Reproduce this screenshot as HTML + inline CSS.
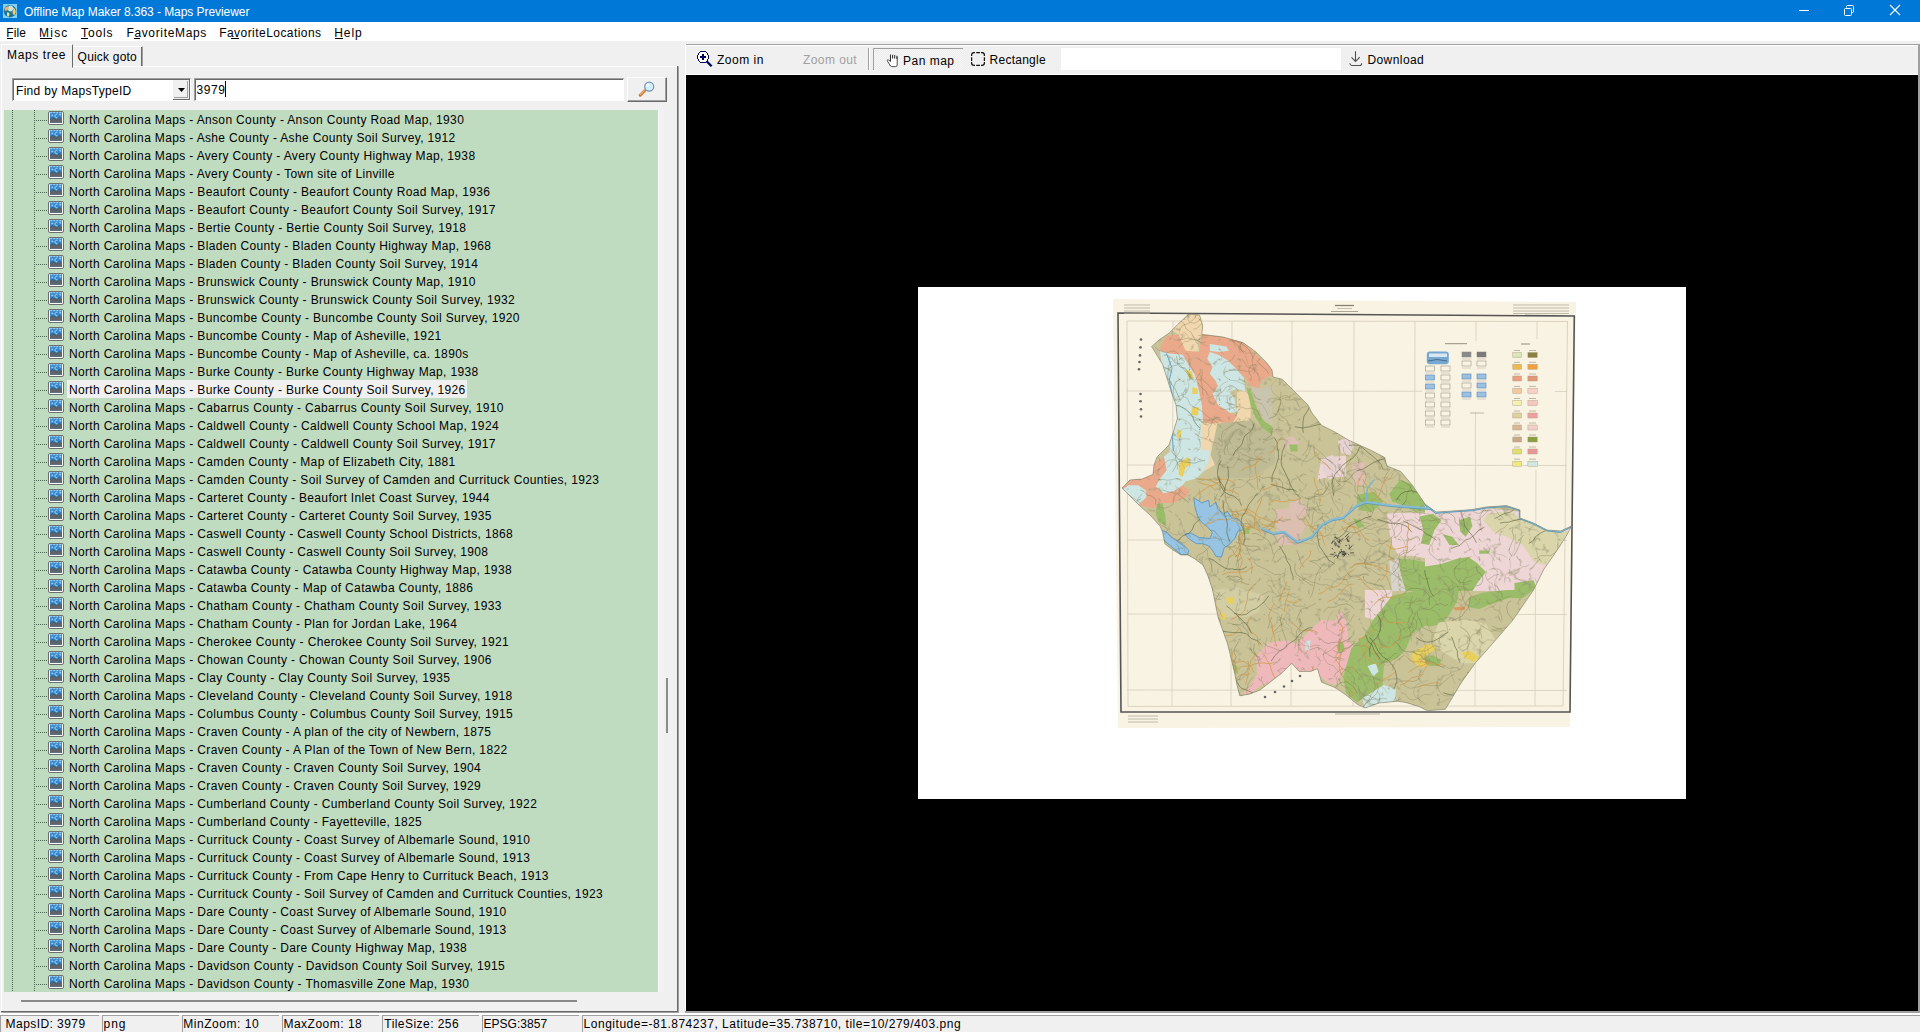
<!DOCTYPE html><html><head><meta charset="utf-8"><style>
*{margin:0;padding:0;box-sizing:border-box}
html,body{width:1920px;height:1032px;overflow:hidden;background:#f0f0f0;position:relative;font-family:"Liberation Sans",sans-serif}
.a{position:absolute}
.t{position:absolute;font-size:12px;line-height:12px;white-space:nowrap}
.u{text-decoration:underline}
</style></head><body>
<div class="a" style="left:0;top:0;width:1920px;height:22px;background:#0078d7"></div>
<svg class="a" style="left:3px;top:4px" width="14" height="14" viewBox="0 0 14 14">
<rect x="0" y="0" width="14" height="14" fill="#86d2f2"/>
<circle cx="7" cy="7.2" r="6.2" fill="#1f7396"/>
<ellipse cx="7.5" cy="4.5" rx="2.6" ry="3" fill="#c6e6ee"/>
<path d="M1.5 5 Q2.5 2 5.5 2.2 L5.8 4.5 L4.2 6.5 L2 6.8 Z" fill="#f0b464"/>
<path d="M9.2 3.2 Q12.5 4 12.8 8 L11.5 11 L9.8 10.2 L9.5 7.5 L10.5 5.8 Z" fill="#f2d06a"/>
<path d="M4.2 8.2 Q6.2 8 6.5 10 L5.8 12.4 L4.4 12.2 Q3.6 10 4.2 8.2 Z" fill="#e2e4a0"/>
</svg>
<div class="t" style="left:24.00px;top:6px;letter-spacing:-0.064px;color:#fff;">Offline Map Maker 8.363 - Maps Previewer</div>
<div class="a" style="left:1799px;top:10px;width:10px;height:1px;background:#fff"></div>
<svg class="a" style="left:1843px;top:5px" width="12" height="12" viewBox="0 0 12 12"><path d="M3.5 2.5 V1.5 Q3.5 0.5 4.5 0.5 H9.5 Q10.5 0.5 10.5 1.5 V6.5 Q10.5 7.5 9.5 7.5 H8.5" fill="none" stroke="#fff" stroke-width="1"/><rect x="1.5" y="3.5" width="7" height="7" rx="1" fill="none" stroke="#fff" stroke-width="1"/></svg>
<svg class="a" style="left:1889px;top:4px" width="12" height="12" viewBox="0 0 12 12"><path d="M1 1 L11 11 M11 1 L1 11" stroke="#fff" stroke-width="1.1"/></svg>
<div class="a" style="left:0;top:22px;width:1920px;height:19px;background:#fff"></div>
<div class="t" style="left:6.30px;top:27px;letter-spacing:0.067px;color:#000;">File</div>
<div class="t" style="left:39.00px;top:27px;letter-spacing:1.233px;color:#000;">Misc</div>
<div class="t" style="left:81.00px;top:27px;letter-spacing:0.875px;color:#000;">Tools</div>
<div class="t" style="left:126.40px;top:27px;letter-spacing:0.655px;color:#000;">FavoriteMaps</div>
<div class="t" style="left:219.20px;top:27px;letter-spacing:0.450px;color:#000;">FavoriteLocations</div>
<div class="t" style="left:334.30px;top:27px;letter-spacing:0.900px;color:#000;">Help</div>
<div class="a" style="left:7px;top:38px;width:6px;height:1px;background:#000"></div>
<div class="a" style="left:40px;top:38px;width:12px;height:1px;background:#000"></div>
<div class="a" style="left:81px;top:38px;width:7px;height:1px;background:#000"></div>
<div class="a" style="left:134px;top:38px;width:6px;height:1px;background:#000"></div>
<div class="a" style="left:231px;top:38px;width:8px;height:1px;background:#000"></div>
<div class="a" style="left:335px;top:38px;width:8px;height:1px;background:#000"></div>
<div class="a" style="left:1px;top:66px;width:678px;height:947px;border-left:1px solid #fff;border-top:1px solid #fff;border-right:2px solid #a0a0a0;border-bottom:2px solid #a0a0a0"></div>
<div class="a" style="left:677px;top:66px;width:1px;height:946px;background:#696969"></div>
<div class="a" style="left:1px;top:1011px;width:677px;height:1px;background:#696969"></div>
<div class="a" style="left:1px;top:44px;width:72px;height:24px;background:#f0f0f0;border-left:1px solid #fff;border-top:1px solid #fff;border-right:1px solid #a0a0a0"></div>
<div class="a" style="left:72px;top:45px;width:1px;height:22px;background:#696969"></div>
<div class="a" style="left:73px;top:46px;width:70px;height:20px;border-top:1px solid #fff;border-right:1px solid #a0a0a0"></div>
<div class="a" style="left:141px;top:47px;width:1px;height:19px;background:#696969"></div>
<div class="t" style="left:7.10px;top:49px;letter-spacing:0.612px;color:#000;">Maps tree</div>
<div class="t" style="left:77.60px;top:51px;letter-spacing:0.200px;color:#000;">Quick goto</div>
<div class="a" style="left:12px;top:78px;width:179px;height:23px;background:#fff;border-top:2px solid #a0a0a0;border-left:2px solid #a0a0a0;border-right:1px solid #fff;border-bottom:1px solid #fff"></div>
<div class="a" style="left:13px;top:79px;width:177px;height:1px;background:#696969"></div>
<div class="a" style="left:13px;top:79px;width:1px;height:21px;background:#696969"></div>
<div class="a" style="left:173px;top:80px;width:17px;height:20px;background:#f0f0f0;border-right:1px solid #696969;border-bottom:1px solid #696969"></div>
<div class="a" style="left:174px;top:81px;width:14px;height:17px;border-right:1px solid #a0a0a0;border-bottom:1px solid #a0a0a0"></div>
<svg class="a" style="left:178px;top:88px" width="7" height="4"><path d="M0 0 H7 L3.5 4 Z" fill="#000"/></svg>
<div class="t" style="left:16.00px;top:85px;letter-spacing:0.306px;color:#000;">Find by MapsTypeID</div>
<div class="a" style="left:194px;top:78px;width:430px;height:23px;background:#fff;border-top:2px solid #a0a0a0;border-left:2px solid #a0a0a0;border-right:1px solid #fff;border-bottom:1px solid #fff"></div>
<div class="a" style="left:195px;top:79px;width:428px;height:1px;background:#696969"></div>
<div class="a" style="left:195px;top:79px;width:1px;height:21px;background:#696969"></div>
<div class="t" style="left:196.50px;top:84px;letter-spacing:0.567px;color:#000;">3979</div>
<div class="a" style="left:225px;top:81px;width:1px;height:16px;background:#000"></div>
<div class="a" style="left:627px;top:77px;width:40px;height:25px;background:#f0f0f0;border-left:1px solid #fff;border-top:1px solid #fff;border-right:1px solid #696969;border-bottom:1px solid #696969"></div>
<div class="a" style="left:628px;top:78px;width:38px;height:23px;border-right:1px solid #a0a0a0;border-bottom:1px solid #a0a0a0"></div>
<svg class="a" style="left:638px;top:81px" width="18" height="17" viewBox="0 0 18 17">
<path d="M2.2 14.2 L6.6 9.8" stroke="#c87838" stroke-width="3" stroke-linecap="round"/>
<path d="M2.4 13.4 L6.2 9.6" stroke="#f2b878" stroke-width="1.1" stroke-linecap="round"/>
<circle cx="11.2" cy="5.6" r="4.5" fill="#d2f0fb" stroke="#7890b4" stroke-width="1.25"/>
<circle cx="10" cy="4.4" r="1.6" fill="#effbff"/>
</svg>
<div class="a" style="left:4px;top:110px;width:654px;height:882px;background:#c0dcc0"></div>
<div class="a" style="left:658px;top:110px;width:1px;height:882px;background:#fff"></div>
<div class="a" style="left:659px;top:110px;width:5px;height:882px;background:#f2f2f4"></div>
<div class="a" style="left:12px;top:110px;width:1px;height:882px;background:repeating-linear-gradient(#4d6652 0 1px,transparent 1px 2px)"></div>
<div class="a" style="left:34px;top:110px;width:1px;height:882px;background:repeating-linear-gradient(#4d6652 0 1px,transparent 1px 2px)"></div>
<div class="a" style="left:666px;top:678px;width:2px;height:55px;background:#8a8a8a"></div>
<div class="a" style="left:21px;top:1000px;width:556px;height:2px;background:#8a8a8a"></div>
<svg width="0" height="0" style="position:absolute"><defs><symbol id="ic" viewBox="0 0 16 14">
<rect x="0.5" y="0.5" width="15" height="13" rx="1.5" fill="#fff" stroke="#6e6e6e"/>
<rect x="2" y="1.2" width="12" height="10.6" fill="#3b87cf"/>
<path d="M2.5 1.7 H4 M5.5 1.7 H7 M8.5 1.7 H10 M11.5 1.7 H13" stroke="#a8dcf8" stroke-width="1"/>
<path d="M2 8.6 L4.5 6.3 L8.8 8.8 L11.4 6.3 L14 8.4 V11.8 H2 Z" fill="#606367"/>
<path d="M2 8.6 L4.5 6.3 L8.8 8.8 L11.4 6.3 L14 8.4" fill="none" stroke="#34506a" stroke-width="0.6"/>
<circle cx="4.3" cy="4.4" r="0.9" fill="#8fd4ff"/>
<path d="M9.3 3.4 A1.7 1.7 0 1 0 9.3 6.6" fill="none" stroke="#9ee0ff" stroke-width="1"/>
<path d="M12.2 2.6 V4.6 M11.2 3.6 H13.2" stroke="#9ee0ff" stroke-width="0.8"/>
</symbol></defs></svg>
<div class="a" style="left:36px;top:120px;width:12px;height:1px;background:repeating-linear-gradient(90deg,#4d6652 0 1px,transparent 1px 2px)"></div><svg class="a" style="left:48px;top:111px" width="16" height="14"><use href="#ic"/></svg><div class="t" style="left:68.9px;top:114px;letter-spacing:0.35px">North Carolina Maps - Anson County - Anson County Road Map, 1930</div><div class="a" style="left:36px;top:138px;width:12px;height:1px;background:repeating-linear-gradient(90deg,#4d6652 0 1px,transparent 1px 2px)"></div><svg class="a" style="left:48px;top:129px" width="16" height="14"><use href="#ic"/></svg><div class="t" style="left:68.9px;top:132px;letter-spacing:0.35px">North Carolina Maps - Ashe County - Ashe County Soil Survey, 1912</div><div class="a" style="left:36px;top:156px;width:12px;height:1px;background:repeating-linear-gradient(90deg,#4d6652 0 1px,transparent 1px 2px)"></div><svg class="a" style="left:48px;top:147px" width="16" height="14"><use href="#ic"/></svg><div class="t" style="left:68.9px;top:150px;letter-spacing:0.35px">North Carolina Maps - Avery County - Avery County Highway Map, 1938</div><div class="a" style="left:36px;top:174px;width:12px;height:1px;background:repeating-linear-gradient(90deg,#4d6652 0 1px,transparent 1px 2px)"></div><svg class="a" style="left:48px;top:165px" width="16" height="14"><use href="#ic"/></svg><div class="t" style="left:68.9px;top:168px;letter-spacing:0.35px">North Carolina Maps - Avery County - Town site of Linville</div><div class="a" style="left:36px;top:192px;width:12px;height:1px;background:repeating-linear-gradient(90deg,#4d6652 0 1px,transparent 1px 2px)"></div><svg class="a" style="left:48px;top:183px" width="16" height="14"><use href="#ic"/></svg><div class="t" style="left:68.9px;top:186px;letter-spacing:0.35px">North Carolina Maps - Beaufort County - Beaufort County Road Map, 1936</div><div class="a" style="left:36px;top:210px;width:12px;height:1px;background:repeating-linear-gradient(90deg,#4d6652 0 1px,transparent 1px 2px)"></div><svg class="a" style="left:48px;top:201px" width="16" height="14"><use href="#ic"/></svg><div class="t" style="left:68.9px;top:204px;letter-spacing:0.35px">North Carolina Maps - Beaufort County - Beaufort County Soil Survey, 1917</div><div class="a" style="left:36px;top:228px;width:12px;height:1px;background:repeating-linear-gradient(90deg,#4d6652 0 1px,transparent 1px 2px)"></div><svg class="a" style="left:48px;top:219px" width="16" height="14"><use href="#ic"/></svg><div class="t" style="left:68.9px;top:222px;letter-spacing:0.35px">North Carolina Maps - Bertie County - Bertie County Soil Survey, 1918</div><div class="a" style="left:36px;top:246px;width:12px;height:1px;background:repeating-linear-gradient(90deg,#4d6652 0 1px,transparent 1px 2px)"></div><svg class="a" style="left:48px;top:237px" width="16" height="14"><use href="#ic"/></svg><div class="t" style="left:68.9px;top:240px;letter-spacing:0.35px">North Carolina Maps - Bladen County - Bladen County Highway Map, 1968</div><div class="a" style="left:36px;top:264px;width:12px;height:1px;background:repeating-linear-gradient(90deg,#4d6652 0 1px,transparent 1px 2px)"></div><svg class="a" style="left:48px;top:255px" width="16" height="14"><use href="#ic"/></svg><div class="t" style="left:68.9px;top:258px;letter-spacing:0.35px">North Carolina Maps - Bladen County - Bladen County Soil Survey, 1914</div><div class="a" style="left:36px;top:282px;width:12px;height:1px;background:repeating-linear-gradient(90deg,#4d6652 0 1px,transparent 1px 2px)"></div><svg class="a" style="left:48px;top:273px" width="16" height="14"><use href="#ic"/></svg><div class="t" style="left:68.9px;top:276px;letter-spacing:0.35px">North Carolina Maps - Brunswick County - Brunswick County Map, 1910</div><div class="a" style="left:36px;top:300px;width:12px;height:1px;background:repeating-linear-gradient(90deg,#4d6652 0 1px,transparent 1px 2px)"></div><svg class="a" style="left:48px;top:291px" width="16" height="14"><use href="#ic"/></svg><div class="t" style="left:68.9px;top:294px;letter-spacing:0.35px">North Carolina Maps - Brunswick County - Brunswick County Soil Survey, 1932</div><div class="a" style="left:36px;top:318px;width:12px;height:1px;background:repeating-linear-gradient(90deg,#4d6652 0 1px,transparent 1px 2px)"></div><svg class="a" style="left:48px;top:309px" width="16" height="14"><use href="#ic"/></svg><div class="t" style="left:68.9px;top:312px;letter-spacing:0.35px">North Carolina Maps - Buncombe County - Buncombe County Soil Survey, 1920</div><div class="a" style="left:36px;top:336px;width:12px;height:1px;background:repeating-linear-gradient(90deg,#4d6652 0 1px,transparent 1px 2px)"></div><svg class="a" style="left:48px;top:327px" width="16" height="14"><use href="#ic"/></svg><div class="t" style="left:68.9px;top:330px;letter-spacing:0.35px">North Carolina Maps - Buncombe County - Map of Asheville, 1921</div><div class="a" style="left:36px;top:354px;width:12px;height:1px;background:repeating-linear-gradient(90deg,#4d6652 0 1px,transparent 1px 2px)"></div><svg class="a" style="left:48px;top:345px" width="16" height="14"><use href="#ic"/></svg><div class="t" style="left:68.9px;top:348px;letter-spacing:0.35px">North Carolina Maps - Buncombe County - Map of Asheville, ca. 1890s</div><div class="a" style="left:36px;top:372px;width:12px;height:1px;background:repeating-linear-gradient(90deg,#4d6652 0 1px,transparent 1px 2px)"></div><svg class="a" style="left:48px;top:363px" width="16" height="14"><use href="#ic"/></svg><div class="t" style="left:68.9px;top:366px;letter-spacing:0.35px">North Carolina Maps - Burke County - Burke County Highway Map, 1938</div><div class="a" style="left:36px;top:390px;width:12px;height:1px;background:repeating-linear-gradient(90deg,#4d6652 0 1px,transparent 1px 2px)"></div><svg class="a" style="left:48px;top:381px" width="16" height="14"><use href="#ic"/></svg><div class="a" style="left:67px;top:380px;width:400px;height:18px;background:#f0f0f0"></div><div class="t" style="left:68.9px;top:384px;letter-spacing:0.35px">North Carolina Maps - Burke County - Burke County Soil Survey, 1926</div><div class="a" style="left:36px;top:408px;width:12px;height:1px;background:repeating-linear-gradient(90deg,#4d6652 0 1px,transparent 1px 2px)"></div><svg class="a" style="left:48px;top:399px" width="16" height="14"><use href="#ic"/></svg><div class="t" style="left:68.9px;top:402px;letter-spacing:0.35px">North Carolina Maps - Cabarrus County - Cabarrus County Soil Survey, 1910</div><div class="a" style="left:36px;top:426px;width:12px;height:1px;background:repeating-linear-gradient(90deg,#4d6652 0 1px,transparent 1px 2px)"></div><svg class="a" style="left:48px;top:417px" width="16" height="14"><use href="#ic"/></svg><div class="t" style="left:68.9px;top:420px;letter-spacing:0.35px">North Carolina Maps - Caldwell County - Caldwell County School Map, 1924</div><div class="a" style="left:36px;top:444px;width:12px;height:1px;background:repeating-linear-gradient(90deg,#4d6652 0 1px,transparent 1px 2px)"></div><svg class="a" style="left:48px;top:435px" width="16" height="14"><use href="#ic"/></svg><div class="t" style="left:68.9px;top:438px;letter-spacing:0.35px">North Carolina Maps - Caldwell County - Caldwell County Soil Survey, 1917</div><div class="a" style="left:36px;top:462px;width:12px;height:1px;background:repeating-linear-gradient(90deg,#4d6652 0 1px,transparent 1px 2px)"></div><svg class="a" style="left:48px;top:453px" width="16" height="14"><use href="#ic"/></svg><div class="t" style="left:68.9px;top:456px;letter-spacing:0.35px">North Carolina Maps - Camden County - Map of Elizabeth City, 1881</div><div class="a" style="left:36px;top:480px;width:12px;height:1px;background:repeating-linear-gradient(90deg,#4d6652 0 1px,transparent 1px 2px)"></div><svg class="a" style="left:48px;top:471px" width="16" height="14"><use href="#ic"/></svg><div class="t" style="left:68.9px;top:474px;letter-spacing:0.35px">North Carolina Maps - Camden County - Soil Survey of Camden and Currituck Counties, 1923</div><div class="a" style="left:36px;top:498px;width:12px;height:1px;background:repeating-linear-gradient(90deg,#4d6652 0 1px,transparent 1px 2px)"></div><svg class="a" style="left:48px;top:489px" width="16" height="14"><use href="#ic"/></svg><div class="t" style="left:68.9px;top:492px;letter-spacing:0.35px">North Carolina Maps - Carteret County - Beaufort Inlet Coast Survey, 1944</div><div class="a" style="left:36px;top:516px;width:12px;height:1px;background:repeating-linear-gradient(90deg,#4d6652 0 1px,transparent 1px 2px)"></div><svg class="a" style="left:48px;top:507px" width="16" height="14"><use href="#ic"/></svg><div class="t" style="left:68.9px;top:510px;letter-spacing:0.35px">North Carolina Maps - Carteret County - Carteret County Soil Survey, 1935</div><div class="a" style="left:36px;top:534px;width:12px;height:1px;background:repeating-linear-gradient(90deg,#4d6652 0 1px,transparent 1px 2px)"></div><svg class="a" style="left:48px;top:525px" width="16" height="14"><use href="#ic"/></svg><div class="t" style="left:68.9px;top:528px;letter-spacing:0.35px">North Carolina Maps - Caswell County - Caswell County School Districts, 1868</div><div class="a" style="left:36px;top:552px;width:12px;height:1px;background:repeating-linear-gradient(90deg,#4d6652 0 1px,transparent 1px 2px)"></div><svg class="a" style="left:48px;top:543px" width="16" height="14"><use href="#ic"/></svg><div class="t" style="left:68.9px;top:546px;letter-spacing:0.35px">North Carolina Maps - Caswell County - Caswell County Soil Survey, 1908</div><div class="a" style="left:36px;top:570px;width:12px;height:1px;background:repeating-linear-gradient(90deg,#4d6652 0 1px,transparent 1px 2px)"></div><svg class="a" style="left:48px;top:561px" width="16" height="14"><use href="#ic"/></svg><div class="t" style="left:68.9px;top:564px;letter-spacing:0.35px">North Carolina Maps - Catawba County - Catawba County Highway Map, 1938</div><div class="a" style="left:36px;top:588px;width:12px;height:1px;background:repeating-linear-gradient(90deg,#4d6652 0 1px,transparent 1px 2px)"></div><svg class="a" style="left:48px;top:579px" width="16" height="14"><use href="#ic"/></svg><div class="t" style="left:68.9px;top:582px;letter-spacing:0.35px">North Carolina Maps - Catawba County - Map of Catawba County, 1886</div><div class="a" style="left:36px;top:606px;width:12px;height:1px;background:repeating-linear-gradient(90deg,#4d6652 0 1px,transparent 1px 2px)"></div><svg class="a" style="left:48px;top:597px" width="16" height="14"><use href="#ic"/></svg><div class="t" style="left:68.9px;top:600px;letter-spacing:0.35px">North Carolina Maps - Chatham County - Chatham County Soil Survey, 1933</div><div class="a" style="left:36px;top:624px;width:12px;height:1px;background:repeating-linear-gradient(90deg,#4d6652 0 1px,transparent 1px 2px)"></div><svg class="a" style="left:48px;top:615px" width="16" height="14"><use href="#ic"/></svg><div class="t" style="left:68.9px;top:618px;letter-spacing:0.35px">North Carolina Maps - Chatham County - Plan for Jordan Lake, 1964</div><div class="a" style="left:36px;top:642px;width:12px;height:1px;background:repeating-linear-gradient(90deg,#4d6652 0 1px,transparent 1px 2px)"></div><svg class="a" style="left:48px;top:633px" width="16" height="14"><use href="#ic"/></svg><div class="t" style="left:68.9px;top:636px;letter-spacing:0.35px">North Carolina Maps - Cherokee County - Cherokee County Soil Survey, 1921</div><div class="a" style="left:36px;top:660px;width:12px;height:1px;background:repeating-linear-gradient(90deg,#4d6652 0 1px,transparent 1px 2px)"></div><svg class="a" style="left:48px;top:651px" width="16" height="14"><use href="#ic"/></svg><div class="t" style="left:68.9px;top:654px;letter-spacing:0.35px">North Carolina Maps - Chowan County - Chowan County Soil Survey, 1906</div><div class="a" style="left:36px;top:678px;width:12px;height:1px;background:repeating-linear-gradient(90deg,#4d6652 0 1px,transparent 1px 2px)"></div><svg class="a" style="left:48px;top:669px" width="16" height="14"><use href="#ic"/></svg><div class="t" style="left:68.9px;top:672px;letter-spacing:0.35px">North Carolina Maps - Clay County - Clay County Soil Survey, 1935</div><div class="a" style="left:36px;top:696px;width:12px;height:1px;background:repeating-linear-gradient(90deg,#4d6652 0 1px,transparent 1px 2px)"></div><svg class="a" style="left:48px;top:687px" width="16" height="14"><use href="#ic"/></svg><div class="t" style="left:68.9px;top:690px;letter-spacing:0.35px">North Carolina Maps - Cleveland County - Cleveland County Soil Survey, 1918</div><div class="a" style="left:36px;top:714px;width:12px;height:1px;background:repeating-linear-gradient(90deg,#4d6652 0 1px,transparent 1px 2px)"></div><svg class="a" style="left:48px;top:705px" width="16" height="14"><use href="#ic"/></svg><div class="t" style="left:68.9px;top:708px;letter-spacing:0.35px">North Carolina Maps - Columbus County - Columbus County Soil Survey, 1915</div><div class="a" style="left:36px;top:732px;width:12px;height:1px;background:repeating-linear-gradient(90deg,#4d6652 0 1px,transparent 1px 2px)"></div><svg class="a" style="left:48px;top:723px" width="16" height="14"><use href="#ic"/></svg><div class="t" style="left:68.9px;top:726px;letter-spacing:0.35px">North Carolina Maps - Craven County - A plan of the city of Newbern, 1875</div><div class="a" style="left:36px;top:750px;width:12px;height:1px;background:repeating-linear-gradient(90deg,#4d6652 0 1px,transparent 1px 2px)"></div><svg class="a" style="left:48px;top:741px" width="16" height="14"><use href="#ic"/></svg><div class="t" style="left:68.9px;top:744px;letter-spacing:0.35px">North Carolina Maps - Craven County - A Plan of the Town of New Bern, 1822</div><div class="a" style="left:36px;top:768px;width:12px;height:1px;background:repeating-linear-gradient(90deg,#4d6652 0 1px,transparent 1px 2px)"></div><svg class="a" style="left:48px;top:759px" width="16" height="14"><use href="#ic"/></svg><div class="t" style="left:68.9px;top:762px;letter-spacing:0.35px">North Carolina Maps - Craven County - Craven County Soil Survey, 1904</div><div class="a" style="left:36px;top:786px;width:12px;height:1px;background:repeating-linear-gradient(90deg,#4d6652 0 1px,transparent 1px 2px)"></div><svg class="a" style="left:48px;top:777px" width="16" height="14"><use href="#ic"/></svg><div class="t" style="left:68.9px;top:780px;letter-spacing:0.35px">North Carolina Maps - Craven County - Craven County Soil Survey, 1929</div><div class="a" style="left:36px;top:804px;width:12px;height:1px;background:repeating-linear-gradient(90deg,#4d6652 0 1px,transparent 1px 2px)"></div><svg class="a" style="left:48px;top:795px" width="16" height="14"><use href="#ic"/></svg><div class="t" style="left:68.9px;top:798px;letter-spacing:0.35px">North Carolina Maps - Cumberland County - Cumberland County Soil Survey, 1922</div><div class="a" style="left:36px;top:822px;width:12px;height:1px;background:repeating-linear-gradient(90deg,#4d6652 0 1px,transparent 1px 2px)"></div><svg class="a" style="left:48px;top:813px" width="16" height="14"><use href="#ic"/></svg><div class="t" style="left:68.9px;top:816px;letter-spacing:0.35px">North Carolina Maps - Cumberland County - Fayetteville, 1825</div><div class="a" style="left:36px;top:840px;width:12px;height:1px;background:repeating-linear-gradient(90deg,#4d6652 0 1px,transparent 1px 2px)"></div><svg class="a" style="left:48px;top:831px" width="16" height="14"><use href="#ic"/></svg><div class="t" style="left:68.9px;top:834px;letter-spacing:0.35px">North Carolina Maps - Currituck County - Coast Survey of Albemarle Sound, 1910</div><div class="a" style="left:36px;top:858px;width:12px;height:1px;background:repeating-linear-gradient(90deg,#4d6652 0 1px,transparent 1px 2px)"></div><svg class="a" style="left:48px;top:849px" width="16" height="14"><use href="#ic"/></svg><div class="t" style="left:68.9px;top:852px;letter-spacing:0.35px">North Carolina Maps - Currituck County - Coast Survey of Albemarle Sound, 1913</div><div class="a" style="left:36px;top:876px;width:12px;height:1px;background:repeating-linear-gradient(90deg,#4d6652 0 1px,transparent 1px 2px)"></div><svg class="a" style="left:48px;top:867px" width="16" height="14"><use href="#ic"/></svg><div class="t" style="left:68.9px;top:870px;letter-spacing:0.35px">North Carolina Maps - Currituck County - From Cape Henry to Currituck Beach, 1913</div><div class="a" style="left:36px;top:894px;width:12px;height:1px;background:repeating-linear-gradient(90deg,#4d6652 0 1px,transparent 1px 2px)"></div><svg class="a" style="left:48px;top:885px" width="16" height="14"><use href="#ic"/></svg><div class="t" style="left:68.9px;top:888px;letter-spacing:0.35px">North Carolina Maps - Currituck County - Soil Survey of Camden and Currituck Counties, 1923</div><div class="a" style="left:36px;top:912px;width:12px;height:1px;background:repeating-linear-gradient(90deg,#4d6652 0 1px,transparent 1px 2px)"></div><svg class="a" style="left:48px;top:903px" width="16" height="14"><use href="#ic"/></svg><div class="t" style="left:68.9px;top:906px;letter-spacing:0.35px">North Carolina Maps - Dare County - Coast Survey of Albemarle Sound, 1910</div><div class="a" style="left:36px;top:930px;width:12px;height:1px;background:repeating-linear-gradient(90deg,#4d6652 0 1px,transparent 1px 2px)"></div><svg class="a" style="left:48px;top:921px" width="16" height="14"><use href="#ic"/></svg><div class="t" style="left:68.9px;top:924px;letter-spacing:0.35px">North Carolina Maps - Dare County - Coast Survey of Albemarle Sound, 1913</div><div class="a" style="left:36px;top:948px;width:12px;height:1px;background:repeating-linear-gradient(90deg,#4d6652 0 1px,transparent 1px 2px)"></div><svg class="a" style="left:48px;top:939px" width="16" height="14"><use href="#ic"/></svg><div class="t" style="left:68.9px;top:942px;letter-spacing:0.35px">North Carolina Maps - Dare County - Dare County Highway Map, 1938</div><div class="a" style="left:36px;top:966px;width:12px;height:1px;background:repeating-linear-gradient(90deg,#4d6652 0 1px,transparent 1px 2px)"></div><svg class="a" style="left:48px;top:957px" width="16" height="14"><use href="#ic"/></svg><div class="t" style="left:68.9px;top:960px;letter-spacing:0.35px">North Carolina Maps - Davidson County - Davidson County Soil Survey, 1915</div><div class="a" style="left:36px;top:984px;width:12px;height:1px;background:repeating-linear-gradient(90deg,#4d6652 0 1px,transparent 1px 2px)"></div><svg class="a" style="left:48px;top:975px" width="16" height="14"><use href="#ic"/></svg><div class="t" style="left:68.9px;top:978px;letter-spacing:0.35px">North Carolina Maps - Davidson County - Thomasville Zone Map, 1930</div>
<div class="a" style="left:685px;top:44px;width:1235px;height:1px;background:#a0a0a0"></div>
<div class="a" style="left:685px;top:45px;width:1233px;height:1px;background:#fff"></div>
<div class="a" style="left:685px;top:44px;width:1px;height:968px;background:#fff"></div>
<div class="a" style="left:686px;top:74px;width:1232px;height:1px;background:#fff"></div>
<svg class="a" style="left:697px;top:51px" width="16" height="16" viewBox="0 0 16 16" shape-rendering="crispEdges"><rect x="1" y="1" width="10" height="10" fill="#fff"/><g fill="#000058"><rect x="3" y="0" width="6" height="1"/><rect x="2" y="1" width="1" height="1"/><rect x="9" y="1" width="1" height="1"/><rect x="1" y="2" width="1" height="2"/><rect x="10" y="2" width="1" height="2"/><rect x="0" y="4" width="1" height="4"/><rect x="11" y="4" width="1" height="4"/><rect x="1" y="8" width="1" height="2"/><rect x="10" y="8" width="1" height="2"/><rect x="2" y="10" width="1" height="1"/><rect x="9" y="10" width="1" height="1"/><rect x="3" y="11" width="6" height="1"/><rect x="3" y="5" width="6" height="2"/><rect x="5" y="3" width="2" height="6"/></g><path d="M9.6 10.2 L14.6 15.2" stroke="#000058" stroke-width="2.3" shape-rendering="auto"/></svg>
<div class="t" style="left:717.00px;top:54px;letter-spacing:0.500px;color:#000;">Zoom in</div>
<div class="t" style="left:803.00px;top:54px;letter-spacing:0.429px;color:#a0a0a0;">Zoom out</div>
<div class="a" style="left:873px;top:48px;width:90px;height:22px;border-top:1px solid #a0a0a0;border-left:1px solid #a0a0a0;background:repeating-conic-gradient(#f7f7f7 0 25%,#ececec 0 50%) 0 0/2px 2px"></div>
<div class="t" style="left:903.00px;top:55px;letter-spacing:0.500px;color:#000;">Pan map</div>
<div class="t" style="left:989.60px;top:54px;letter-spacing:0.250px;color:#000;">Rectangle</div>
<div class="t" style="left:1367.40px;top:54px;letter-spacing:0.429px;color:#000;">Download</div>
<div class="a" style="left:868px;top:48px;width:1px;height:22px;background:#a0a0a0"></div>
<div class="a" style="left:869px;top:48px;width:1px;height:22px;background:#fff"></div>
<svg class="a" style="left:885px;top:52px" width="14" height="16" viewBox="0 0 14 16">
<path d="M5.5 2.5 L12.2 3.6 V13 Q12.2 14.6 10.6 14.6 H6.6 Q5.9 14.6 5.5 14 L2 8.4 Q2.6 7.6 3.6 8 L5.5 9.5 Z" fill="#fff"/>
<path d="M5.5 9.5 V2.6 M7.6 6.6 V2.8 M9.7 6.6 V3 M11.9 7 V3.8" fill="none" stroke="#2e2e2e" stroke-width="1.05"/>
<path d="M12.2 4.6 V13 Q12.2 14.6 10.6 14.6 H6.6 Q5.9 14.6 5.5 14 L2 8.4 Q2.6 7.6 3.6 8 L5.5 9.5" fill="none" stroke="#444" stroke-width="0.95"/>
</svg>
<svg class="a" style="left:971px;top:52px" width="15" height="15" viewBox="0 0 15 15"><path d="M0.6 4 V3 Q0.6 0.6 3 0.6 H4 M5.2 0.6 H9 M10 0.6 H11 Q13.4 0.6 13.4 3 V4 M13.4 5.2 V9 M13.4 10 V11 Q13.4 13.4 11 13.4 H10 M9 13.4 H5.2 M4 13.4 H3 Q0.6 13.4 0.6 11 V10 M0.6 9 V5.2" fill="none" stroke="#141414" stroke-width="1.25"/></svg>
<div class="a" style="left:1061px;top:48px;width:280px;height:22px;background:#fff"></div>
<svg class="a" style="left:1349px;top:51px" width="14" height="16" viewBox="0 0 14 16">
<path d="M6.5 0.3 V10.4 M2.5 6.3 L6.5 10.4 L10.8 6.1" fill="none" stroke="#505050" stroke-width="1.1"/>
<path d="M0.8 12.2 Q1.1 14.5 2.8 14.5 H11 Q12.6 14.5 12.7 12.2" fill="none" stroke="#505050" stroke-width="1.1"/>
</svg>
<div class="a" style="left:686px;top:75px;width:1232px;height:936px;background:#000"></div>
<div class="a" style="left:1918px;top:44px;width:2px;height:969px;background:#a0a0a0"></div>
<div class="a" style="left:685px;top:1011px;width:1235px;height:2px;background:#a0a0a0"></div>
<div class="a" style="left:918px;top:287px;width:768px;height:512px;background:#fff"></div>
<svg class="a" style="left:0;top:0" width="1920" height="1032" viewBox="0 0 1920 1032">
<defs><clipPath id="cc"><polygon points="1187.8,313.9 1199.5,314.9 1202.7,325.6 1201.8,334.3 1223.0,337.0 1243.0,342.6 1256.0,352.0 1266.0,362.0 1272.0,370.0 1273.0,377.0 1282.2,379.2 1293.0,390.0 1308.0,405.0 1312.0,413.0 1321.5,425.3 1335.0,432.0 1348.7,440.2 1370.4,450.0 1384.8,457.5 1386.9,466.0 1400.7,471.4 1412.5,485.3 1425.0,504.0 1436.0,512.0 1452.0,511.0 1472.0,509.6 1486.0,507.0 1506.4,505.6 1520.0,510.0 1520.0,518.0 1533.5,523.0 1547.0,530.0 1560.6,531.0 1571.5,526.0 1567.4,534.0 1560.6,545.0 1552.5,557.0 1544.0,569.0 1533.5,590.0 1513.1,619.8 1495.5,640.2 1475.2,663.2 1461.6,682.2 1449.4,702.6 1445.3,709.3 1427.4,710.7 1419.2,706.6 1406.0,702.5 1397.5,701.2 1379.0,703.0 1365.0,708.0 1356.8,703.9 1346.0,695.0 1335.0,687.6 1321.5,682.2 1317.5,668.7 1310.7,671.4 1299.0,671.4 1291.7,663.2 1280.8,674.0 1270.0,682.2 1260.0,690.0 1250.0,694.0 1239.8,695.8 1237.0,685.0 1234.3,671.4 1227.6,644.0 1218.0,617.0 1212.6,590.0 1208.0,576.0 1203.0,565.0 1195.0,559.0 1188.0,555.0 1181.0,555.0 1173.0,550.0 1165.0,544.0 1162.5,532.0 1160.0,526.0 1150.0,515.0 1138.0,504.2 1122.0,488.0 1130.0,480.0 1142.2,479.0 1153.0,474.4 1154.0,465.0 1157.0,457.0 1169.0,445.0 1173.3,432.0 1177.4,418.5 1176.0,405.0 1172.0,394.0 1162.5,364.2 1151.6,346.6 1159.2,339.8 1169.2,333.0 1178.7,323.6 1188.0,314.7"/></clipPath><filter id="tx" x="1110" y="300" width="470" height="420" filterUnits="userSpaceOnUse"><feTurbulence type="turbulence" baseFrequency="0.05" numOctaves="3" seed="7"/><feColorMatrix type="matrix" values="0 0 0 0 0.3  0 0 0 0 0.3  0 0 0 0 0.18  -5 0 0 0 0.72"/></filter></defs>
<polygon points="1113,299 1576,302 1570,727 1118,728" fill="#f9f3e3"/>
<line x1="1173" y1="321" x2="1172" y2="706" stroke="#d9d2c2" stroke-width="0.9"/><line x1="1232" y1="321" x2="1231" y2="706" stroke="#d9d2c2" stroke-width="0.9"/><line x1="1292" y1="321" x2="1291" y2="706" stroke="#d9d2c2" stroke-width="0.9"/><line x1="1354" y1="321" x2="1353" y2="706" stroke="#d9d2c2" stroke-width="0.9"/><line x1="1415" y1="321" x2="1414" y2="706" stroke="#d9d2c2" stroke-width="0.9"/><line x1="1476" y1="321" x2="1476" y2="341" stroke="#d9d2c2" stroke-width="0.9"/><line x1="1475.5" y1="412" x2="1475" y2="706" stroke="#d9d2c2" stroke-width="0.9"/><line x1="1537" y1="321" x2="1537" y2="339" stroke="#d9d2c2" stroke-width="0.9"/><line x1="1536" y1="470" x2="1535" y2="706" stroke="#d9d2c2" stroke-width="0.9"/><line x1="1127" y1="391" x2="1422" y2="391.3" stroke="#d9d2c2" stroke-width="0.9"/><line x1="1555" y1="391.5" x2="1567" y2="391.5" stroke="#d9d2c2" stroke-width="0.9"/><line x1="1127" y1="465" x2="1567" y2="465.5" stroke="#d9d2c2" stroke-width="0.9"/><line x1="1127" y1="540" x2="1567" y2="540.5" stroke="#d9d2c2" stroke-width="0.9"/><line x1="1127" y1="614" x2="1567" y2="614.5" stroke="#d9d2c2" stroke-width="0.9"/><line x1="1127" y1="690" x2="1567" y2="690.5" stroke="#d9d2c2" stroke-width="0.9"/><polygon points="1127,321 1567.5,321.5 1563,706 1128,706.4" fill="none" stroke="#d3cab8" stroke-width="0.8"/>
<polygon points="1118,313 1574.3,316 1570,712 1121,712" fill="none" stroke="#555" stroke-width="1.6"/>
<polygon points="1187.8,313.9 1199.5,314.9 1202.7,325.6 1201.8,334.3 1223.0,337.0 1243.0,342.6 1256.0,352.0 1266.0,362.0 1272.0,370.0 1273.0,377.0 1282.2,379.2 1293.0,390.0 1308.0,405.0 1312.0,413.0 1321.5,425.3 1335.0,432.0 1348.7,440.2 1370.4,450.0 1384.8,457.5 1386.9,466.0 1400.7,471.4 1412.5,485.3 1425.0,504.0 1436.0,512.0 1452.0,511.0 1472.0,509.6 1486.0,507.0 1506.4,505.6 1520.0,510.0 1520.0,518.0 1533.5,523.0 1547.0,530.0 1560.6,531.0 1571.5,526.0 1567.4,534.0 1560.6,545.0 1552.5,557.0 1544.0,569.0 1533.5,590.0 1513.1,619.8 1495.5,640.2 1475.2,663.2 1461.6,682.2 1449.4,702.6 1445.3,709.3 1427.4,710.7 1419.2,706.6 1406.0,702.5 1397.5,701.2 1379.0,703.0 1365.0,708.0 1356.8,703.9 1346.0,695.0 1335.0,687.6 1321.5,682.2 1317.5,668.7 1310.7,671.4 1299.0,671.4 1291.7,663.2 1280.8,674.0 1270.0,682.2 1260.0,690.0 1250.0,694.0 1239.8,695.8 1237.0,685.0 1234.3,671.4 1227.6,644.0 1218.0,617.0 1212.6,590.0 1208.0,576.0 1203.0,565.0 1195.0,559.0 1188.0,555.0 1181.0,555.0 1173.0,550.0 1165.0,544.0 1162.5,532.0 1160.0,526.0 1150.0,515.0 1138.0,504.2 1122.0,488.0 1130.0,480.0 1142.2,479.0 1153.0,474.4 1154.0,465.0 1157.0,457.0 1169.0,445.0 1173.3,432.0 1177.4,418.5 1176.0,405.0 1172.0,394.0 1162.5,364.2 1151.6,346.6 1159.2,339.8 1169.2,333.0 1178.7,323.6 1188.0,314.7" fill="#cac398"/>
<g clip-path="url(#cc)">
<polygon points="1188.2,314.7 1200.4,315.4 1203.1,322.2 1201.8,334.4 1196.4,341.2 1199.1,350.7 1193.7,352.0 1185.5,350.7 1180.1,343.9 1178.7,334.4 1172.0,330.3 1178.7,323.6" fill="#f1d7ae"/>
<polygon points="1166.5,335.8 1178.7,334.4 1185.5,350.7 1199.1,352.0 1201.8,334.4 1223.5,337.1 1243.8,342.5 1256.0,354.8 1264.2,361.5 1272.3,367.0 1272.3,375.1 1261.5,380.5 1258.7,388.7 1250.6,385.9 1245.2,377.8 1234.3,367.0 1227.6,360.2 1218.1,354.8 1209.9,352.0 1207.2,358.8 1212.6,367.0 1209.9,373.7 1215.4,380.5 1218.1,385.9 1212.6,394.1 1218.1,404.9 1230.3,413.1 1237.1,415.8 1231.6,423.9 1220.8,422.6 1209.9,423.9 1203.1,421.2 1201.8,404.9 1199.1,391.4 1195.0,375.1 1188.2,364.2 1182.8,354.8 1169.2,353.4 1163.8,356.1 1159.8,348.0" fill="#eaa98b"/>
<polygon points="1159.8,350.7 1169.2,353.4 1182.8,354.8 1188.2,364.2 1195.0,375.1 1199.1,391.4 1201.8,404.9 1203.1,421.2 1201.8,451.0 1169.2,451.0 1174.7,418.5 1174.7,404.9 1170.6,394.1 1165.2,380.5 1161.8,364.2" fill="#cde5e3"/>
<polygon points="1209.9,352.0 1218.1,354.8 1227.6,360.2 1234.3,367.0 1243.8,377.8 1245.2,391.4 1237.1,388.7 1228.9,391.4 1234.3,398.1 1237.1,411.7 1230.3,413.1 1218.1,404.9 1212.6,394.1 1218.1,385.9 1215.4,380.5 1209.9,373.7 1212.6,367.0 1207.2,358.8" fill="#cde5e3"/>
<polygon points="1209.9,343.9 1226.2,346.6 1228.9,350.7 1218.1,352.0 1209.9,350.7" fill="#cde5e3"/>
<polygon points="1201.8,421.2 1209.9,423.9 1220.8,422.6 1231.6,423.9 1237.1,415.8 1237.1,391.4 1245.2,391.4 1250.6,396.8 1250.6,418.5 1242.5,432.1 1234.3,451.0 1201.8,451.0" fill="#f1d7ae"/>
<polygon points="1250.6,385.9 1258.7,388.7 1272.3,385.9 1272.3,425.3 1262.8,418.5 1257.4,404.9 1252.0,391.4" fill="#c9c4ae"/>
<polygon points="1246.5,387.3 1250.6,390.0 1254.7,402.2 1258.7,413.1 1264.2,421.2 1272.3,426.6 1272.3,434.8 1262.8,429.3 1256.0,418.5 1250.6,404.9" fill="#9bbd69"/>
<polygon points="1218.1,429.3 1234.3,451.0 1272.3,451.0 1272.3,438.8 1250.6,425.3 1242.5,432.1" fill="#cac398"/>
<polygon points="1185.5,369.7 1190.9,371.0 1193.7,377.8 1189.6,379.2" fill="#e9cf5c"/>
<polygon points="1192.3,387.3 1197.7,388.7 1197.7,394.1 1192.3,394.1" fill="#e9cf5c"/>
<polygon points="1192.3,407.6 1199.1,407.6 1197.7,415.8 1190.9,414.4" fill="#e9cf5c"/>
<polygon points="1177.4,429.3 1181.4,430.7 1180.1,438.8 1176.7,437.5" fill="#e9cf5c"/>
<polygon points="1209.9,450.0 1272.3,450.0 1272.3,591.0 1209.9,591.0 1190.9,553.1 1142.1,507.0" fill="#cac398"/>
<polygon points="1209.9,450.0 1226.2,450.0 1223.5,458.1 1212.6,466.3 1203.1,471.7 1209.9,460.8" fill="#f1d7ae"/>
<polygon points="1163.8,456.8 1172.0,450.0 1209.9,450.0 1209.9,460.8 1203.1,471.7 1196.4,478.5 1185.5,481.2 1182.8,485.3 1174.7,490.7 1163.8,493.4 1155.7,486.6 1159.8,478.5 1166.5,470.3" fill="#cde5e3"/>
<polygon points="1121.8,486.6 1129.9,479.2 1142.1,477.8 1153.0,473.1 1154.3,463.6 1163.8,456.8 1166.5,470.3 1159.8,478.5 1155.7,486.6 1163.8,493.4 1174.7,490.7 1182.8,485.3 1189.6,490.7 1185.5,497.5 1173.3,502.9 1161.1,502.9 1154.3,508.3 1139.4,505.6 1146.2,497.5 1146.2,490.7 1138.1,485.3 1128.6,485.3 1123.1,489.3" fill="#eaa98b"/>
<polygon points="1128.6,485.3 1138.1,485.3 1146.2,490.7 1146.2,497.5 1138.1,504.2 1123.1,489.3" fill="#cde5e3"/>
<polygon points="1178.7,463.6 1188.2,456.8 1190.9,464.9 1185.5,467.6 1182.8,477.1 1178.7,474.4" fill="#e9cf5c"/>
<polygon points="1193.7,497.5 1201.8,502.9 1208.6,500.2 1209.9,507.0 1216.0,502.2 1218.1,509.7 1223.5,513.7 1227.6,511.7 1231.6,517.8 1237.1,518.5 1243.2,523.9 1243.8,529.3 1237.7,531.4 1235.0,538.1 1228.9,544.9 1224.2,547.6 1221.5,557.1 1216.0,556.5 1212.6,550.4 1208.6,545.6 1201.8,543.6 1196.4,543.6 1188.9,538.8 1184.8,534.1 1190.9,533.0 1199.1,537.5 1209.9,538.4 1212.4,532.7 1207.2,526.6 1201.8,522.6 1198.4,517.8 1196.4,512.4 1195.0,507.0" fill="#96c4e2" stroke="#5a98c4" stroke-width="0.9"/>
<polygon points="1159.8,530.0 1166.5,532.0 1173.3,538.8 1182.8,544.3 1188.9,550.4 1187.6,554.7 1181.4,554.7 1174.7,549.3 1167.9,543.8 1161.1,537.1" fill="#96c4e2" stroke="#5a98c4" stroke-width="0.9"/>
<polygon points="1157.0,504.2 1162.5,502.9 1165.2,515.1 1166.5,525.9 1158.4,521.9 1155.7,513.7" fill="#9bbd69"/>
<polygon points="1242.5,528.7 1249.3,527.3 1249.3,534.1 1243.8,534.1" fill="#9bbd69"/>
<polygon points="1321.5,458.1 1345.9,455.4 1345.9,477.1 1328.3,477.1 1317.5,479.8" fill="#efd6d6"/>
<polygon points="1275.4,509.7 1297.1,507.0 1305.3,525.9 1297.1,544.9 1278.1,544.9" fill="#dcbfb0"/>
<polygon points="1351.4,463.6 1364.9,462.2 1364.9,485.3 1354.1,485.3" fill="#dcbfb0"/>
<polygon points="1358.1,494.8 1370.4,494.8 1381.2,501.5 1373.1,511.0 1362.2,511.0 1356.8,504.2" fill="#9bbd69"/>
<polygon points="1389.3,493.4 1400.2,479.8 1411.0,483.9 1419.2,497.5 1427.3,501.5 1427.3,512.4 1413.7,509.7 1400.2,504.2 1392.1,501.5" fill="#9bbd69"/>
<polygon points="1352.7,517.8 1359.5,520.5 1364.9,525.9 1358.1,528.7" fill="#9bbd69"/>
<polygon points="1386.6,513.7 1405.6,512.4 1427.3,513.7 1427.3,558.5 1412.4,555.8 1398.8,555.8 1392.1,544.9 1389.3,531.4" fill="#efd6d6"/>
<polygon points="1398.8,558.5 1413.7,559.8 1427.3,562.6 1427.3,591.0 1405.6,591.0 1400.2,572.1" fill="#9bbd69"/>
<polygon points="1389.3,561.2 1398.8,558.5 1400.2,572.1 1405.6,591.0 1392.1,591.0" fill="#d8d4cc"/>
<polygon points="1217.4,423.6 1252.3,420.1 1275.0,437.6 1275.0,463.7 1252.3,477.7 1220.9,477.7 1210.5,455.0" fill="#bfbb94"/>
<polygon points="1322.1,458.5 1332.6,455.0 1339.5,463.7 1337.8,475.9 1329.1,479.4 1323.0,470.7" fill="#e6d2d2"/>
<polygon points="1283.7,439.3 1292.4,435.8 1299.4,442.8 1295.9,449.8 1287.2,448.9" fill="#dcc0b4"/>
<polygon points="1353.5,469.0 1362.2,466.3 1365.7,477.7 1360.5,484.7 1354.4,481.2" fill="#dcc0b4"/>
<polygon points="1289.0,503.8 1299.4,499.5 1307.3,509.1 1302.9,518.7 1290.7,517.8" fill="#dcc0b4"/>
<polygon points="1337.8,441.1 1348.3,437.6 1353.5,446.3 1350.0,455.0 1341.3,453.3" fill="#e6d2d2"/>
<polygon points="1357.0,495.1 1374.4,491.6 1383.2,502.1 1370.9,512.6 1358.7,509.1" fill="#9bbd69"/>
<polygon points="1391.9,491.6 1402.3,481.2 1416.3,491.6 1426.8,505.6 1416.3,512.6 1398.8,502.1" fill="#9bbd69"/>
<polygon points="1289.0,444.5 1297.7,444.5 1297.7,451.5 1290.7,451.5" fill="#9bbd69"/>
<polygon points="1425.0,501.5 1574.2,517.8 1574.2,591.0 1425.0,591.0" fill="#efd6d6"/>
<polygon points="1487.4,513.7 1509.1,511.0 1519.9,517.8 1533.5,523.2 1547.1,530.0 1560.6,531.4 1568.7,531.4 1560.6,544.9 1552.5,557.1 1544.3,565.3 1533.5,561.2 1522.6,544.9 1506.4,536.8 1492.8,531.4 1483.3,520.5" fill="#dad5ab"/>
<polygon points="1458.9,520.5 1469.8,516.4 1472.5,525.9 1465.7,536.8 1460.3,531.4" fill="#9bbd69"/>
<polygon points="1419.6,516.4 1433.1,513.7 1441.3,520.5 1434.5,530.0 1429.1,544.9 1420.9,543.6 1423.6,531.4" fill="#9bbd69"/>
<polygon points="1442.6,534.1 1452.1,536.8 1458.9,544.9 1449.4,544.9" fill="#9bbd69"/>
<polygon points="1425.0,566.6 1441.3,563.9 1457.5,558.5 1468.4,557.1 1476.5,562.6 1486.0,572.1 1479.2,580.2 1472.5,591.0 1425.0,591.0" fill="#9bbd69"/>
<polygon points="1514.5,582.9 1533.5,580.2 1537.6,591.0 1514.5,591.0" fill="#9bbd69"/>
<polygon points="1479.2,550.4 1490.1,550.4 1488.7,553.7 1479.2,553.7" fill="#9bbd69"/>
<polygon points="1212.6,590.0 1237.1,587.3 1264.2,595.4 1258.7,611.7 1237.1,621.2 1220.8,617.1" fill="#d3cda4"/>
<polygon points="1218.1,617.1 1272.3,617.1 1272.3,731.0 1234.3,731.0" fill="#cac398"/>
<polygon points="1256.0,657.8 1264.2,647.0 1272.3,644.2 1272.3,683.6 1264.2,683.6 1250.6,693.1 1242.5,694.4 1250.6,684.9 1257.4,674.1" fill="#efb9bc"/>
<polygon points="1226.2,598.1 1234.3,596.8 1233.0,603.6 1227.6,603.6" fill="#e9cf5c"/>
<polygon points="1220.8,614.4 1226.2,613.1 1224.8,619.8 1220.8,619.2" fill="#e9cf5c"/>
<polygon points="1231.6,663.2 1237.1,665.9 1238.4,674.1 1233.0,671.4" fill="#9bbd69"/>
<polygon points="1267.3,642.9 1286.3,640.2 1297.1,644.2 1305.3,634.8 1321.5,619.8 1335.1,621.2 1340.5,610.3 1345.9,619.8 1348.7,641.5 1354.1,647.0 1348.7,660.5 1343.2,671.4 1335.1,684.9 1327.0,682.2 1321.5,676.8 1316.1,671.4 1310.7,671.4 1299.8,671.4 1291.7,663.2 1280.8,674.1 1267.3,682.2" fill="#efb9bc"/>
<polygon points="1343.2,676.8 1351.4,648.3 1364.9,634.8 1373.1,619.8 1383.9,606.3 1392.1,595.4 1427.3,588.6 1427.3,623.9 1412.4,633.4 1405.6,649.7 1392.1,663.2 1383.9,665.9 1382.6,684.9 1364.9,697.1 1356.8,702.6 1345.9,693.1" fill="#9bbd69"/>
<polygon points="1364.9,590.0 1392.1,590.0 1392.1,595.4 1383.9,606.3 1373.1,619.8 1364.9,617.1" fill="#efd6d6"/>
<polygon points="1383.9,663.2 1405.6,655.1 1427.3,649.7 1427.3,709.3 1405.6,703.9 1396.1,687.6 1386.6,674.1" fill="#cac398"/>
<polygon points="1362.2,698.5 1383.9,684.9 1396.1,689.0 1394.8,701.2 1383.9,702.6 1364.9,708.0" fill="#cde5e3"/>
<polygon points="1367.6,665.9 1375.8,663.2 1378.5,671.4 1373.1,676.8 1370.4,671.4" fill="#cde5e3"/>
<polygon points="1411.0,655.1 1419.2,648.3 1427.3,647.0 1427.3,665.9 1419.2,667.3 1413.7,661.9" fill="#e9cf5c"/>
<polygon points="1336.4,645.6 1343.2,641.5 1344.6,649.7 1339.2,653.7" fill="#9bbd69"/>
<polygon points="1305.3,641.5 1310.7,640.2 1309.3,651.0 1305.3,649.7" fill="#cde5e3"/>
<polygon points="1423.6,590.0 1458.9,590.0 1457.5,600.8 1449.4,614.4 1441.3,623.9 1430.4,626.6 1423.6,625.3" fill="#9bbd69"/>
<polygon points="1468.4,598.1 1482.0,592.7 1506.4,590.0 1533.5,590.0 1522.6,598.1 1509.1,598.1 1492.8,603.6 1479.2,609.0 1469.8,607.6" fill="#9bbd69"/>
<polygon points="1438.6,622.5 1465.7,619.8 1486.0,623.9 1495.5,640.2 1475.2,663.2 1461.6,663.2 1441.3,651.0 1433.1,637.5" fill="#dad5ab"/>
<polygon points="1425.0,657.8 1433.1,655.1 1441.3,660.5 1438.6,665.9 1430.4,665.9 1425.0,663.2" fill="#9bbd69"/>
<polygon points="1423.6,645.6 1433.1,644.2 1435.8,649.7 1427.7,653.7 1423.6,652.4" fill="#e9cf5c"/>
<polygon points="1461.6,652.4 1471.1,651.0 1479.2,657.8 1473.8,661.9 1464.3,657.8" fill="#e9cf5c"/>
<polygon points="1453.5,607.6 1465.7,606.3 1464.3,610.3 1454.8,610.3" fill="#d79a60"/>
<rect x="1110" y="300" width="470" height="420" filter="url(#tx)" opacity="0.9"/>
<polyline points="1324.5,536.8 1329.9,533.4 1332.9,528.1 1335.3,523.5 1335.2,518.9 1332.5,514.9 1332.6,509.5" fill="none" stroke="#9a8868" stroke-width="0.5" opacity="0.6"/><polyline points="1556.1,574.3 1552.3,569.3 1549.7,568.7 1546.2,564.9 1545.0,561.1" fill="none" stroke="#9a8868" stroke-width="0.4" opacity="0.6"/><polyline points="1354.6,568.8 1350.4,572.2 1347.0,575.8 1344.1,576.2 1339.0,579.1 1336.7,580.4 1333.9,581.5 1331.9,584.8 1332.3,587.3" fill="none" stroke="#6b6a48" stroke-width="0.4" opacity="0.6"/><polyline points="1214.8,676.3 1212.1,677.3 1206.2,678.1 1203.7,679.6 1198.8,684.4 1196.0,685.5 1193.9,687.6 1193.4,693.6 1195.4,698.2" fill="none" stroke="#5e6a40" stroke-width="0.6" opacity="0.6"/><polyline points="1206.2,605.3 1209.6,607.8 1210.0,610.3 1207.1,616.6 1203.3,622.4 1203.9,625.7 1200.9,630.0 1199.1,632.0 1198.4,636.4" fill="none" stroke="#6b6a48" stroke-width="0.6" opacity="0.6"/><polyline points="1268.7,431.9 1274.1,431.9 1277.0,429.0 1279.6,427.3" fill="none" stroke="#9a8868" stroke-width="0.5" opacity="0.6"/><polyline points="1496.2,368.0 1494.3,374.3 1491.7,376.8 1489.9,382.4 1487.0,384.1 1480.6,383.1 1476.4,381.6 1473.9,382.4 1470.7,380.9" fill="none" stroke="#5e6a40" stroke-width="0.5" opacity="0.6"/><polyline points="1310.2,674.1 1305.4,677.3 1304.3,680.6 1301.9,686.5 1299.8,689.6 1296.6,690.7 1294.9,694.0 1293.8,696.5" fill="none" stroke="#7d7550" stroke-width="0.5" opacity="0.6"/><polyline points="1286.7,541.7 1291.1,542.8 1296.9,542.7 1303.6,542.8 1310.2,543.8 1314.3,544.3" fill="none" stroke="#8a7a58" stroke-width="0.4" opacity="0.6"/><polyline points="1129.6,567.2 1126.8,568.5 1124.7,572.5 1124.0,575.1 1119.2,578.5 1116.8,584.8 1116.5,587.7 1116.3,590.6 1112.3,596.0" fill="none" stroke="#6b6a48" stroke-width="0.5" opacity="0.6"/><polyline points="1378.9,562.7 1378.8,565.6 1380.5,568.0 1384.1,570.4 1390.5,572.4 1394.3,575.1 1398.5,577.7 1402.5,580.4" fill="none" stroke="#8a7a58" stroke-width="0.6" opacity="0.6"/><polyline points="1159.7,322.9 1164.7,321.4 1168.1,322.9 1171.7,321.4" fill="none" stroke="#9a8868" stroke-width="0.4" opacity="0.6"/><polyline points="1354.3,614.0 1352.4,617.0 1350.9,620.3 1347.2,625.2 1344.3,626.9 1342.3,629.8 1339.0,630.9" fill="none" stroke="#7d7550" stroke-width="0.5" opacity="0.6"/><polyline points="1278.5,670.5 1280.6,673.6 1284.7,675.5 1288.2,675.8" fill="none" stroke="#5e6a40" stroke-width="0.5" opacity="0.6"/><polyline points="1402.8,510.6 1401.9,513.2 1404.5,519.1 1409.7,521.4 1413.0,523.4 1414.4,525.6 1418.6,527.5 1424.5,525.4" fill="none" stroke="#7d7550" stroke-width="0.4" opacity="0.6"/><polyline points="1480.2,705.6 1483.4,710.0 1484.4,716.8 1483.9,720.1" fill="none" stroke="#5e6a40" stroke-width="0.5" opacity="0.6"/><polyline points="1200.8,318.3 1198.6,321.1 1194.2,323.3 1189.6,322.2 1188.0,319.4 1188.1,313.8 1186.4,309.8 1187.3,305.6 1187.7,302.3" fill="none" stroke="#6b6a48" stroke-width="0.5" opacity="0.6"/><polyline points="1368.6,573.8 1363.2,574.0 1358.2,576.8 1352.8,576.9 1349.5,575.7 1345.7,569.9" fill="none" stroke="#8a7a58" stroke-width="0.6" opacity="0.6"/><polyline points="1561.5,685.0 1559.1,688.3 1559.2,692.8 1558.8,698.7 1558.7,701.4 1557.3,703.8 1554.5,705.5 1550.4,709.9 1549.9,713.1" fill="none" stroke="#9a8868" stroke-width="0.6" opacity="0.6"/><polyline points="1354.2,583.8 1348.8,585.2 1344.4,584.5 1338.4,582.9 1335.3,581.8 1329.2,579.3 1323.7,579.4" fill="none" stroke="#9a8868" stroke-width="0.4" opacity="0.6"/><polyline points="1257.6,370.2 1254.5,368.9 1250.2,366.8 1248.1,365.2 1247.1,360.5 1245.0,354.8" fill="none" stroke="#9a8868" stroke-width="0.4" opacity="0.6"/><polyline points="1342.0,589.0 1348.2,591.3 1351.1,594.5 1355.4,596.4 1361.9,597.5 1366.2,602.5 1368.0,604.9 1369.9,606.7" fill="none" stroke="#8a7a58" stroke-width="0.4" opacity="0.6"/><polyline points="1437.4,703.0 1442.8,701.8 1446.4,699.8 1449.3,698.9 1452.3,699.1" fill="none" stroke="#9a8868" stroke-width="0.6" opacity="0.6"/><polyline points="1233.3,392.7 1228.8,395.6 1223.5,395.9 1217.1,395.8 1213.6,395.6 1209.1,397.5 1206.0,398.3" fill="none" stroke="#8a7a58" stroke-width="0.4" opacity="0.6"/><polyline points="1262.8,439.4 1266.1,439.2 1271.2,435.1 1272.0,432.3 1272.5,427.9" fill="none" stroke="#5e6a40" stroke-width="0.6" opacity="0.6"/><polyline points="1477.1,364.1 1474.1,364.5 1470.0,364.6 1466.4,362.7 1462.7,358.8 1456.8,355.0 1454.1,349.6 1452.8,347.3 1452.4,342.0" fill="none" stroke="#9a8868" stroke-width="0.5" opacity="0.6"/><polyline points="1186.2,387.4 1183.1,393.3 1183.5,396.1 1181.0,399.9 1177.7,402.1" fill="none" stroke="#5e6a40" stroke-width="0.5" opacity="0.6"/><polyline points="1352.9,485.2 1351.1,483.2 1347.1,481.6 1343.0,481.0" fill="none" stroke="#7d7550" stroke-width="0.6" opacity="0.6"/><polyline points="1194.6,518.0 1199.4,521.1 1201.5,526.0 1204.3,530.4" fill="none" stroke="#9a8868" stroke-width="0.6" opacity="0.6"/><polyline points="1564.2,634.3 1561.6,639.7 1558.1,642.3 1551.6,642.2" fill="none" stroke="#8a7a58" stroke-width="0.5" opacity="0.6"/><polyline points="1465.9,475.5 1467.0,471.8 1464.9,465.7 1467.7,459.8" fill="none" stroke="#6b6a48" stroke-width="0.4" opacity="0.6"/><polyline points="1243.4,696.6 1240.7,700.9 1238.2,704.4 1232.9,705.2 1227.1,704.3" fill="none" stroke="#9a8868" stroke-width="0.4" opacity="0.6"/><polyline points="1171.9,357.0 1172.5,359.7 1175.3,362.8 1178.9,363.5 1182.1,367.3 1186.6,372.5 1190.5,378.2" fill="none" stroke="#5e6a40" stroke-width="0.6" opacity="0.6"/><polyline points="1154.4,551.8 1153.6,545.1 1151.5,538.6 1152.8,533.8" fill="none" stroke="#9a8868" stroke-width="0.4" opacity="0.6"/><polyline points="1314.2,510.8 1312.7,514.7 1312.5,520.1 1312.0,523.9 1310.3,527.3 1311.4,530.7 1314.1,532.4" fill="none" stroke="#5e6a40" stroke-width="0.4" opacity="0.6"/><polyline points="1525.7,611.8 1527.2,614.3 1526.7,618.7 1526.2,625.5 1527.9,630.1 1525.8,635.5 1523.7,642.1 1520.0,645.7 1518.9,650.9" fill="none" stroke="#5e6a40" stroke-width="0.4" opacity="0.6"/><polyline points="1212.1,334.7 1208.9,334.9 1203.8,335.8 1198.2,335.5" fill="none" stroke="#8a7a58" stroke-width="0.6" opacity="0.6"/><polyline points="1359.9,711.1 1362.8,707.4 1365.3,704.4 1369.3,699.5 1371.0,694.6 1374.6,690.2 1375.4,686.6 1373.9,679.9 1372.7,674.6" fill="none" stroke="#7d7550" stroke-width="0.6" opacity="0.6"/><polyline points="1137.9,338.2 1139.4,340.4 1142.7,342.2 1146.8,347.4 1150.1,348.7 1152.1,352.9 1154.5,356.1" fill="none" stroke="#5e6a40" stroke-width="0.6" opacity="0.6"/><polyline points="1180.3,660.1 1184.2,656.5 1187.4,655.4 1190.8,653.8 1194.9,654.1 1201.5,656.1 1206.5,656.2" fill="none" stroke="#7d7550" stroke-width="0.5" opacity="0.6"/><polyline points="1415.5,545.1 1413.8,547.4 1410.5,550.7 1407.2,552.6 1404.4,552.9 1399.6,555.6" fill="none" stroke="#6b6a48" stroke-width="0.6" opacity="0.6"/><polyline points="1257.3,602.5 1258.2,599.2 1260.1,595.7 1263.8,594.1 1268.3,591.6 1273.8,592.4" fill="none" stroke="#8a7a58" stroke-width="0.5" opacity="0.6"/><polyline points="1359.7,709.0 1353.5,711.7 1350.0,711.0 1345.9,711.0 1341.7,712.0" fill="none" stroke="#5e6a40" stroke-width="0.4" opacity="0.6"/><polyline points="1454.0,460.6 1449.0,461.3 1444.3,465.0 1440.6,465.2 1437.3,468.8" fill="none" stroke="#9a8868" stroke-width="0.4" opacity="0.6"/><polyline points="1376.5,698.6 1371.7,697.4 1369.5,695.5 1363.7,695.3 1361.5,693.5 1359.5,691.0 1358.0,685.8" fill="none" stroke="#7d7550" stroke-width="0.6" opacity="0.6"/><polyline points="1219.6,618.6 1215.6,618.8 1211.4,615.1 1207.7,612.0 1204.9,607.0 1205.6,602.7 1209.0,598.4" fill="none" stroke="#6b6a48" stroke-width="0.5" opacity="0.6"/><polyline points="1496.9,667.7 1499.0,664.1 1498.3,661.2 1501.1,655.2 1501.2,652.0 1502.5,646.6 1502.4,642.3 1502.4,638.6 1505.1,634.9" fill="none" stroke="#6b6a48" stroke-width="0.5" opacity="0.6"/><polyline points="1412.9,622.8 1413.0,625.4 1413.4,631.5 1414.6,634.6" fill="none" stroke="#8a7a58" stroke-width="0.4" opacity="0.6"/><polyline points="1385.9,552.8 1383.2,554.7 1381.4,557.4 1378.1,559.5 1372.6,562.4 1369.4,564.2 1362.8,563.5 1357.9,564.2" fill="none" stroke="#6b6a48" stroke-width="0.5" opacity="0.6"/><polyline points="1509.9,473.0 1508.7,477.0 1507.2,481.6 1507.5,488.6 1506.7,492.1" fill="none" stroke="#6b6a48" stroke-width="0.5" opacity="0.6"/><polyline points="1529.2,493.1 1528.7,496.3 1530.2,499.9 1534.8,504.4 1538.5,508.3 1538.4,512.0 1538.1,515.2" fill="none" stroke="#7d7550" stroke-width="0.4" opacity="0.6"/><polyline points="1212.3,678.7 1215.9,679.6 1218.3,681.3 1222.2,683.9 1223.5,688.8" fill="none" stroke="#9a8868" stroke-width="0.5" opacity="0.6"/><polyline points="1128.6,388.7 1133.9,392.0 1138.8,392.5 1142.0,392.9 1145.1,395.3 1147.7,396.3 1152.3,396.5 1156.1,398.1 1158.4,400.0" fill="none" stroke="#5e6a40" stroke-width="0.6" opacity="0.6"/><polyline points="1328.7,698.8 1331.3,693.0 1334.4,689.6 1335.7,686.8 1340.4,682.7 1346.1,681.7 1348.9,683.2 1354.1,687.4 1357.3,693.4" fill="none" stroke="#5e6a40" stroke-width="0.6" opacity="0.6"/><polyline points="1421.3,416.1 1424.5,418.4 1428.9,419.6 1432.9,421.7 1435.7,422.6 1438.4,424.1 1441.0,426.3 1443.6,426.8 1449.1,427.7" fill="none" stroke="#6b6a48" stroke-width="0.4" opacity="0.6"/><polyline points="1134.6,707.0 1129.8,710.8 1126.6,710.8 1123.8,712.2" fill="none" stroke="#5e6a40" stroke-width="0.5" opacity="0.6"/><polyline points="1269.8,478.0 1273.6,479.1 1276.2,481.5 1276.5,486.4 1277.9,489.5 1281.0,492.7 1283.0,495.5" fill="none" stroke="#8a7a58" stroke-width="0.5" opacity="0.6"/><polyline points="1493.0,557.4 1492.6,562.3 1493.4,567.0 1497.3,571.2 1497.1,576.0 1494.8,581.8 1495.5,588.5 1495.1,591.9" fill="none" stroke="#6b6a48" stroke-width="0.4" opacity="0.6"/><polyline points="1230.6,543.4 1225.2,539.9 1218.9,538.6 1213.1,537.8 1208.3,539.2 1205.5,539.8" fill="none" stroke="#8a7a58" stroke-width="0.4" opacity="0.6"/><polyline points="1531.0,708.9 1530.0,702.2 1525.5,698.9 1520.1,696.6 1516.9,695.9 1511.2,693.8 1507.0,692.6 1502.0,688.2" fill="none" stroke="#7d7550" stroke-width="0.5" opacity="0.6"/><polyline points="1461.8,651.2 1467.3,648.6 1468.5,645.4 1469.4,642.4 1470.0,637.4 1468.1,633.0 1464.6,629.4 1459.9,626.7" fill="none" stroke="#6b6a48" stroke-width="0.6" opacity="0.6"/><polyline points="1423.3,371.6 1425.8,368.4 1432.2,366.7 1436.5,366.1 1442.2,362.9 1447.7,359.4 1453.7,357.8 1455.7,355.5" fill="none" stroke="#9a8868" stroke-width="0.5" opacity="0.6"/><polyline points="1357.3,486.0 1361.1,486.2 1365.5,487.2 1369.4,487.4 1375.1,490.5 1376.7,493.7" fill="none" stroke="#5e6a40" stroke-width="0.4" opacity="0.6"/><polyline points="1347.2,471.9 1353.5,469.9 1358.8,468.7 1364.5,471.6 1366.3,477.1 1365.1,481.1 1363.2,485.8 1364.2,491.1 1365.0,494.1" fill="none" stroke="#6b6a48" stroke-width="0.4" opacity="0.6"/><polyline points="1354.9,365.7 1357.4,365.7 1360.9,364.1 1363.0,362.2 1369.1,361.8 1373.1,360.8 1375.8,360.5 1380.1,355.5" fill="none" stroke="#8a7a58" stroke-width="0.5" opacity="0.6"/><polyline points="1345.3,685.7 1348.3,687.2 1351.2,692.0 1354.9,693.3 1359.0,698.5 1364.3,699.1 1368.8,701.3" fill="none" stroke="#9a8868" stroke-width="0.6" opacity="0.6"/><polyline points="1226.8,691.9 1230.9,687.8 1233.9,682.0 1239.0,679.3 1241.7,674.4 1245.8,672.8 1247.6,669.7 1248.8,664.1 1247.9,661.0" fill="none" stroke="#7d7550" stroke-width="0.6" opacity="0.6"/><polyline points="1420.4,628.6 1418.2,630.7 1413.1,635.3 1409.8,635.7 1407.2,637.3 1402.8,638.5 1398.9,643.9 1399.3,650.5 1403.2,653.9" fill="none" stroke="#9a8868" stroke-width="0.5" opacity="0.6"/><polyline points="1311.4,540.3 1314.4,542.5 1317.0,544.7 1318.6,551.4 1322.4,554.0" fill="none" stroke="#9a8868" stroke-width="0.5" opacity="0.6"/><polyline points="1121.2,668.8 1126.0,671.3 1131.3,672.6 1135.0,675.7" fill="none" stroke="#9a8868" stroke-width="0.6" opacity="0.6"/><polyline points="1429.3,521.2 1435.2,520.2 1438.4,517.1 1442.7,514.7 1446.3,510.2" fill="none" stroke="#7d7550" stroke-width="0.5" opacity="0.6"/><polyline points="1341.1,402.1 1337.7,401.6 1335.9,399.5 1331.4,395.0 1326.8,392.4 1322.1,388.5 1317.6,384.9" fill="none" stroke="#6b6a48" stroke-width="0.4" opacity="0.6"/><polyline points="1171.7,384.9 1170.9,381.5 1168.1,378.7 1164.2,378.5 1159.4,377.4 1154.3,378.1 1150.0,382.5 1149.1,386.1" fill="none" stroke="#7d7550" stroke-width="0.5" opacity="0.6"/><polyline points="1432.2,644.7 1431.9,640.1 1433.3,634.6 1435.8,632.9" fill="none" stroke="#9a8868" stroke-width="0.4" opacity="0.6"/><polyline points="1185.3,495.2 1182.1,492.3 1180.1,490.2 1177.1,486.7" fill="none" stroke="#6b6a48" stroke-width="0.4" opacity="0.6"/><polyline points="1427.3,599.4 1430.3,597.4 1433.5,595.6 1439.1,592.1 1442.0,589.2 1447.2,589.2 1450.4,586.2 1452.8,584.9" fill="none" stroke="#8a7a58" stroke-width="0.6" opacity="0.6"/><polyline points="1434.0,658.0 1430.3,656.0 1428.2,652.3 1428.0,648.8 1427.0,645.7" fill="none" stroke="#9a8868" stroke-width="0.4" opacity="0.6"/><polyline points="1337.0,473.3 1333.0,470.9 1330.6,468.6 1326.9,465.3 1324.7,463.8 1318.1,462.2" fill="none" stroke="#9a8868" stroke-width="0.4" opacity="0.6"/><polyline points="1354.5,609.2 1350.4,605.3 1346.5,603.7 1339.9,604.9 1334.4,607.2 1327.9,607.4 1325.1,610.3 1323.6,612.7" fill="none" stroke="#5e6a40" stroke-width="0.5" opacity="0.6"/><polyline points="1235.8,663.7 1233.6,660.9 1230.5,660.4 1227.9,659.6 1223.5,659.6 1220.4,659.3" fill="none" stroke="#9a8868" stroke-width="0.5" opacity="0.6"/><polyline points="1261.9,493.8 1257.1,494.9 1254.1,495.9 1250.2,497.1 1247.7,500.4" fill="none" stroke="#9a8868" stroke-width="0.4" opacity="0.6"/><polyline points="1183.4,651.6 1183.9,645.5 1186.8,642.9 1192.8,640.0 1196.2,635.6 1201.7,631.6 1205.2,631.4" fill="none" stroke="#8a7a58" stroke-width="0.4" opacity="0.6"/><polyline points="1481.4,361.7 1477.5,362.6 1473.9,363.5 1470.8,366.5 1468.6,368.9 1465.6,370.8 1464.2,374.6" fill="none" stroke="#5e6a40" stroke-width="0.4" opacity="0.6"/><polyline points="1336.2,416.3 1338.3,414.8 1341.3,411.9 1341.7,407.6 1338.9,403.7 1336.8,399.7" fill="none" stroke="#8a7a58" stroke-width="0.5" opacity="0.6"/><polyline points="1152.7,328.1 1150.7,331.2 1148.2,333.4 1144.5,337.1 1140.4,337.4 1133.6,336.9" fill="none" stroke="#6b6a48" stroke-width="0.6" opacity="0.6"/><polyline points="1141.6,530.1 1135.7,527.9 1133.3,524.5 1133.4,521.8" fill="none" stroke="#7d7550" stroke-width="0.6" opacity="0.6"/><polyline points="1349.2,436.8 1348.8,440.2 1350.4,445.5 1352.1,447.3" fill="none" stroke="#9a8868" stroke-width="0.5" opacity="0.6"/><polyline points="1121.6,531.7 1121.2,525.5 1124.2,520.8 1127.4,518.9 1128.4,516.5 1131.1,514.3 1133.2,511.9 1133.9,508.8" fill="none" stroke="#8a7a58" stroke-width="0.6" opacity="0.6"/><polyline points="1431.5,634.4 1432.0,640.2 1432.0,643.8 1433.6,647.4 1437.5,650.3 1440.3,650.4 1442.6,648.6" fill="none" stroke="#8a7a58" stroke-width="0.4" opacity="0.6"/><polyline points="1503.7,517.9 1498.4,514.4 1497.3,511.9 1493.9,508.5" fill="none" stroke="#5e6a40" stroke-width="0.5" opacity="0.6"/><polyline points="1443.6,414.2 1439.4,409.5 1434.7,407.6 1428.0,409.1 1424.9,409.1 1421.5,407.7" fill="none" stroke="#7d7550" stroke-width="0.4" opacity="0.6"/><polyline points="1210.8,561.2 1211.4,563.7 1212.1,570.4 1210.2,572.9 1206.7,575.4 1202.7,577.2 1196.1,575.2 1190.9,577.7 1189.6,580.0" fill="none" stroke="#8a7a58" stroke-width="0.5" opacity="0.6"/><polyline points="1450.5,709.5 1451.6,715.6 1450.3,718.6 1451.6,722.9 1450.0,728.1 1450.8,733.8" fill="none" stroke="#5e6a40" stroke-width="0.4" opacity="0.6"/><polyline points="1563.4,469.0 1559.3,464.1 1554.8,459.7 1550.6,454.7 1550.2,450.3 1546.2,445.1 1541.9,442.5 1537.7,441.7" fill="none" stroke="#8a7a58" stroke-width="0.4" opacity="0.6"/><polyline points="1156.6,394.0 1154.0,395.1 1150.3,394.2 1147.3,395.6 1141.0,398.8 1137.3,404.0 1134.8,407.6 1131.0,409.6" fill="none" stroke="#6b6a48" stroke-width="0.4" opacity="0.6"/><polyline points="1368.9,575.4 1365.2,574.4 1359.1,575.2 1352.4,575.3 1347.7,579.6 1342.8,579.7" fill="none" stroke="#6b6a48" stroke-width="0.5" opacity="0.6"/><polyline points="1282.2,613.9 1280.2,620.1 1281.7,623.9 1281.5,627.6 1283.9,633.9 1285.2,637.5 1286.9,642.7 1285.9,648.6" fill="none" stroke="#5e6a40" stroke-width="0.5" opacity="0.6"/><polyline points="1499.6,476.6 1500.5,471.6 1499.4,467.5 1496.9,462.6 1497.0,458.5 1498.0,454.5 1497.3,448.0 1496.1,445.3" fill="none" stroke="#8a7a58" stroke-width="0.4" opacity="0.6"/><polyline points="1455.2,398.1 1454.0,394.9 1452.2,392.3 1449.8,390.0 1445.5,390.0 1443.3,391.9 1437.0,391.9 1434.7,390.8" fill="none" stroke="#7d7550" stroke-width="0.5" opacity="0.6"/><polyline points="1150.1,548.5 1143.7,545.9 1139.4,546.2 1136.2,545.3 1130.7,545.9 1127.5,543.6" fill="none" stroke="#7d7550" stroke-width="0.5" opacity="0.6"/><polyline points="1357.3,318.0 1355.6,312.9 1351.9,309.1 1350.9,302.9 1351.1,298.1 1351.6,295.1 1355.1,290.8 1358.3,286.3 1360.3,282.6" fill="none" stroke="#7d7550" stroke-width="0.5" opacity="0.6"/><polyline points="1391.5,542.0 1387.0,541.3 1384.4,541.9 1382.0,545.0" fill="none" stroke="#9a8868" stroke-width="0.5" opacity="0.6"/><polyline points="1268.3,415.9 1265.5,409.5 1262.0,404.2 1255.5,401.5 1252.2,400.2" fill="none" stroke="#7d7550" stroke-width="0.4" opacity="0.6"/><polyline points="1480.5,517.6 1482.8,516.2 1486.2,512.8 1487.9,509.8" fill="none" stroke="#6b6a48" stroke-width="0.5" opacity="0.6"/><polyline points="1208.6,425.3 1204.3,424.1 1199.3,420.0 1194.5,420.0" fill="none" stroke="#6b6a48" stroke-width="0.6" opacity="0.6"/><polyline points="1559.7,340.2 1562.2,337.1 1568.9,335.7 1571.9,333.4 1575.6,329.7 1575.9,324.2" fill="none" stroke="#5e6a40" stroke-width="0.5" opacity="0.6"/><polyline points="1152.5,707.2 1156.1,712.9 1155.2,717.8 1151.7,720.2 1146.1,720.7 1140.1,717.7 1137.5,715.4 1131.7,713.9 1126.8,715.3" fill="none" stroke="#6b6a48" stroke-width="0.4" opacity="0.6"/><polyline points="1245.8,416.9 1244.6,420.1 1239.4,422.4 1235.3,422.5 1231.2,424.0 1227.9,428.2 1224.8,433.5 1223.0,437.7" fill="none" stroke="#9a8868" stroke-width="0.4" opacity="0.6"/><polyline points="1545.6,451.8 1544.7,449.0 1539.6,445.0 1539.1,442.2 1539.3,438.7" fill="none" stroke="#5e6a40" stroke-width="0.5" opacity="0.6"/><polyline points="1209.8,478.8 1213.2,481.6 1217.4,483.0 1219.3,486.4 1220.4,491.8 1222.8,495.4 1228.9,497.8 1233.3,497.7 1239.3,496.1" fill="none" stroke="#9a8868" stroke-width="0.4" opacity="0.6"/><polyline points="1366.8,353.6 1369.3,353.1 1372.3,348.9 1378.0,344.9" fill="none" stroke="#6b6a48" stroke-width="0.6" opacity="0.6"/><polyline points="1406.1,500.7 1403.1,504.3 1400.8,505.9 1399.6,508.1 1395.9,510.6 1393.3,514.9 1393.6,517.6" fill="none" stroke="#5e6a40" stroke-width="0.6" opacity="0.6"/><polyline points="1301.4,575.1 1304.0,578.4 1308.0,579.8 1310.2,581.7 1315.5,582.7 1320.9,584.9 1327.0,584.8 1332.7,586.9" fill="none" stroke="#6b6a48" stroke-width="0.5" opacity="0.6"/><polyline points="1331.8,320.3 1332.1,315.9 1333.2,309.1 1334.8,306.7" fill="none" stroke="#9a8868" stroke-width="0.6" opacity="0.6"/><polyline points="1176.3,540.0 1178.9,542.9 1181.9,544.9 1185.3,548.0" fill="none" stroke="#7d7550" stroke-width="0.6" opacity="0.6"/><polyline points="1324.2,536.1 1319.5,535.0 1314.8,536.6 1311.3,540.6" fill="none" stroke="#6b6a48" stroke-width="0.5" opacity="0.6"/><polyline points="1491.7,405.1 1495.2,400.6 1495.8,395.8 1494.0,393.4" fill="none" stroke="#8a7a58" stroke-width="0.6" opacity="0.6"/><polyline points="1410.7,651.4 1414.1,651.3 1419.6,651.4 1426.1,650.7 1431.9,647.0 1434.7,645.5 1441.1,647.4" fill="none" stroke="#6b6a48" stroke-width="0.5" opacity="0.6"/><polyline points="1402.8,420.4 1398.7,418.7 1394.9,417.1 1390.5,416.0 1384.9,418.7" fill="none" stroke="#6b6a48" stroke-width="0.4" opacity="0.6"/><polyline points="1358.6,531.9 1353.2,533.9 1351.4,537.6 1346.9,539.3 1341.4,541.2" fill="none" stroke="#8a7a58" stroke-width="0.5" opacity="0.6"/><polyline points="1388.2,355.8 1389.6,351.9 1391.6,348.2 1392.5,343.0 1393.8,339.3 1395.3,334.8" fill="none" stroke="#8a7a58" stroke-width="0.4" opacity="0.6"/><polyline points="1506.8,398.9 1503.9,395.9 1498.9,395.2 1495.1,397.3 1493.0,400.2 1493.4,403.4 1495.7,406.3" fill="none" stroke="#8a7a58" stroke-width="0.4" opacity="0.6"/><polyline points="1571.9,509.2 1566.3,512.8 1563.8,513.7 1558.3,511.7" fill="none" stroke="#9a8868" stroke-width="0.6" opacity="0.6"/><polyline points="1122.5,607.3 1116.2,609.3 1113.0,608.7 1108.0,611.2 1105.1,616.3 1100.6,620.5 1096.3,625.4 1090.7,628.3 1086.8,627.3" fill="none" stroke="#9a8868" stroke-width="0.6" opacity="0.6"/><polyline points="1171.2,361.1 1168.2,367.0 1168.1,371.4 1167.7,377.7 1171.0,383.2 1172.4,385.4 1175.1,388.7 1177.7,394.8 1180.0,399.9" fill="none" stroke="#5e6a40" stroke-width="0.6" opacity="0.6"/><polyline points="1471.9,355.9 1473.4,352.2 1471.1,346.5 1470.4,342.3 1472.3,337.1" fill="none" stroke="#5e6a40" stroke-width="0.6" opacity="0.6"/><polyline points="1386.1,498.0 1386.8,491.1 1385.8,485.6 1383.7,482.5 1382.5,477.6" fill="none" stroke="#8a7a58" stroke-width="0.4" opacity="0.6"/><polyline points="1482.8,415.4 1483.6,420.6 1484.0,427.5 1481.4,431.3 1479.5,434.2" fill="none" stroke="#9a8868" stroke-width="0.4" opacity="0.6"/><polyline points="1427.1,513.2 1429.6,515.3 1433.2,518.3 1438.8,522.2 1442.4,523.7 1445.6,523.6 1450.3,527.9 1452.0,531.6 1454.8,533.5" fill="none" stroke="#7d7550" stroke-width="0.5" opacity="0.6"/><polyline points="1431.6,458.9 1436.7,459.8 1442.0,464.3 1446.1,464.7 1451.9,461.9 1455.7,461.3 1459.3,461.0 1461.3,459.2 1467.8,457.4" fill="none" stroke="#7d7550" stroke-width="0.5" opacity="0.6"/><polyline points="1192.4,656.1 1192.4,650.0 1189.3,645.0 1188.2,640.0 1188.2,636.1 1187.6,630.1 1188.2,625.2 1188.8,619.6" fill="none" stroke="#8a7a58" stroke-width="0.6" opacity="0.6"/><polyline points="1217.7,568.7 1218.1,572.3 1216.4,574.7 1211.1,576.1 1207.3,581.4 1207.3,586.5 1211.4,592.1 1216.5,596.0 1222.0,595.7" fill="none" stroke="#6b6a48" stroke-width="0.4" opacity="0.6"/><polyline points="1133.4,541.2 1138.9,545.4 1140.1,550.2 1142.1,555.4 1146.8,558.4 1151.8,562.8 1152.4,565.7 1154.9,568.0 1156.1,570.4" fill="none" stroke="#9a8868" stroke-width="0.4" opacity="0.6"/><polyline points="1181.0,433.5 1180.4,436.6 1178.9,442.9 1180.3,447.1 1179.4,452.2 1175.3,457.9 1170.9,462.7 1169.5,465.6 1167.0,467.7" fill="none" stroke="#6b6a48" stroke-width="0.4" opacity="0.6"/><polyline points="1170.5,659.9 1173.4,658.6 1176.6,654.5 1182.2,652.4" fill="none" stroke="#6b6a48" stroke-width="0.4" opacity="0.6"/><polyline points="1287.8,695.4 1286.4,699.5 1286.2,703.5 1290.1,708.0 1294.7,710.3 1298.2,712.3 1301.4,715.6" fill="none" stroke="#7d7550" stroke-width="0.5" opacity="0.6"/><polyline points="1199.4,373.7 1202.2,379.7 1206.6,383.0 1210.2,386.8 1213.2,390.9 1217.0,391.6 1221.2,389.2" fill="none" stroke="#7d7550" stroke-width="0.6" opacity="0.6"/><polyline points="1135.6,412.7 1137.5,415.7 1141.2,418.0 1142.2,422.0 1145.2,427.9 1143.8,432.0 1145.4,437.8 1144.7,441.8 1142.1,445.1" fill="none" stroke="#8a7a58" stroke-width="0.6" opacity="0.6"/><polyline points="1388.2,609.1 1386.5,611.1 1382.1,611.8 1379.9,613.6" fill="none" stroke="#7d7550" stroke-width="0.5" opacity="0.6"/><polyline points="1554.1,684.7 1554.1,690.4 1551.9,693.0 1551.2,698.5 1547.3,702.7" fill="none" stroke="#5e6a40" stroke-width="0.5" opacity="0.6"/><polyline points="1288.3,361.8 1283.7,365.3 1280.9,366.4 1276.8,369.6" fill="none" stroke="#8a7a58" stroke-width="0.6" opacity="0.6"/><polyline points="1355.9,638.8 1353.8,640.8 1351.5,642.0 1344.7,640.8 1341.2,636.6 1334.8,634.1 1332.3,632.4 1326.8,629.0" fill="none" stroke="#9a8868" stroke-width="0.5" opacity="0.6"/><polyline points="1278.3,710.9 1272.6,714.6 1270.1,714.1 1266.6,711.6" fill="none" stroke="#6b6a48" stroke-width="0.5" opacity="0.6"/><polyline points="1193.6,382.9 1195.2,380.8 1198.6,374.9 1200.4,372.8 1200.2,368.7" fill="none" stroke="#7d7550" stroke-width="0.5" opacity="0.6"/><polyline points="1559.3,448.0 1561.1,443.7 1563.3,440.5 1565.7,434.4 1567.8,430.6 1570.3,426.7 1572.2,420.4 1571.3,413.8" fill="none" stroke="#7d7550" stroke-width="0.5" opacity="0.6"/><polyline points="1350.0,705.9 1346.9,708.2 1343.2,710.4 1339.2,711.3 1333.9,711.3" fill="none" stroke="#6b6a48" stroke-width="0.5" opacity="0.6"/><polyline points="1336.7,358.6 1337.9,353.1 1339.8,349.3 1342.7,343.7 1344.2,341.4 1345.7,336.2 1344.4,333.3 1339.9,331.4" fill="none" stroke="#6b6a48" stroke-width="0.4" opacity="0.6"/><polyline points="1246.7,334.1 1244.7,331.1 1245.0,326.3 1244.8,321.3 1247.7,317.6 1250.0,314.6 1254.4,312.8" fill="none" stroke="#8a7a58" stroke-width="0.4" opacity="0.6"/><polyline points="1412.3,588.5 1406.2,585.7 1401.7,581.7 1398.7,576.3 1398.6,573.0 1400.3,569.6" fill="none" stroke="#7d7550" stroke-width="0.4" opacity="0.6"/><polyline points="1535.6,323.1 1530.2,323.0 1526.1,321.7 1522.7,316.2 1523.4,313.1 1522.7,309.4" fill="none" stroke="#5e6a40" stroke-width="0.5" opacity="0.6"/><polyline points="1234.9,556.9 1239.2,553.8 1241.0,548.3 1238.7,542.3 1239.0,536.3 1242.1,532.3" fill="none" stroke="#5e6a40" stroke-width="0.6" opacity="0.6"/><polyline points="1537.8,403.5 1535.1,401.8 1533.3,398.8 1531.6,393.1" fill="none" stroke="#7d7550" stroke-width="0.6" opacity="0.6"/><polyline points="1314.9,499.8 1314.2,494.2 1316.3,490.9 1322.6,488.8" fill="none" stroke="#8a7a58" stroke-width="0.6" opacity="0.6"/><polyline points="1550.3,560.5 1553.6,558.7 1557.8,556.6 1560.0,550.6" fill="none" stroke="#9a8868" stroke-width="0.4" opacity="0.6"/><polyline points="1333.8,610.3 1331.2,613.5 1328.8,617.1 1326.6,623.6 1326.6,629.9" fill="none" stroke="#9a8868" stroke-width="0.5" opacity="0.6"/><polyline points="1217.4,680.2 1215.8,676.0 1215.5,670.1 1215.6,664.7" fill="none" stroke="#9a8868" stroke-width="0.5" opacity="0.6"/><polyline points="1385.0,481.0 1390.4,478.6 1391.8,475.7 1393.6,472.5" fill="none" stroke="#9a8868" stroke-width="0.6" opacity="0.6"/><polyline points="1542.6,420.7 1545.2,417.0 1546.7,414.4 1549.8,408.4" fill="none" stroke="#6b6a48" stroke-width="0.6" opacity="0.6"/><polyline points="1152.1,421.2 1153.8,414.4 1155.2,408.6 1154.1,402.5 1150.6,397.2 1148.6,395.1 1146.5,392.1" fill="none" stroke="#9a8868" stroke-width="0.5" opacity="0.6"/><polyline points="1302.0,466.5 1301.7,463.5 1305.4,458.4 1308.4,454.2 1310.5,447.6 1309.4,443.9 1305.1,439.2 1302.2,435.9 1297.1,431.9" fill="none" stroke="#8a7a58" stroke-width="0.4" opacity="0.6"/><polyline points="1477.7,595.8 1474.3,596.0 1470.9,596.6 1467.0,601.8 1464.9,603.7 1459.9,605.6" fill="none" stroke="#9a8868" stroke-width="0.5" opacity="0.6"/><polyline points="1418.0,583.8 1415.7,582.1 1412.3,581.4 1407.4,579.5 1405.7,575.3 1402.7,572.8 1400.9,570.6" fill="none" stroke="#9a8868" stroke-width="0.6" opacity="0.6"/><polyline points="1274.4,597.2 1278.8,596.6 1281.8,593.6 1285.5,592.8 1290.6,595.6 1295.0,597.5 1298.3,596.4" fill="none" stroke="#5e6a40" stroke-width="0.4" opacity="0.6"/><polyline points="1386.8,597.4 1386.2,592.8 1383.3,588.0 1381.3,585.5 1375.5,584.8 1369.5,583.2 1367.0,582.5 1363.9,579.9 1363.3,576.0" fill="none" stroke="#5e6a40" stroke-width="0.6" opacity="0.6"/><polyline points="1340.3,674.7 1344.0,671.0 1347.3,667.4 1352.3,667.1 1355.5,669.6 1356.8,672.1 1360.9,676.0 1363.9,681.5 1366.2,684.4" fill="none" stroke="#8a7a58" stroke-width="0.6" opacity="0.6"/><polyline points="1362.9,323.6 1359.3,328.5 1354.7,332.7 1351.8,334.6 1350.2,340.9 1349.0,343.3 1349.0,345.9 1352.5,349.7 1354.2,353.1" fill="none" stroke="#8a7a58" stroke-width="0.4" opacity="0.6"/><polyline points="1402.4,458.2 1397.6,461.2 1396.0,467.7 1393.5,470.5 1390.8,473.6" fill="none" stroke="#9a8868" stroke-width="0.4" opacity="0.6"/><polyline points="1392.1,441.2 1390.9,434.8 1388.7,432.3 1385.6,427.2 1382.7,422.9 1378.2,418.9" fill="none" stroke="#8a7a58" stroke-width="0.4" opacity="0.6"/><polyline points="1336.6,337.5 1332.5,341.4 1331.9,347.7 1331.0,352.8 1332.3,355.2 1336.8,360.4 1340.1,365.8 1343.0,366.7 1348.0,364.3" fill="none" stroke="#7d7550" stroke-width="0.6" opacity="0.6"/><polyline points="1243.2,579.5 1238.0,576.5 1235.4,576.4 1233.0,577.2 1229.4,575.9 1225.7,577.6" fill="none" stroke="#5e6a40" stroke-width="0.6" opacity="0.6"/><polyline points="1197.9,382.9 1200.6,386.8 1205.7,390.9 1208.2,395.5" fill="none" stroke="#5e6a40" stroke-width="0.6" opacity="0.6"/><polyline points="1444.5,411.2 1446.4,407.0 1448.6,402.6 1453.9,398.7 1455.1,396.4 1455.5,393.8" fill="none" stroke="#6b6a48" stroke-width="0.6" opacity="0.6"/><polyline points="1326.2,521.7 1321.4,524.6 1316.9,525.2 1312.2,526.8 1305.5,524.8 1301.9,519.6 1298.5,518.6 1295.9,514.4" fill="none" stroke="#9a8868" stroke-width="0.6" opacity="0.6"/><polyline points="1260.0,657.1 1257.1,656.6 1252.6,652.5 1249.8,647.3" fill="none" stroke="#5e6a40" stroke-width="0.6" opacity="0.6"/><polyline points="1567.3,670.6 1563.5,667.2 1559.0,666.3 1555.3,662.2 1551.1,660.5 1547.5,658.8 1543.0,655.8 1539.6,656.5" fill="none" stroke="#7d7550" stroke-width="0.6" opacity="0.6"/><polyline points="1152.9,617.2 1149.2,623.1 1149.0,626.4 1147.2,629.4 1147.3,633.5 1145.3,638.8 1141.3,642.5 1135.3,644.8" fill="none" stroke="#8a7a58" stroke-width="0.5" opacity="0.6"/><polyline points="1527.4,609.3 1523.5,614.8 1524.0,619.8 1525.8,625.7" fill="none" stroke="#8a7a58" stroke-width="0.5" opacity="0.6"/><polyline points="1443.2,387.7 1439.8,389.4 1434.4,388.2 1431.4,389.7" fill="none" stroke="#7d7550" stroke-width="0.5" opacity="0.6"/><polyline points="1251.0,650.2 1250.8,644.8 1249.5,639.3 1248.9,636.6 1247.8,632.5 1247.3,629.8 1241.6,625.8 1237.9,624.2 1232.8,625.0" fill="none" stroke="#9a8868" stroke-width="0.4" opacity="0.6"/><polyline points="1212.2,318.5 1210.5,315.3 1205.8,312.1 1199.4,312.6 1197.1,315.0 1193.1,319.9 1188.5,323.6 1183.0,325.1 1179.5,330.2" fill="none" stroke="#7d7550" stroke-width="0.5" opacity="0.6"/><polyline points="1193.4,328.9 1196.3,328.9 1200.9,324.7 1206.5,321.1 1207.2,318.2 1207.0,314.8 1204.7,312.2 1203.2,309.3 1199.1,306.7" fill="none" stroke="#5e6a40" stroke-width="0.5" opacity="0.6"/><polyline points="1187.6,540.1 1184.8,542.7 1182.1,542.6 1176.3,539.3 1170.8,536.9 1168.6,533.8 1164.2,530.5" fill="none" stroke="#7d7550" stroke-width="0.5" opacity="0.6"/><polyline points="1481.6,664.8 1484.3,665.3 1488.0,664.6 1493.9,666.0" fill="none" stroke="#7d7550" stroke-width="0.6" opacity="0.6"/><polyline points="1297.8,653.5 1298.4,650.5 1298.7,644.9 1299.7,639.5" fill="none" stroke="#9a8868" stroke-width="0.6" opacity="0.6"/><polyline points="1522.0,424.4 1521.0,431.1 1522.7,435.1 1523.7,438.0 1523.4,440.8 1522.1,444.3 1521.8,449.5" fill="none" stroke="#7d7550" stroke-width="0.5" opacity="0.6"/><polyline points="1322.3,655.2 1326.3,652.5 1330.8,650.5 1333.7,647.5 1338.4,644.1 1340.2,638.8" fill="none" stroke="#8a7a58" stroke-width="0.6" opacity="0.6"/><polyline points="1244.4,708.6 1239.6,704.0 1238.5,700.9 1236.7,696.6" fill="none" stroke="#5e6a40" stroke-width="0.5" opacity="0.6"/><polyline points="1263.6,472.2 1259.9,475.5 1254.2,478.9 1247.7,480.8 1244.4,484.8 1240.8,487.3 1235.8,487.5 1231.1,490.3 1227.1,494.0" fill="none" stroke="#8a7a58" stroke-width="0.4" opacity="0.6"/><polyline points="1541.9,369.4 1541.0,364.5 1542.7,360.6 1541.5,355.4 1538.5,353.4 1535.4,353.9" fill="none" stroke="#6b6a48" stroke-width="0.4" opacity="0.6"/><polyline points="1360.3,365.0 1359.2,360.9 1359.2,356.8 1358.4,351.4 1357.0,349.1 1355.2,345.6" fill="none" stroke="#5e6a40" stroke-width="0.5" opacity="0.6"/><polyline points="1406.0,500.4 1409.8,503.2 1410.7,506.3 1413.7,510.2 1416.9,512.8 1423.7,513.1 1426.3,514.2" fill="none" stroke="#9a8868" stroke-width="0.6" opacity="0.6"/><polyline points="1309.9,425.2 1314.0,424.1 1317.9,422.8 1320.3,424.1 1323.0,425.0 1325.6,426.9 1330.0,427.1 1335.8,428.4 1339.6,428.9" fill="none" stroke="#8a7a58" stroke-width="0.5" opacity="0.6"/><polyline points="1521.5,398.9 1524.6,399.0 1530.2,395.7 1533.0,395.3 1536.4,395.8" fill="none" stroke="#5e6a40" stroke-width="0.4" opacity="0.6"/><polyline points="1393.5,334.3 1397.9,333.9 1401.5,330.5 1405.5,330.5 1412.0,329.4 1418.1,331.1" fill="none" stroke="#9a8868" stroke-width="0.4" opacity="0.6"/><polyline points="1332.6,433.9 1339.4,433.3 1342.5,432.6 1345.7,431.7 1348.1,428.0" fill="none" stroke="#6b6a48" stroke-width="0.6" opacity="0.6"/><polyline points="1227.8,650.0 1225.0,647.7 1222.2,645.0 1216.5,643.7 1213.3,641.3 1208.4,638.5 1205.4,635.0 1202.6,634.2" fill="none" stroke="#7d7550" stroke-width="0.4" opacity="0.6"/><polyline points="1493.5,511.5 1490.9,510.4 1485.7,510.4 1483.0,511.6 1478.6,513.6 1472.8,511.4" fill="none" stroke="#5e6a40" stroke-width="0.5" opacity="0.6"/><polyline points="1226.8,703.8 1228.3,700.5 1230.0,695.8 1229.9,690.2 1227.8,687.0 1227.1,684.4" fill="none" stroke="#5e6a40" stroke-width="0.5" opacity="0.6"/><polyline points="1377.1,699.8 1378.9,704.9 1378.9,711.8 1378.8,717.1 1378.2,723.1 1378.0,726.0" fill="none" stroke="#6b6a48" stroke-width="0.5" opacity="0.6"/><polyline points="1436.2,689.1 1439.0,686.4 1441.4,683.9 1446.0,680.1 1448.0,678.5 1449.9,676.4 1454.5,674.3" fill="none" stroke="#7d7550" stroke-width="0.5" opacity="0.6"/><polyline points="1331.3,508.2 1330.0,512.1 1326.4,514.1 1320.1,513.0 1317.2,512.2 1315.1,510.1 1313.2,507.9 1309.0,507.0" fill="none" stroke="#7d7550" stroke-width="0.5" opacity="0.6"/><polyline points="1568.4,544.0 1573.6,542.8 1579.4,541.1 1582.6,541.1" fill="none" stroke="#9a8868" stroke-width="0.5" opacity="0.6"/><polyline points="1484.2,610.5 1489.4,607.3 1492.3,607.3 1494.6,605.7 1497.4,599.5 1498.0,595.1 1498.4,590.1 1496.7,584.3" fill="none" stroke="#8a7a58" stroke-width="0.4" opacity="0.6"/><polyline points="1502.2,633.8 1508.7,632.6 1511.9,630.1 1517.0,627.9 1520.3,627.9 1525.5,626.4 1528.0,625.4 1530.1,621.3" fill="none" stroke="#9a8868" stroke-width="0.4" opacity="0.6"/><polyline points="1389.6,539.7 1383.6,543.3 1379.4,543.4 1374.2,546.7 1370.9,546.0 1365.9,542.4 1365.0,539.1" fill="none" stroke="#6b6a48" stroke-width="0.5" opacity="0.6"/><polyline points="1194.4,406.0 1196.8,404.1 1199.0,401.3 1203.5,397.7" fill="none" stroke="#8a7a58" stroke-width="0.5" opacity="0.6"/><polyline points="1554.0,324.9 1555.2,318.2 1560.0,313.3 1562.8,311.8 1567.4,309.7 1572.2,310.9 1575.7,315.2" fill="none" stroke="#7d7550" stroke-width="0.5" opacity="0.6"/><polyline points="1133.6,440.1 1131.1,441.1 1125.8,441.4 1122.7,442.5 1118.9,445.0 1115.6,445.5" fill="none" stroke="#6b6a48" stroke-width="0.4" opacity="0.6"/><polyline points="1205.4,439.5 1207.1,437.4 1208.8,435.1 1208.8,428.2 1210.6,426.1 1212.1,422.3 1213.3,419.7 1216.7,417.5 1220.1,417.8" fill="none" stroke="#5e6a40" stroke-width="0.5" opacity="0.6"/><polyline points="1528.5,344.0 1522.0,343.6 1518.2,340.6 1514.4,340.9 1510.4,342.5 1505.4,340.9" fill="none" stroke="#5e6a40" stroke-width="0.4" opacity="0.6"/><polyline points="1306.2,474.7 1303.4,474.2 1299.7,476.4 1295.8,478.4 1292.3,479.7 1290.0,484.7 1289.2,489.4" fill="none" stroke="#5e6a40" stroke-width="0.4" opacity="0.6"/><polyline points="1242.0,334.6 1242.9,338.1 1241.8,343.1 1240.3,345.3 1241.2,350.1 1244.1,353.4" fill="none" stroke="#5e6a40" stroke-width="0.6" opacity="0.6"/><polyline points="1415.4,352.6 1410.8,356.6 1404.4,357.7 1399.0,356.7 1394.1,356.1 1389.4,354.9" fill="none" stroke="#6b6a48" stroke-width="0.6" opacity="0.6"/><polyline points="1362.7,536.4 1365.8,533.5 1369.1,533.4 1372.2,533.7 1376.4,535.8 1378.9,538.8 1379.2,541.3 1382.1,546.3" fill="none" stroke="#8a7a58" stroke-width="0.4" opacity="0.6"/><polyline points="1305.0,497.7 1309.8,499.0 1313.9,496.8 1316.0,494.7 1322.7,493.9 1326.0,490.8 1328.5,485.9 1327.9,482.0" fill="none" stroke="#5e6a40" stroke-width="0.6" opacity="0.6"/><polyline points="1333.7,487.2 1331.9,480.9 1332.8,477.5 1332.0,472.9" fill="none" stroke="#5e6a40" stroke-width="0.6" opacity="0.6"/><polyline points="1438.0,575.3 1439.3,577.8 1444.1,581.2 1445.1,583.7 1447.8,586.1 1450.2,592.2 1452.2,594.3 1452.2,601.2 1450.7,605.6" fill="none" stroke="#8a7a58" stroke-width="0.6" opacity="0.6"/><polyline points="1464.9,694.4 1459.9,692.5 1453.2,693.9 1450.4,696.0 1443.7,695.6 1439.1,691.3 1437.5,685.3 1437.0,682.5 1438.4,676.4" fill="none" stroke="#6b6a48" stroke-width="0.4" opacity="0.6"/><polyline points="1297.7,517.7 1301.9,512.1 1304.8,507.4 1308.9,503.6" fill="none" stroke="#8a7a58" stroke-width="0.4" opacity="0.6"/><polyline points="1409.1,341.0 1413.2,339.8 1416.1,341.1 1422.0,343.1 1424.5,345.1 1425.2,351.7 1424.0,354.5 1418.2,356.9 1415.2,357.7" fill="none" stroke="#6b6a48" stroke-width="0.6" opacity="0.6"/><polyline points="1512.2,556.3 1510.4,554.0 1508.8,550.3 1511.1,544.4 1512.3,541.9 1514.1,537.6 1512.2,531.3 1513.2,526.8" fill="none" stroke="#6b6a48" stroke-width="0.6" opacity="0.6"/><polyline points="1397.7,568.1 1399.0,565.7 1401.6,562.7 1404.7,559.2 1405.3,556.6 1406.6,553.4 1411.2,550.6 1416.0,549.6" fill="none" stroke="#8a7a58" stroke-width="0.4" opacity="0.6"/><polyline points="1568.5,471.2 1565.0,474.9 1559.7,477.3 1557.4,481.5 1556.7,484.1 1554.3,489.1 1552.2,492.3 1550.7,497.0 1549.8,502.5" fill="none" stroke="#8a7a58" stroke-width="0.5" opacity="0.6"/><polyline points="1506.4,557.4 1502.9,555.2 1496.8,554.0 1492.3,550.7 1487.7,546.2 1486.7,543.6" fill="none" stroke="#7d7550" stroke-width="0.4" opacity="0.6"/><polyline points="1458.0,648.3 1462.2,645.4 1466.9,643.2 1470.6,637.5 1472.7,634.4 1476.8,633.4 1480.2,629.1 1481.2,625.8" fill="none" stroke="#8a7a58" stroke-width="0.5" opacity="0.6"/><polyline points="1394.4,441.3 1396.0,435.0 1398.9,432.8 1401.8,432.4 1404.6,432.4 1410.0,428.4 1411.9,422.9 1412.8,420.6" fill="none" stroke="#7d7550" stroke-width="0.4" opacity="0.6"/><polyline points="1502.0,620.3 1501.5,615.8 1499.0,611.0 1494.6,609.6 1492.8,606.1 1489.1,603.7 1485.3,598.7" fill="none" stroke="#7d7550" stroke-width="0.5" opacity="0.6"/><polyline points="1353.0,646.2 1357.0,645.3 1361.0,646.1 1363.4,645.3 1368.7,647.9 1370.5,652.7 1373.4,654.3 1378.5,653.2 1385.3,653.1" fill="none" stroke="#8a7a58" stroke-width="0.5" opacity="0.6"/><polyline points="1225.4,402.0 1230.2,403.9 1235.0,405.1 1237.6,408.0" fill="none" stroke="#7d7550" stroke-width="0.6" opacity="0.6"/><polyline points="1314.6,498.4 1312.0,499.3 1308.4,499.2 1302.5,497.3 1299.7,495.0 1292.9,494.2 1288.2,489.4 1286.4,487.4" fill="none" stroke="#8a7a58" stroke-width="0.4" opacity="0.6"/><polyline points="1150.3,431.5 1154.5,436.4 1161.2,437.2 1167.3,435.4 1170.3,432.7 1171.9,430.0" fill="none" stroke="#6b6a48" stroke-width="0.6" opacity="0.6"/><polyline points="1238.6,641.4 1236.9,644.6 1234.7,648.2 1234.1,652.7 1236.1,656.9 1235.1,659.8 1232.4,662.0" fill="none" stroke="#6b6a48" stroke-width="0.6" opacity="0.6"/><polyline points="1433.6,479.8 1438.6,477.7 1443.7,475.2 1447.1,476.2" fill="none" stroke="#6b6a48" stroke-width="0.6" opacity="0.6"/><polyline points="1323.7,537.4 1326.1,535.7 1331.2,534.9 1334.2,534.4 1337.3,534.5" fill="none" stroke="#7d7550" stroke-width="0.4" opacity="0.6"/><polyline points="1388.4,570.1 1387.4,566.4 1383.9,563.2 1377.5,563.3 1371.6,561.7 1365.2,560.0 1360.8,555.6 1359.8,552.2" fill="none" stroke="#8a7a58" stroke-width="0.4" opacity="0.6"/><polyline points="1145.4,618.2 1141.6,620.4 1134.7,619.8 1129.0,616.7 1127.6,613.3" fill="none" stroke="#9a8868" stroke-width="0.6" opacity="0.6"/><polyline points="1148.7,583.3 1153.7,582.8 1157.9,582.5 1162.2,586.5 1164.9,588.7 1169.1,588.9 1175.1,589.2 1177.3,591.3" fill="none" stroke="#9a8868" stroke-width="0.5" opacity="0.6"/><polyline points="1492.1,584.5 1490.1,582.5 1487.6,580.6 1485.6,575.8 1486.6,570.9" fill="none" stroke="#7d7550" stroke-width="0.5" opacity="0.6"/><polyline points="1534.2,558.8 1536.9,558.4 1540.5,555.8 1547.2,555.4 1550.9,555.6 1554.9,552.6 1559.6,547.8 1560.6,544.6" fill="none" stroke="#6b6a48" stroke-width="0.5" opacity="0.6"/><polyline points="1133.0,635.4 1136.4,633.1 1138.6,630.7 1140.4,624.0 1142.2,618.5" fill="none" stroke="#9a8868" stroke-width="0.5" opacity="0.6"/><polyline points="1238.7,392.5 1236.3,388.2 1232.0,385.6 1226.1,387.0 1222.8,391.7 1218.4,394.3 1216.7,396.6 1215.9,402.1 1212.7,405.3" fill="none" stroke="#7d7550" stroke-width="0.5" opacity="0.6"/><polyline points="1520.1,314.4 1520.1,309.2 1523.5,305.1 1526.4,302.5 1529.4,298.4 1530.6,293.1 1534.8,289.2 1535.7,286.7 1536.4,282.3" fill="none" stroke="#9a8868" stroke-width="0.5" opacity="0.6"/><polyline points="1354.1,555.1 1348.2,556.3 1344.4,556.4 1340.5,556.1 1334.7,559.6 1333.7,563.7 1329.9,566.5 1324.7,565.9 1319.6,563.7" fill="none" stroke="#7d7550" stroke-width="0.4" opacity="0.6"/><polyline points="1207.4,345.7 1202.1,344.2 1197.7,340.1 1195.3,338.0 1191.6,334.8" fill="none" stroke="#9a8868" stroke-width="0.4" opacity="0.6"/><polyline points="1244.8,353.9 1249.7,352.7 1253.4,353.4 1257.8,353.4 1263.2,355.4 1269.9,354.4" fill="none" stroke="#9a8868" stroke-width="0.5" opacity="0.6"/><polyline points="1354.4,448.8 1356.9,449.6 1362.0,452.2 1366.8,455.9 1371.7,458.9 1375.8,462.4 1379.6,466.4" fill="none" stroke="#9a8868" stroke-width="0.5" opacity="0.6"/><polyline points="1160.9,582.6 1159.1,577.2 1159.4,572.9 1160.3,569.2 1158.8,566.4 1158.8,563.1 1159.2,559.6" fill="none" stroke="#8a7a58" stroke-width="0.4" opacity="0.6"/><polyline points="1414.4,494.0 1411.8,490.3 1410.0,486.0 1406.8,483.6 1401.3,480.2" fill="none" stroke="#6b6a48" stroke-width="0.6" opacity="0.6"/><polyline points="1363.7,501.6 1360.2,499.8 1358.4,494.9 1355.1,491.2 1354.8,488.5 1355.3,483.8 1354.5,480.7 1351.8,477.2" fill="none" stroke="#5e6a40" stroke-width="0.5" opacity="0.6"/><polyline points="1391.8,421.6 1388.0,416.1 1383.3,413.8 1379.1,409.9 1375.2,407.7 1373.9,403.2 1376.5,398.6" fill="none" stroke="#9a8868" stroke-width="0.5" opacity="0.6"/><polyline points="1293.0,711.4 1288.8,713.9 1284.3,716.2 1278.7,714.7 1272.3,717.5 1271.2,720.0 1268.3,722.3" fill="none" stroke="#6b6a48" stroke-width="0.4" opacity="0.6"/><polyline points="1538.8,355.9 1534.0,358.7 1530.4,361.7 1525.3,362.6 1521.7,362.0" fill="none" stroke="#6b6a48" stroke-width="0.4" opacity="0.6"/><polyline points="1424.3,409.5 1420.4,411.4 1417.4,413.3 1414.8,418.6 1413.3,421.8 1414.7,426.8 1418.0,429.1" fill="none" stroke="#5e6a40" stroke-width="0.6" opacity="0.6"/><polyline points="1166.0,318.4 1173.0,318.1 1179.7,316.1 1184.1,314.4 1186.0,312.1 1188.3,310.3" fill="none" stroke="#6b6a48" stroke-width="0.4" opacity="0.6"/><polyline points="1158.0,529.9 1157.4,535.0 1158.0,539.6 1155.9,544.1 1155.9,549.8 1158.5,555.0" fill="none" stroke="#5e6a40" stroke-width="0.6" opacity="0.6"/><polyline points="1232.2,624.5 1235.7,624.4 1239.3,625.1 1242.7,622.7 1248.5,623.1" fill="none" stroke="#5e6a40" stroke-width="0.5" opacity="0.6"/><polyline points="1467.4,509.9 1463.2,514.1 1461.1,517.9 1462.2,524.1" fill="none" stroke="#5e6a40" stroke-width="0.4" opacity="0.6"/><polyline points="1469.3,316.7 1465.1,314.9 1459.6,311.5 1455.7,312.4 1450.1,313.5 1445.3,314.2 1439.9,316.1 1435.0,317.9" fill="none" stroke="#8a7a58" stroke-width="0.5" opacity="0.6"/><polyline points="1548.5,505.0 1548.8,498.5 1548.0,492.2 1548.9,489.2 1550.3,485.6" fill="none" stroke="#6b6a48" stroke-width="0.6" opacity="0.6"/><polyline points="1344.1,382.0 1340.8,383.3 1334.9,383.0 1330.4,384.7 1325.2,384.2 1321.9,383.7 1319.0,385.4" fill="none" stroke="#9a8868" stroke-width="0.6" opacity="0.6"/><polyline points="1343.6,480.1 1341.6,476.2 1341.9,471.3 1346.2,465.9 1351.7,463.7 1356.7,463.3 1359.3,462.0 1362.9,461.2" fill="none" stroke="#9a8868" stroke-width="0.4" opacity="0.6"/><polyline points="1368.3,555.7 1364.6,561.1 1365.2,564.1 1366.3,568.8 1370.4,571.8" fill="none" stroke="#6b6a48" stroke-width="0.6" opacity="0.6"/><polyline points="1485.7,602.7 1490.5,603.2 1493.8,602.4 1496.7,600.4 1501.1,599.8 1506.6,597.0 1511.4,595.8" fill="none" stroke="#7d7550" stroke-width="0.4" opacity="0.6"/><polyline points="1528.1,701.1 1531.7,697.1 1532.9,690.4 1532.5,685.0 1532.4,679.8 1536.6,674.7" fill="none" stroke="#6b6a48" stroke-width="0.5" opacity="0.6"/><polyline points="1221.8,446.6 1222.4,443.5 1221.9,440.8 1221.5,435.7 1222.7,431.4 1227.5,428.2 1233.2,425.2 1235.3,422.0 1238.4,417.9" fill="none" stroke="#8a7a58" stroke-width="0.6" opacity="0.6"/><polyline points="1343.4,709.9 1342.8,715.8 1340.8,721.8 1339.4,725.2 1337.8,729.5" fill="none" stroke="#8a7a58" stroke-width="0.6" opacity="0.6"/><polyline points="1382.5,373.4 1383.3,378.7 1384.6,384.2 1383.8,387.2" fill="none" stroke="#8a7a58" stroke-width="0.6" opacity="0.6"/><polyline points="1267.7,584.9 1270.9,586.6 1272.8,591.9 1277.3,595.6 1281.5,596.2 1285.5,596.0 1288.6,595.2 1291.2,593.9 1295.3,594.1" fill="none" stroke="#7d7550" stroke-width="0.5" opacity="0.6"/><polyline points="1537.3,396.4 1539.7,402.5 1538.3,406.7 1537.1,409.2 1536.1,413.0 1535.0,415.3 1532.9,417.2" fill="none" stroke="#5e6a40" stroke-width="0.4" opacity="0.6"/><polyline points="1339.2,649.1 1339.0,645.2 1339.8,642.1 1342.0,636.6 1341.8,631.7" fill="none" stroke="#8a7a58" stroke-width="0.5" opacity="0.6"/><polyline points="1266.2,338.3 1267.9,336.0 1270.0,330.6 1272.1,325.4 1273.8,323.1 1273.6,319.8 1272.4,316.7 1270.3,314.4 1265.5,314.0" fill="none" stroke="#7d7550" stroke-width="0.6" opacity="0.6"/><polyline points="1162.6,603.8 1164.9,606.1 1168.6,609.1 1170.8,612.4 1175.3,615.7" fill="none" stroke="#6b6a48" stroke-width="0.5" opacity="0.6"/><polyline points="1206.8,697.1 1205.2,694.4 1198.9,692.1 1195.4,686.0 1192.9,680.7 1191.6,676.3 1187.7,672.6 1183.4,669.1" fill="none" stroke="#6b6a48" stroke-width="0.4" opacity="0.6"/><polyline points="1252.9,358.9 1252.2,355.4 1249.3,350.2 1246.2,346.9 1241.5,343.7 1236.0,341.3 1229.0,340.6" fill="none" stroke="#6b6a48" stroke-width="0.6" opacity="0.6"/><polyline points="1483.1,663.5 1480.8,661.6 1479.8,657.2 1480.1,651.0 1480.2,647.5 1483.2,642.7 1487.6,639.6 1494.4,640.6" fill="none" stroke="#9a8868" stroke-width="0.5" opacity="0.6"/><polyline points="1451.8,620.8 1457.2,618.5 1462.2,616.0 1465.7,610.5 1468.2,608.5 1469.4,603.3 1470.3,596.9" fill="none" stroke="#6b6a48" stroke-width="0.6" opacity="0.6"/><polyline points="1474.7,428.5 1481.4,428.6 1488.2,428.6 1493.0,431.7 1499.2,434.2" fill="none" stroke="#5e6a40" stroke-width="0.4" opacity="0.6"/><polyline points="1202.2,516.3 1197.8,517.8 1194.0,516.7 1192.3,514.5 1187.1,512.0" fill="none" stroke="#5e6a40" stroke-width="0.5" opacity="0.6"/><polyline points="1184.8,361.5 1179.7,358.1 1178.7,354.4 1174.3,351.0 1171.0,351.2 1168.5,352.2 1165.2,352.5 1158.6,350.3 1154.7,347.1" fill="none" stroke="#6b6a48" stroke-width="0.5" opacity="0.6"/><polyline points="1306.8,653.4 1301.4,650.9 1299.1,647.3 1298.8,643.1 1298.1,636.9" fill="none" stroke="#8a7a58" stroke-width="0.4" opacity="0.6"/><polyline points="1454.1,463.4 1455.6,465.8 1455.4,472.7 1452.2,476.6 1452.1,482.4 1450.6,488.5 1447.6,492.2" fill="none" stroke="#6b6a48" stroke-width="0.5" opacity="0.6"/><polyline points="1306.1,385.4 1312.9,385.3 1319.0,383.0 1322.9,383.9 1327.4,381.3 1333.9,379.1" fill="none" stroke="#9a8868" stroke-width="0.6" opacity="0.6"/><polyline points="1357.8,401.3 1361.2,400.8 1364.8,398.7 1369.7,398.0 1372.2,396.8 1378.1,397.0 1383.2,400.3 1387.0,399.8 1390.7,399.0" fill="none" stroke="#7d7550" stroke-width="0.6" opacity="0.6"/><polyline points="1126.6,493.6 1131.0,496.3 1136.7,500.3 1140.4,502.9" fill="none" stroke="#6b6a48" stroke-width="0.5" opacity="0.6"/><polyline points="1178.1,535.3 1173.1,534.2 1169.8,532.3 1167.0,530.0 1165.3,527.0 1163.3,521.6" fill="none" stroke="#9a8868" stroke-width="0.6" opacity="0.6"/><polyline points="1532.2,706.5 1530.2,703.0 1524.0,699.9 1521.7,694.9 1523.3,689.2 1525.4,683.2" fill="none" stroke="#5e6a40" stroke-width="0.5" opacity="0.6"/><polyline points="1289.2,708.2 1287.3,711.5 1288.9,718.2 1291.4,723.6 1294.7,729.6 1299.0,731.4 1301.1,732.9" fill="none" stroke="#8a7a58" stroke-width="0.4" opacity="0.6"/><polyline points="1426.4,345.4 1429.4,346.8 1434.1,350.4 1437.6,351.9" fill="none" stroke="#6b6a48" stroke-width="0.6" opacity="0.6"/><polyline points="1152.7,399.6 1147.6,399.5 1143.3,400.2 1138.2,399.2 1135.1,399.1" fill="none" stroke="#6b6a48" stroke-width="0.4" opacity="0.6"/><polyline points="1334.1,481.6 1333.9,485.9 1334.5,489.0 1334.0,493.1 1332.2,499.1 1333.9,503.1 1337.9,508.6 1339.3,511.6" fill="none" stroke="#5e6a40" stroke-width="0.4" opacity="0.6"/><polyline points="1126.6,518.6 1132.0,520.2 1136.4,522.1 1139.2,525.3 1139.4,529.9" fill="none" stroke="#9a8868" stroke-width="0.5" opacity="0.6"/><polyline points="1185.0,473.1 1189.2,467.9 1190.1,463.7 1188.1,459.6" fill="none" stroke="#9a8868" stroke-width="0.4" opacity="0.6"/><polyline points="1338.5,678.9 1340.3,681.9 1341.6,685.2 1346.7,687.6 1349.9,692.9 1349.8,696.3 1351.2,701.3 1351.7,706.6 1351.8,710.1" fill="none" stroke="#7d7550" stroke-width="0.5" opacity="0.6"/><polyline points="1158.2,336.9 1155.9,334.7 1151.7,333.0 1147.0,331.0" fill="none" stroke="#5e6a40" stroke-width="0.5" opacity="0.6"/><polyline points="1313.1,385.9 1313.3,383.4 1314.3,379.6 1317.1,375.9 1318.1,369.0" fill="none" stroke="#5e6a40" stroke-width="0.5" opacity="0.6"/><polyline points="1533.6,449.5 1535.5,453.1 1539.1,455.5 1544.9,455.2 1549.1,453.2" fill="none" stroke="#6b6a48" stroke-width="0.6" opacity="0.6"/><polyline points="1356.9,361.6 1351.8,363.9 1346.8,362.6 1342.4,360.2 1336.7,356.6 1333.5,355.8 1329.7,354.9" fill="none" stroke="#8a7a58" stroke-width="0.6" opacity="0.6"/><polyline points="1344.2,441.2 1346.8,446.3 1351.1,451.4 1354.2,453.9 1357.5,457.0 1358.4,460.1 1358.7,463.8" fill="none" stroke="#5e6a40" stroke-width="0.5" opacity="0.6"/><polyline points="1487.5,579.7 1490.0,578.5 1494.1,575.4 1499.2,574.4" fill="none" stroke="#7d7550" stroke-width="0.6" opacity="0.6"/><polyline points="1219.9,662.5 1213.4,660.3 1208.1,660.4 1204.6,658.9 1198.0,658.3 1192.2,654.7 1186.9,655.2 1180.3,653.3 1177.3,651.0" fill="none" stroke="#6b6a48" stroke-width="0.4" opacity="0.6"/><polyline points="1249.2,584.5 1246.3,584.1 1240.7,581.5 1236.0,582.3 1232.6,580.0 1227.7,576.2" fill="none" stroke="#6b6a48" stroke-width="0.6" opacity="0.6"/><polyline points="1514.6,622.2 1510.6,616.9 1507.8,613.1 1506.6,606.5 1508.6,601.9 1511.0,600.9" fill="none" stroke="#7d7550" stroke-width="0.6" opacity="0.6"/><polyline points="1253.3,527.8 1249.1,523.9 1246.3,523.6 1242.0,524.4" fill="none" stroke="#8a7a58" stroke-width="0.6" opacity="0.6"/><polyline points="1196.9,343.5 1193.6,337.3 1191.1,332.3 1186.2,329.0 1183.8,323.2 1179.2,320.0 1175.8,319.3 1172.0,313.7 1165.8,312.5" fill="none" stroke="#6b6a48" stroke-width="0.5" opacity="0.6"/><polyline points="1521.5,364.3 1521.3,367.3 1518.6,373.7 1514.6,375.3 1512.2,379.6 1513.6,386.0 1514.3,390.5 1512.6,394.4" fill="none" stroke="#8a7a58" stroke-width="0.6" opacity="0.6"/><polyline points="1214.6,607.6 1214.6,611.7 1214.9,617.0 1214.4,620.5 1216.4,626.5" fill="none" stroke="#5e6a40" stroke-width="0.5" opacity="0.6"/><polyline points="1447.4,347.5 1445.8,349.6 1446.2,353.6 1447.2,357.0 1445.7,362.3 1443.6,364.8" fill="none" stroke="#6b6a48" stroke-width="0.4" opacity="0.6"/><polyline points="1136.1,316.9 1132.5,311.8 1132.4,309.2 1129.5,306.4 1127.5,304.8 1124.7,303.6 1122.9,300.7" fill="none" stroke="#8a7a58" stroke-width="0.4" opacity="0.6"/><polyline points="1199.0,651.6 1204.4,654.0 1207.4,653.2 1212.6,650.3 1214.9,643.8 1217.7,638.6 1219.8,634.9" fill="none" stroke="#6b6a48" stroke-width="0.5" opacity="0.6"/><polyline points="1245.8,385.1 1239.4,382.5 1237.2,381.0 1230.4,380.2 1225.6,377.0 1223.8,375.1 1223.7,371.2 1225.7,366.7" fill="none" stroke="#5e6a40" stroke-width="0.4" opacity="0.6"/><polyline points="1357.9,679.6 1360.2,676.9 1365.9,675.8 1371.8,676.8 1377.2,679.1 1383.0,680.7 1389.6,678.7" fill="none" stroke="#8a7a58" stroke-width="0.4" opacity="0.6"/><polyline points="1303.8,696.6 1299.6,693.9 1297.1,690.3 1297.8,686.7 1299.3,684.3 1304.0,682.7 1308.1,678.1 1311.1,677.4" fill="none" stroke="#8a7a58" stroke-width="0.5" opacity="0.6"/><polyline points="1477.3,600.7 1474.2,597.9 1471.1,596.2 1467.5,590.3 1464.0,588.6 1461.1,588.9 1457.8,590.4" fill="none" stroke="#8a7a58" stroke-width="0.6" opacity="0.6"/><polyline points="1318.1,637.4 1321.8,639.4 1324.3,642.4 1328.9,643.6 1331.4,642.7 1337.1,642.1 1342.1,642.2 1348.4,639.4 1351.6,636.6" fill="none" stroke="#6b6a48" stroke-width="0.6" opacity="0.6"/><polyline points="1304.2,508.7 1307.4,510.3 1312.2,509.2 1318.3,506.2 1322.5,505.0" fill="none" stroke="#7d7550" stroke-width="0.5" opacity="0.6"/><polyline points="1142.1,587.9 1138.5,587.2 1133.5,588.2 1129.0,587.5 1124.0,584.0 1118.3,584.3 1111.9,584.5" fill="none" stroke="#8a7a58" stroke-width="0.6" opacity="0.6"/><polyline points="1143.9,677.0 1140.5,673.0 1136.7,672.0 1131.8,670.3 1129.2,669.6" fill="none" stroke="#9a8868" stroke-width="0.5" opacity="0.6"/><polyline points="1495.0,534.1 1499.9,529.7 1504.1,527.8 1507.9,524.1" fill="none" stroke="#8a7a58" stroke-width="0.6" opacity="0.6"/><polyline points="1292.2,701.6 1297.4,698.0 1304.3,698.1 1308.3,694.8 1312.4,694.8 1317.5,692.9 1320.0,688.7 1319.9,685.5 1322.2,680.5" fill="none" stroke="#7d7550" stroke-width="0.5" opacity="0.6"/><polyline points="1186.6,661.3 1186.2,666.8 1188.7,670.0 1188.3,674.2 1190.1,680.9 1190.7,686.5" fill="none" stroke="#5e6a40" stroke-width="0.6" opacity="0.6"/><polyline points="1401.7,469.1 1397.1,473.5 1394.6,477.5 1390.3,479.3 1385.5,477.4 1381.2,477.9" fill="none" stroke="#9a8868" stroke-width="0.4" opacity="0.6"/><polyline points="1127.9,521.0 1130.6,521.4 1133.1,522.7 1135.3,524.1" fill="none" stroke="#6b6a48" stroke-width="0.4" opacity="0.6"/><polyline points="1565.2,677.7 1568.8,677.9 1572.8,679.9 1578.6,681.6 1585.2,683.7" fill="none" stroke="#6b6a48" stroke-width="0.6" opacity="0.6"/><polyline points="1373.1,445.7 1377.9,449.3 1380.5,452.8 1383.7,458.7 1384.7,461.1 1387.6,466.9 1388.2,471.5 1385.0,476.5 1384.4,482.1" fill="none" stroke="#6b6a48" stroke-width="0.5" opacity="0.6"/><polyline points="1543.5,485.9 1543.5,480.5 1541.0,475.8 1535.4,472.7" fill="none" stroke="#6b6a48" stroke-width="0.6" opacity="0.6"/><polyline points="1171.5,428.1 1164.7,429.8 1160.1,428.1 1155.6,423.9 1151.6,420.1 1150.1,414.0 1148.3,412.1 1145.6,406.6 1140.5,402.9" fill="none" stroke="#8a7a58" stroke-width="0.4" opacity="0.6"/><polyline points="1447.6,709.7 1442.9,714.8 1439.3,718.8 1439.4,723.2 1439.3,727.6" fill="none" stroke="#6b6a48" stroke-width="0.5" opacity="0.6"/><polyline points="1411.3,632.6 1416.1,628.0 1416.5,621.5 1412.8,617.2" fill="none" stroke="#6b6a48" stroke-width="0.5" opacity="0.6"/><polyline points="1300.3,574.2 1305.0,573.8 1307.5,574.8 1311.0,574.3 1313.4,575.2 1317.3,573.6 1322.5,570.1 1326.1,570.0" fill="none" stroke="#9a8868" stroke-width="0.5" opacity="0.6"/><polyline points="1304.5,485.2 1301.6,481.8 1298.0,478.3 1296.0,474.5" fill="none" stroke="#9a8868" stroke-width="0.5" opacity="0.6"/><polyline points="1494.0,585.0 1497.0,586.4 1499.7,590.9 1502.2,594.7 1502.0,597.9" fill="none" stroke="#5e6a40" stroke-width="0.6" opacity="0.6"/><polyline points="1453.5,538.1 1459.8,537.9 1462.8,539.7 1466.9,542.7 1468.8,548.4 1473.3,550.8 1474.5,554.3 1478.5,559.4 1481.4,560.9" fill="none" stroke="#8a7a58" stroke-width="0.4" opacity="0.6"/><polyline points="1325.7,495.8 1321.1,496.5 1317.1,493.6 1313.8,493.4" fill="none" stroke="#9a8868" stroke-width="0.5" opacity="0.6"/><polyline points="1497.4,682.9 1494.7,682.4 1491.1,681.8 1486.7,680.5 1481.6,676.0 1479.2,671.3" fill="none" stroke="#9a8868" stroke-width="0.4" opacity="0.6"/><polyline points="1171.1,604.7 1172.3,606.9 1177.0,608.4 1181.8,609.9 1186.5,609.7 1189.6,609.8 1193.1,612.8" fill="none" stroke="#5e6a40" stroke-width="0.4" opacity="0.6"/><polyline points="1287.4,612.4 1281.7,608.5 1277.6,607.0 1275.5,605.3 1272.8,602.1 1272.7,596.5" fill="none" stroke="#7d7550" stroke-width="0.4" opacity="0.6"/><polyline points="1320.2,645.6 1315.1,645.4 1309.3,646.6 1303.5,645.4 1300.1,642.1 1297.7,639.3 1292.6,634.7 1289.6,631.7" fill="none" stroke="#8a7a58" stroke-width="0.5" opacity="0.6"/><polyline points="1337.1,468.1 1333.4,464.9 1331.2,461.1 1326.7,459.1 1324.7,456.6 1320.7,452.2 1318.6,450.6 1316.0,448.6 1310.8,445.6" fill="none" stroke="#6b6a48" stroke-width="0.4" opacity="0.6"/><polyline points="1124.0,559.4 1130.1,556.6 1132.1,554.3 1135.2,551.7 1137.1,546.8 1139.2,542.4 1141.5,537.6 1146.0,534.0 1151.9,531.9" fill="none" stroke="#5e6a40" stroke-width="0.5" opacity="0.6"/><polyline points="1409.1,358.9 1411.9,358.3 1417.0,359.8 1423.4,362.3 1426.6,363.6 1432.7,364.4 1435.8,365.1" fill="none" stroke="#5e6a40" stroke-width="0.4" opacity="0.6"/><polyline points="1491.5,582.0 1493.4,588.5 1497.9,591.9 1502.7,591.7" fill="none" stroke="#8a7a58" stroke-width="0.4" opacity="0.6"/><polyline points="1549.8,488.7 1554.0,486.6 1556.8,484.5 1558.9,482.0" fill="none" stroke="#9a8868" stroke-width="0.5" opacity="0.6"/><polyline points="1212.0,319.2 1213.4,314.6 1215.5,310.0 1218.7,306.8" fill="none" stroke="#7d7550" stroke-width="0.6" opacity="0.6"/><polyline points="1546.2,360.9 1543.5,362.7 1538.6,364.3 1536.1,363.1 1535.2,360.5 1530.2,355.7 1527.3,352.0" fill="none" stroke="#6b6a48" stroke-width="0.5" opacity="0.6"/><polyline points="1133.1,421.1 1127.6,417.9 1123.4,418.6 1117.2,417.6 1110.9,416.7 1107.2,414.4 1104.2,410.6" fill="none" stroke="#6b6a48" stroke-width="0.5" opacity="0.6"/><polyline points="1526.6,650.1 1528.8,645.7 1529.5,639.0 1534.4,634.5 1536.3,632.2" fill="none" stroke="#7d7550" stroke-width="0.6" opacity="0.6"/><polyline points="1454.5,445.6 1450.7,447.8 1445.5,450.6 1441.9,449.7 1437.1,450.0 1433.6,454.0 1433.7,459.2 1433.2,463.4 1430.1,465.8" fill="none" stroke="#6b6a48" stroke-width="0.6" opacity="0.6"/><polyline points="1168.3,409.7 1164.7,405.9 1162.2,404.3 1159.8,399.1 1156.1,395.1 1152.7,390.8 1149.1,386.3 1147.3,382.0 1143.0,377.4" fill="none" stroke="#8a7a58" stroke-width="0.5" opacity="0.6"/><polyline points="1259.3,415.4 1257.4,410.6 1251.7,408.1 1246.0,409.0 1242.9,407.4 1237.2,406.5 1231.4,408.0 1225.9,409.5 1219.6,408.7" fill="none" stroke="#8a7a58" stroke-width="0.6" opacity="0.6"/><polyline points="1351.5,353.9 1352.6,351.2 1354.4,347.2 1356.4,344.0 1360.8,342.4 1364.4,343.0 1367.9,346.6 1370.8,350.0 1370.8,355.0" fill="none" stroke="#9a8868" stroke-width="0.5" opacity="0.6"/><polyline points="1340.2,321.0 1343.7,319.7 1349.8,319.2 1354.7,317.8 1360.0,314.3 1365.6,312.3" fill="none" stroke="#8a7a58" stroke-width="0.6" opacity="0.6"/><polyline points="1134.7,505.3 1129.0,508.5 1125.4,509.2 1121.3,509.2 1117.6,509.0" fill="none" stroke="#9a8868" stroke-width="0.5" opacity="0.6"/><polyline points="1413.2,650.8 1415.3,653.6 1420.3,655.0 1423.2,658.9 1428.4,660.5 1434.1,662.7 1439.3,665.8 1444.7,668.2" fill="none" stroke="#6b6a48" stroke-width="0.5" opacity="0.6"/><polyline points="1129.3,605.5 1134.4,608.3 1136.1,614.0 1139.3,616.3 1140.0,619.2" fill="none" stroke="#7d7550" stroke-width="0.6" opacity="0.6"/><polyline points="1214.7,605.2 1214.7,601.8 1216.6,598.3 1219.7,592.2" fill="none" stroke="#6b6a48" stroke-width="0.6" opacity="0.6"/><polyline points="1529.5,667.1 1529.4,662.2 1527.9,659.6 1521.8,656.6" fill="none" stroke="#7d7550" stroke-width="0.6" opacity="0.6"/><polyline points="1450.3,363.2 1448.4,365.8 1445.3,368.4 1441.2,369.3 1435.3,367.4 1430.4,368.4" fill="none" stroke="#5e6a40" stroke-width="0.6" opacity="0.6"/><polyline points="1175.5,677.2 1173.1,680.0 1172.3,686.0 1170.2,689.2 1169.9,694.0 1170.0,697.4 1173.7,702.8 1177.3,706.4" fill="none" stroke="#5e6a40" stroke-width="0.6" opacity="0.6"/><polyline points="1368.5,434.5 1368.5,428.4 1368.1,424.7 1370.5,420.1 1372.6,414.3 1375.1,413.1 1381.1,411.8" fill="none" stroke="#5e6a40" stroke-width="0.4" opacity="0.6"/><polyline points="1430.4,336.9 1427.7,339.9 1427.8,343.0 1426.4,348.6 1423.3,350.4" fill="none" stroke="#5e6a40" stroke-width="0.5" opacity="0.6"/><polyline points="1492.3,626.0 1495.6,627.7 1501.8,630.0 1507.7,631.7 1511.5,633.0 1515.8,636.4 1521.9,639.7 1528.2,638.7 1533.7,639.8" fill="none" stroke="#5e6a40" stroke-width="0.5" opacity="0.6"/><polyline points="1458.5,331.5 1454.9,326.9 1453.4,322.4 1453.8,317.7 1451.4,313.5 1451.1,310.3 1450.0,304.1" fill="none" stroke="#6b6a48" stroke-width="0.5" opacity="0.6"/><polyline points="1510.1,453.7 1506.1,457.4 1500.0,459.9 1493.2,459.6 1488.2,464.0 1487.4,467.1 1486.9,470.3 1489.5,476.6 1488.9,483.2" fill="none" stroke="#9a8868" stroke-width="0.4" opacity="0.6"/><polyline points="1346.8,362.0 1343.4,358.2 1339.3,357.7 1336.3,355.3 1333.0,354.8 1328.9,349.9 1325.9,347.3 1320.2,344.2 1317.5,338.0" fill="none" stroke="#7d7550" stroke-width="0.4" opacity="0.6"/><polyline points="1491.7,468.7 1496.7,465.1 1499.5,464.0 1502.9,460.7 1505.5,459.7 1511.1,461.4" fill="none" stroke="#6b6a48" stroke-width="0.5" opacity="0.6"/><polyline points="1542.8,379.9 1543.1,385.8 1540.6,389.9 1540.1,395.0 1536.5,399.4 1533.8,400.7" fill="none" stroke="#7d7550" stroke-width="0.5" opacity="0.6"/><polyline points="1391.3,658.0 1386.5,661.6 1381.9,663.0 1377.9,662.7 1373.8,658.6" fill="none" stroke="#9a8868" stroke-width="0.6" opacity="0.6"/><polyline points="1535.0,500.9 1540.0,502.1 1545.1,506.7 1548.2,509.4 1549.7,515.8 1549.2,519.1 1547.8,525.4" fill="none" stroke="#9a8868" stroke-width="0.4" opacity="0.6"/><polyline points="1157.4,441.8 1158.3,445.4 1158.7,449.3 1160.3,451.5" fill="none" stroke="#9a8868" stroke-width="0.5" opacity="0.6"/><polyline points="1225.2,492.8 1225.3,498.9 1226.8,502.2 1228.9,507.7 1231.1,509.4 1231.9,511.8 1233.4,517.6" fill="none" stroke="#6b6a48" stroke-width="0.6" opacity="0.6"/><polyline points="1193.8,372.4 1192.8,369.2 1190.8,366.4 1188.4,361.2 1189.2,356.5 1187.9,354.2 1185.1,353.0" fill="none" stroke="#7d7550" stroke-width="0.5" opacity="0.6"/><polyline points="1253.9,373.8 1254.5,371.1 1252.9,366.0 1251.9,360.3 1254.5,354.5 1255.7,349.9" fill="none" stroke="#8a7a58" stroke-width="0.6" opacity="0.6"/><polyline points="1464.3,660.9 1462.4,667.5 1457.1,670.7 1451.2,672.3 1448.7,674.5 1444.3,675.4 1441.0,680.2 1440.9,683.9" fill="none" stroke="#7d7550" stroke-width="0.4" opacity="0.6"/><polyline points="1493.7,420.1 1493.7,416.0 1493.7,411.2 1491.7,407.5 1486.8,404.7 1481.8,402.1 1480.2,398.2" fill="none" stroke="#7d7550" stroke-width="0.5" opacity="0.6"/><polyline points="1209.8,575.8 1207.4,578.5 1206.9,583.8 1208.4,586.8 1213.4,589.8 1216.1,592.5 1219.4,594.2 1223.7,596.9" fill="none" stroke="#7d7550" stroke-width="0.4" opacity="0.6"/><polyline points="1458.5,473.0 1456.1,476.4 1454.3,480.3 1454.4,484.4 1458.7,489.8" fill="none" stroke="#6b6a48" stroke-width="0.4" opacity="0.6"/><polyline points="1122.2,523.3 1116.4,519.5 1115.3,516.7 1109.6,513.6 1108.0,509.5" fill="none" stroke="#6b6a48" stroke-width="0.4" opacity="0.6"/><polyline points="1148.9,644.4 1153.4,640.8 1154.5,638.1 1159.2,635.8 1163.9,631.0 1167.1,630.0" fill="none" stroke="#5e6a40" stroke-width="0.4" opacity="0.6"/><polyline points="1215.1,585.5 1211.9,589.0 1207.3,591.1 1204.4,592.6" fill="none" stroke="#5e6a40" stroke-width="0.4" opacity="0.6"/><polyline points="1566.7,498.8 1570.2,493.7 1574.1,491.3 1576.3,490.1 1582.6,491.4" fill="none" stroke="#5e6a40" stroke-width="0.5" opacity="0.6"/><polyline points="1421.1,327.9 1420.4,331.1 1419.0,336.3 1416.3,338.9 1415.1,343.1" fill="none" stroke="#7d7550" stroke-width="0.5" opacity="0.6"/><polyline points="1427.2,486.8 1431.6,488.2 1434.7,489.4 1438.9,492.2 1440.4,498.8 1440.5,501.7 1440.4,505.4" fill="none" stroke="#8a7a58" stroke-width="0.4" opacity="0.6"/><polyline points="1556.3,395.7 1561.7,400.1 1565.8,404.0 1572.1,406.4 1575.7,409.5 1580.1,409.9 1582.9,407.8 1585.8,407.2 1588.9,404.6" fill="none" stroke="#9a8868" stroke-width="0.4" opacity="0.6"/><polyline points="1567.1,413.3 1569.6,412.1 1572.7,409.6 1577.1,410.0 1581.0,409.0 1583.7,407.3 1587.4,403.1 1589.1,400.0" fill="none" stroke="#6b6a48" stroke-width="0.4" opacity="0.6"/><polyline points="1476.0,432.7 1472.1,435.9 1471.0,442.0 1469.5,444.1" fill="none" stroke="#8a7a58" stroke-width="0.6" opacity="0.6"/><polyline points="1497.4,503.3 1500.1,505.3 1504.1,511.0 1504.8,513.5 1507.8,515.3 1512.6,520.1 1518.0,521.0 1520.4,522.2" fill="none" stroke="#8a7a58" stroke-width="0.6" opacity="0.6"/><polyline points="1289.2,629.4 1283.1,626.0 1280.5,623.1 1280.7,618.5 1277.8,613.6 1274.7,612.8 1270.2,609.3 1267.7,607.6 1264.1,602.4" fill="none" stroke="#8a7a58" stroke-width="0.4" opacity="0.6"/><polyline points="1321.3,397.2 1324.3,395.3 1326.3,389.4 1332.4,386.3 1338.1,387.6" fill="none" stroke="#7d7550" stroke-width="0.4" opacity="0.6"/><polyline points="1170.3,324.4 1172.2,327.3 1172.7,333.2 1172.3,336.1" fill="none" stroke="#6b6a48" stroke-width="0.4" opacity="0.6"/><polyline points="1484.4,695.5 1486.8,698.8 1490.2,702.1 1495.1,706.3 1496.1,710.3 1499.1,713.8 1503.9,718.3 1506.7,724.0 1510.3,726.5" fill="none" stroke="#6b6a48" stroke-width="0.6" opacity="0.6"/><polyline points="1200.0,591.3 1201.5,594.5 1202.0,599.9 1199.1,603.6 1196.2,609.4 1195.7,616.0 1196.2,620.3" fill="none" stroke="#7d7550" stroke-width="0.4" opacity="0.6"/><polyline points="1480.9,447.4 1486.3,448.1 1490.1,450.1 1493.2,451.1 1496.7,453.0 1498.3,455.2" fill="none" stroke="#7d7550" stroke-width="0.5" opacity="0.6"/><polyline points="1512.6,641.5 1511.6,647.9 1511.7,650.4 1511.9,656.8" fill="none" stroke="#9a8868" stroke-width="0.6" opacity="0.6"/><polyline points="1325.5,533.8 1325.4,527.0 1325.0,522.4 1322.9,519.5 1319.5,517.9" fill="none" stroke="#9a8868" stroke-width="0.6" opacity="0.6"/><polyline points="1236.6,421.2 1237.9,423.7 1240.6,425.2 1245.8,427.4" fill="none" stroke="#5e6a40" stroke-width="0.5" opacity="0.6"/><polyline points="1139.6,428.8 1135.8,431.9 1132.5,437.4 1129.3,438.2 1126.0,437.3 1123.1,433.6 1122.8,428.6" fill="none" stroke="#5e6a40" stroke-width="0.6" opacity="0.6"/><polyline points="1388.3,392.7 1383.9,391.0 1377.9,389.5 1372.6,388.7 1368.0,386.5 1365.2,386.9 1362.6,388.5" fill="none" stroke="#6b6a48" stroke-width="0.6" opacity="0.6"/><polyline points="1524.9,523.9 1525.0,520.9 1524.4,517.9 1524.3,511.3 1526.0,507.9 1530.0,505.2 1531.3,502.1" fill="none" stroke="#6b6a48" stroke-width="0.4" opacity="0.6"/><polyline points="1204.0,647.0 1201.5,645.3 1200.6,642.4 1201.3,637.3 1198.8,631.5 1194.2,628.1 1192.5,625.9 1190.2,623.1" fill="none" stroke="#6b6a48" stroke-width="0.6" opacity="0.6"/><polyline points="1478.8,573.0 1473.2,575.1 1469.7,577.2 1465.0,577.5" fill="none" stroke="#9a8868" stroke-width="0.6" opacity="0.6"/><polyline points="1144.2,696.8 1146.6,701.1 1146.1,705.2 1141.5,709.4 1141.3,712.1 1137.6,715.1" fill="none" stroke="#8a7a58" stroke-width="0.5" opacity="0.6"/><polyline points="1257.3,320.1 1257.3,317.3 1257.5,311.9 1255.7,309.7 1255.6,306.8 1254.9,303.0 1254.8,299.9" fill="none" stroke="#5e6a40" stroke-width="0.4" opacity="0.6"/><polyline points="1354.8,453.6 1350.5,458.9 1349.5,462.2 1345.1,467.4 1344.1,471.1 1343.7,473.8 1346.1,478.1 1348.9,480.3" fill="none" stroke="#7d7550" stroke-width="0.5" opacity="0.6"/><polyline points="1135.5,365.0 1138.1,363.4 1140.7,363.1 1143.3,360.6 1144.1,357.5 1142.8,351.4" fill="none" stroke="#6b6a48" stroke-width="0.6" opacity="0.6"/><polyline points="1196.1,481.9 1200.6,481.6 1204.6,479.3 1207.9,480.0 1213.0,479.8 1216.8,480.5 1221.5,480.7 1223.6,482.5" fill="none" stroke="#9a8868" stroke-width="0.4" opacity="0.6"/><polyline points="1534.1,469.4 1532.1,466.7 1529.6,464.8 1525.9,462.8" fill="none" stroke="#6b6a48" stroke-width="0.6" opacity="0.6"/><polyline points="1263.3,696.5 1265.8,695.8 1269.8,694.1 1272.7,690.8 1272.9,684.0" fill="none" stroke="#9a8868" stroke-width="0.5" opacity="0.6"/><polyline points="1372.4,330.9 1376.9,331.6 1380.9,336.0 1382.2,339.0 1382.9,345.8 1381.8,348.3 1381.7,350.8" fill="none" stroke="#5e6a40" stroke-width="0.5" opacity="0.6"/><polyline points="1430.3,578.2 1424.1,579.1 1421.9,577.7 1419.5,574.9 1416.0,571.4 1413.4,565.6 1413.9,559.1 1415.7,555.0 1419.4,553.4" fill="none" stroke="#5e6a40" stroke-width="0.4" opacity="0.6"/><polyline points="1392.0,448.5 1391.3,444.6 1389.0,439.6 1384.5,437.9 1379.9,434.7 1373.6,435.4 1370.6,437.6 1366.2,437.6" fill="none" stroke="#7d7550" stroke-width="0.5" opacity="0.6"/><polyline points="1177.4,469.4 1177.4,466.3 1177.6,463.3 1175.9,459.9 1175.2,453.0 1173.3,450.0 1174.3,445.0" fill="none" stroke="#6b6a48" stroke-width="0.5" opacity="0.6"/><polyline points="1418.1,412.5 1422.7,408.1 1424.4,405.9 1426.8,401.0" fill="none" stroke="#5e6a40" stroke-width="0.5" opacity="0.6"/><polyline points="1158.8,667.9 1159.4,673.4 1158.8,678.7 1161.4,682.7 1166.0,684.8" fill="none" stroke="#7d7550" stroke-width="0.6" opacity="0.6"/><polyline points="1411.5,641.5 1411.2,638.8 1410.5,632.4 1409.6,628.9 1408.5,624.3" fill="none" stroke="#7d7550" stroke-width="0.5" opacity="0.6"/><polyline points="1237.0,521.1 1238.7,515.0 1237.2,512.0 1235.7,508.8" fill="none" stroke="#5e6a40" stroke-width="0.4" opacity="0.6"/><polyline points="1367.6,422.3 1370.3,427.2 1374.3,430.1 1379.3,429.5 1385.5,427.1" fill="none" stroke="#7d7550" stroke-width="0.6" opacity="0.6"/><polyline points="1253.9,659.7 1259.3,659.9 1262.3,658.2 1265.6,652.5 1265.0,647.4 1265.8,642.0 1267.0,637.2" fill="none" stroke="#9a8868" stroke-width="0.5" opacity="0.6"/><polyline points="1441.3,684.9 1434.5,685.6 1428.4,685.7 1426.0,684.4 1421.4,685.7 1416.3,687.3 1410.2,688.3 1404.7,686.0 1403.4,683.2" fill="none" stroke="#5e6a40" stroke-width="0.4" opacity="0.6"/><polyline points="1437.5,537.4 1433.0,536.7 1428.5,539.9 1422.5,541.7 1418.2,545.1" fill="none" stroke="#8a7a58" stroke-width="0.5" opacity="0.6"/><polyline points="1247.2,697.8 1242.0,695.4 1239.8,693.9 1236.8,688.3 1233.1,686.1 1231.4,679.5 1232.9,673.4 1231.0,667.2 1231.7,663.9" fill="none" stroke="#7d7550" stroke-width="0.4" opacity="0.6"/><polyline points="1525.9,350.9 1526.6,355.6 1531.8,360.2 1537.0,363.2 1540.3,368.8" fill="none" stroke="#6b6a48" stroke-width="0.5" opacity="0.6"/><polyline points="1306.4,483.5 1305.5,486.9 1302.2,491.0 1298.8,494.4 1297.3,496.5" fill="none" stroke="#9a8868" stroke-width="0.6" opacity="0.6"/><polyline points="1334.0,662.0 1338.4,657.3 1342.3,651.8 1345.1,651.1 1346.7,648.9 1350.4,645.9 1353.9,644.1 1356.7,643.1" fill="none" stroke="#7d7550" stroke-width="0.6" opacity="0.6"/><polyline points="1374.7,562.8 1368.2,562.8 1365.8,562.0 1360.8,563.1 1354.6,564.1 1351.4,568.3" fill="none" stroke="#6b6a48" stroke-width="0.5" opacity="0.6"/><polyline points="1461.3,349.6 1456.6,345.7 1455.0,342.2 1454.0,337.4 1452.9,332.3 1451.6,328.3 1452.3,322.9" fill="none" stroke="#7d7550" stroke-width="0.4" opacity="0.6"/><polyline points="1481.9,357.8 1476.7,355.1 1472.0,355.6 1469.2,353.9 1463.8,350.9 1460.6,350.4 1457.1,348.3" fill="none" stroke="#9a8868" stroke-width="0.5" opacity="0.6"/><polyline points="1405.1,588.9 1399.1,586.1 1398.2,583.6 1398.3,580.6 1398.6,575.3 1395.6,571.2 1394.4,567.3" fill="none" stroke="#9a8868" stroke-width="0.5" opacity="0.6"/><polyline points="1299.1,374.6 1299.2,381.5 1298.1,386.9 1296.8,391.7 1294.1,394.1 1288.9,396.8 1283.6,398.4 1279.1,399.9 1275.4,398.9" fill="none" stroke="#5e6a40" stroke-width="0.4" opacity="0.6"/><polyline points="1407.3,629.7 1410.9,626.1 1412.8,620.0 1413.8,617.5 1416.0,613.1" fill="none" stroke="#5e6a40" stroke-width="0.5" opacity="0.6"/><polyline points="1571.1,437.2 1574.5,437.4 1579.9,435.6 1582.8,432.7 1582.8,428.7 1581.9,425.9 1578.3,423.4" fill="none" stroke="#6b6a48" stroke-width="0.4" opacity="0.6"/><polyline points="1236.6,460.2 1242.7,458.9 1246.0,460.9 1252.0,460.4 1258.0,459.0" fill="none" stroke="#5e6a40" stroke-width="0.4" opacity="0.6"/><polyline points="1231.3,648.3 1231.7,654.5 1230.1,657.2 1227.0,660.7 1226.2,663.4 1225.7,666.3 1227.4,672.0" fill="none" stroke="#5e6a40" stroke-width="0.4" opacity="0.6"/><polyline points="1221.3,446.1 1217.1,443.0 1210.5,441.3 1205.1,438.5 1200.2,437.2 1196.1,434.4" fill="none" stroke="#8a7a58" stroke-width="0.5" opacity="0.6"/><polyline points="1396.3,539.1 1394.1,535.4 1394.4,532.8 1392.4,528.2 1391.6,522.7" fill="none" stroke="#9a8868" stroke-width="0.6" opacity="0.6"/><polyline points="1362.6,558.4 1365.3,560.5 1366.9,563.6 1371.8,565.4" fill="none" stroke="#7d7550" stroke-width="0.6" opacity="0.6"/><polyline points="1381.7,573.7 1386.6,576.2 1389.0,582.1 1390.2,586.5 1391.1,590.3 1390.0,593.2 1386.4,594.9 1381.9,597.6 1378.4,601.5" fill="none" stroke="#6b6a48" stroke-width="0.4" opacity="0.6"/><polyline points="1513.0,355.9 1518.6,353.9 1522.0,350.2 1522.1,344.3 1523.7,341.3 1524.9,338.6 1528.3,334.1 1528.1,328.9 1529.9,326.1" fill="none" stroke="#8a7a58" stroke-width="0.4" opacity="0.6"/><polyline points="1220.8,464.5 1224.1,467.4 1230.3,467.8 1233.3,467.1 1235.4,463.8 1237.6,459.6 1239.3,457.3 1238.2,450.9 1236.5,445.4" fill="none" stroke="#9a8868" stroke-width="0.6" opacity="0.6"/><polyline points="1454.9,401.9 1459.7,405.8 1463.6,408.5 1469.7,411.5 1472.5,414.7 1472.1,421.2 1469.5,425.7 1468.3,428.1" fill="none" stroke="#5e6a40" stroke-width="0.4" opacity="0.6"/><polyline points="1153.7,639.9 1157.0,637.4 1160.6,632.8 1161.9,627.0 1167.1,623.4 1168.5,617.5" fill="none" stroke="#5e6a40" stroke-width="0.6" opacity="0.6"/><polyline points="1456.8,565.7 1454.8,569.2 1454.6,575.6 1458.0,581.3 1460.9,582.6 1465.3,582.6 1470.6,580.7" fill="none" stroke="#5e6a40" stroke-width="0.5" opacity="0.6"/><polyline points="1194.3,407.0 1190.1,404.7 1187.5,398.3 1182.7,396.3 1181.0,392.8" fill="none" stroke="#8a7a58" stroke-width="0.5" opacity="0.6"/><polyline points="1188.6,665.0 1183.0,666.2 1180.3,664.5 1177.7,664.5 1174.0,664.2 1171.5,664.4 1168.3,668.1 1165.8,670.7" fill="none" stroke="#7d7550" stroke-width="0.5" opacity="0.6"/><polyline points="1474.2,588.2 1470.7,589.5 1467.8,589.4 1464.1,587.1 1458.2,586.5 1454.0,586.9 1452.0,589.5 1447.3,590.4" fill="none" stroke="#5e6a40" stroke-width="0.4" opacity="0.6"/><polyline points="1386.6,349.6 1388.1,353.2 1387.5,357.0 1387.0,363.0 1384.7,366.0 1381.3,366.5 1377.1,368.9 1372.6,371.0" fill="none" stroke="#5e6a40" stroke-width="0.6" opacity="0.6"/><polyline points="1472.3,414.1 1469.3,413.8 1465.9,411.3 1459.3,410.8 1454.0,406.9 1453.0,403.3 1451.8,399.5 1452.1,395.2 1451.4,392.6" fill="none" stroke="#8a7a58" stroke-width="0.4" opacity="0.6"/><polyline points="1494.6,376.6 1491.1,375.1 1487.7,372.9 1483.7,368.4 1482.2,362.6 1479.4,360.2" fill="none" stroke="#7d7550" stroke-width="0.5" opacity="0.6"/><polyline points="1362.3,525.2 1364.7,528.3 1371.2,529.4 1374.7,527.3 1380.3,526.8 1386.1,523.3 1391.2,519.7 1395.1,516.0 1397.9,516.0" fill="none" stroke="#9a8868" stroke-width="0.6" opacity="0.6"/><polyline points="1387.0,699.0 1383.4,698.2 1380.4,698.5 1377.6,699.2 1372.2,699.5 1366.4,700.3" fill="none" stroke="#8a7a58" stroke-width="0.5" opacity="0.6"/><polyline points="1285.1,399.7 1290.5,400.1 1293.0,399.4 1296.5,400.8 1298.3,405.0 1299.6,407.4" fill="none" stroke="#7d7550" stroke-width="0.6" opacity="0.6"/><polyline points="1455.3,683.9 1453.0,678.5 1451.9,675.5 1450.4,673.2 1451.4,668.7 1453.9,666.1" fill="none" stroke="#8a7a58" stroke-width="0.4" opacity="0.6"/><polyline points="1184.9,468.4 1181.3,462.4 1176.9,458.0 1176.2,452.1 1176.1,448.7 1180.3,444.0 1181.3,438.2 1179.8,435.4" fill="none" stroke="#9a8868" stroke-width="0.4" opacity="0.6"/><polyline points="1146.9,430.0 1146.0,435.0 1146.3,437.6 1149.8,442.0 1152.6,443.3 1155.5,449.5" fill="none" stroke="#8a7a58" stroke-width="0.6" opacity="0.6"/><polyline points="1554.0,614.7 1558.2,617.8 1559.8,620.5 1562.2,622.4 1567.1,624.7 1573.4,626.0 1576.9,631.1" fill="none" stroke="#5e6a40" stroke-width="0.5" opacity="0.6"/><polyline points="1159.2,617.5 1152.6,615.6 1145.7,615.9 1140.2,616.1 1136.8,618.8 1133.7,620.2 1129.7,618.8 1124.2,616.3" fill="none" stroke="#8a7a58" stroke-width="0.5" opacity="0.6"/><polyline points="1437.2,605.7 1435.7,600.9 1431.0,596.0 1428.7,592.5 1425.6,589.6 1424.6,586.3" fill="none" stroke="#8a7a58" stroke-width="0.4" opacity="0.6"/><polyline points="1229.3,642.1 1232.9,640.9 1234.8,637.9 1238.0,635.4 1241.2,635.5" fill="none" stroke="#8a7a58" stroke-width="0.4" opacity="0.6"/><polyline points="1343.5,447.0 1343.5,451.2 1346.1,455.4 1349.2,456.2" fill="none" stroke="#8a7a58" stroke-width="0.6" opacity="0.6"/><polyline points="1245.7,351.8 1241.8,350.9 1238.9,346.5 1234.6,343.0 1231.7,339.2 1231.6,332.3 1236.0,326.9 1238.8,325.8" fill="none" stroke="#6b6a48" stroke-width="0.5" opacity="0.6"/><polyline points="1332.1,373.8 1328.9,374.1 1326.8,376.1 1324.0,376.0 1318.6,377.9 1311.7,378.2" fill="none" stroke="#5e6a40" stroke-width="0.6" opacity="0.6"/><polyline points="1187.9,676.6 1187.3,679.3 1188.7,683.4 1192.8,688.7 1196.6,692.9 1199.2,694.7 1205.4,696.8 1209.1,699.6 1211.5,701.9" fill="none" stroke="#8a7a58" stroke-width="0.6" opacity="0.6"/><polyline points="1381.3,594.5 1382.6,597.5 1383.4,599.9 1381.2,604.9 1381.1,610.1" fill="none" stroke="#8a7a58" stroke-width="0.6" opacity="0.6"/><polyline points="1371.9,627.1 1375.8,624.1 1378.4,622.3 1379.8,616.0 1384.9,612.4" fill="none" stroke="#7d7550" stroke-width="0.6" opacity="0.6"/><polyline points="1402.9,391.8 1400.5,392.8 1394.8,392.7 1391.9,391.7 1386.0,391.1 1383.0,392.3 1380.0,393.6 1377.7,395.9" fill="none" stroke="#7d7550" stroke-width="0.4" opacity="0.6"/><polyline points="1459.1,382.7 1458.7,387.0 1460.8,390.2 1466.5,391.6 1470.8,390.0 1474.1,385.5 1479.7,384.5" fill="none" stroke="#6b6a48" stroke-width="0.4" opacity="0.6"/><polyline points="1541.4,321.6 1540.8,315.7 1542.7,311.7 1543.9,307.8 1546.4,303.8 1549.8,300.9 1554.9,300.2 1558.8,298.0" fill="none" stroke="#7d7550" stroke-width="0.6" opacity="0.6"/><polyline points="1534.2,332.7 1528.6,336.0 1526.4,341.8 1523.0,346.1 1519.9,347.8 1513.3,349.2 1506.7,347.9" fill="none" stroke="#5e6a40" stroke-width="0.6" opacity="0.6"/><polyline points="1387.0,416.3 1384.7,418.6 1379.8,422.3 1373.3,421.6 1370.0,420.6" fill="none" stroke="#9a8868" stroke-width="0.4" opacity="0.6"/><polyline points="1557.5,531.0 1557.8,537.5 1558.1,540.3 1557.6,544.7 1560.5,550.3 1563.2,552.3" fill="none" stroke="#9a8868" stroke-width="0.4" opacity="0.6"/><polyline points="1334.3,677.3 1335.9,673.1 1341.1,669.0 1343.7,668.9 1349.0,671.7 1353.0,675.9 1354.6,679.0 1353.4,684.9" fill="none" stroke="#7d7550" stroke-width="0.6" opacity="0.6"/><polyline points="1364.6,349.4 1362.1,349.0 1357.2,347.1 1355.8,344.9" fill="none" stroke="#8a7a58" stroke-width="0.4" opacity="0.6"/><polyline points="1174.1,501.7 1174.4,496.1 1175.5,491.6 1176.6,488.3 1175.4,485.3" fill="none" stroke="#9a8868" stroke-width="0.4" opacity="0.6"/><polyline points="1467.1,316.8 1472.5,316.3 1476.8,317.6 1480.0,322.2 1479.5,328.2 1480.7,332.5 1484.4,336.4" fill="none" stroke="#5e6a40" stroke-width="0.5" opacity="0.6"/><polyline points="1328.3,460.0 1333.5,463.3 1335.4,465.0 1335.6,470.2 1337.2,472.3 1340.4,476.7 1340.4,479.6 1337.7,482.5" fill="none" stroke="#9a8868" stroke-width="0.5" opacity="0.6"/><polyline points="1304.2,637.8 1301.3,637.6 1296.9,636.9 1292.3,633.5 1290.7,627.0 1286.6,623.5 1286.1,620.7 1284.3,618.8 1277.8,616.8" fill="none" stroke="#7d7550" stroke-width="0.4" opacity="0.6"/><polyline points="1343.8,395.2 1340.0,391.9 1336.1,389.9 1330.9,385.6" fill="none" stroke="#6b6a48" stroke-width="0.5" opacity="0.6"/><polyline points="1309.9,598.1 1311.8,595.2 1313.6,589.0 1314.6,582.2 1315.6,577.3 1317.8,571.8 1319.3,569.7 1322.7,564.6 1325.0,563.0" fill="none" stroke="#6b6a48" stroke-width="0.5" opacity="0.6"/><polyline points="1486.7,449.3 1484.4,447.5 1477.9,445.0 1474.2,443.9 1468.5,445.7" fill="none" stroke="#6b6a48" stroke-width="0.6" opacity="0.6"/><polyline points="1418.7,328.7 1421.3,326.3 1426.8,323.7 1430.1,323.8 1433.3,323.3" fill="none" stroke="#9a8868" stroke-width="0.6" opacity="0.6"/><polyline points="1478.8,680.5 1484.3,684.6 1487.9,689.1 1489.3,692.9 1492.1,697.4 1496.2,698.4 1501.1,696.3" fill="none" stroke="#7d7550" stroke-width="0.5" opacity="0.6"/><polyline points="1423.0,411.3 1419.6,408.6 1417.9,403.1 1415.4,401.2 1409.9,401.6 1406.8,401.0" fill="none" stroke="#8a7a58" stroke-width="0.6" opacity="0.6"/><polyline points="1505.0,333.6 1504.7,330.5 1504.0,324.7 1502.9,319.0 1505.9,313.0 1505.0,308.5 1506.1,306.2 1504.6,301.2 1503.7,297.6" fill="none" stroke="#9a8868" stroke-width="0.4" opacity="0.6"/><polyline points="1277.6,616.8 1277.2,619.8 1276.8,623.3 1274.0,626.1 1269.6,627.5" fill="none" stroke="#7d7550" stroke-width="0.4" opacity="0.6"/><polyline points="1400.4,602.3 1396.8,604.3 1394.6,609.1 1396.0,614.4 1396.8,618.1 1396.6,623.8 1400.6,629.0 1401.0,635.1 1398.7,638.4" fill="none" stroke="#7d7550" stroke-width="0.6" opacity="0.6"/><polyline points="1315.0,679.1 1313.9,673.8 1313.1,671.0 1312.4,666.9" fill="none" stroke="#8a7a58" stroke-width="0.5" opacity="0.6"/><polyline points="1377.7,626.6 1379.1,623.8 1380.5,619.8 1383.1,617.7 1385.9,615.9" fill="none" stroke="#7d7550" stroke-width="0.5" opacity="0.6"/><polyline points="1310.5,561.1 1314.6,560.4 1317.6,560.8 1323.2,557.3 1328.5,556.4 1331.9,556.4 1335.7,554.1" fill="none" stroke="#5e6a40" stroke-width="0.5" opacity="0.6"/><polyline points="1346.2,345.7 1349.0,344.2 1354.1,343.1 1356.8,344.1 1361.8,346.4" fill="none" stroke="#8a7a58" stroke-width="0.4" opacity="0.6"/><polyline points="1563.2,498.3 1566.7,499.9 1573.3,501.1 1577.2,498.8 1581.4,494.8 1587.7,491.7 1592.7,493.1" fill="none" stroke="#8a7a58" stroke-width="0.6" opacity="0.6"/><polyline points="1453.2,537.2 1450.3,537.2 1445.0,536.0 1442.5,534.1 1440.4,532.0 1437.1,529.5 1433.2,527.6 1430.5,526.3 1428.0,524.9" fill="none" stroke="#9a8868" stroke-width="0.4" opacity="0.6"/><polyline points="1393.7,642.3 1398.9,639.7 1402.8,637.4 1405.7,637.0 1410.0,635.4 1412.9,631.9" fill="none" stroke="#8a7a58" stroke-width="0.6" opacity="0.6"/><polyline points="1182.9,548.3 1179.2,548.3 1176.6,549.7 1170.5,551.0 1165.7,555.5" fill="none" stroke="#5e6a40" stroke-width="0.5" opacity="0.6"/><polyline points="1395.6,360.8 1391.7,362.9 1389.2,364.3 1386.7,367.1 1381.1,369.3 1375.3,370.3" fill="none" stroke="#5e6a40" stroke-width="0.6" opacity="0.6"/><polyline points="1377.1,710.3 1376.7,705.6 1379.0,702.0 1379.6,698.9 1379.9,695.0 1377.8,691.7" fill="none" stroke="#7d7550" stroke-width="0.5" opacity="0.6"/><polyline points="1260.1,666.8 1258.7,663.3 1257.5,657.5 1255.6,654.5 1253.4,649.9 1254.4,643.8" fill="none" stroke="#5e6a40" stroke-width="0.6" opacity="0.6"/><polyline points="1343.2,627.5 1338.8,623.5 1337.4,616.8 1335.6,614.8" fill="none" stroke="#5e6a40" stroke-width="0.4" opacity="0.6"/><polyline points="1258.2,375.7 1257.5,373.1 1252.6,368.6 1247.4,367.0 1244.1,362.0 1241.4,358.5" fill="none" stroke="#5e6a40" stroke-width="0.4" opacity="0.6"/><polyline points="1190.0,626.4 1186.4,626.1 1183.5,627.0 1178.8,626.7 1171.9,627.6" fill="none" stroke="#8a7a58" stroke-width="0.4" opacity="0.6"/><polyline points="1280.7,402.6 1278.8,409.1 1277.9,411.7 1275.1,416.3 1268.7,418.7" fill="none" stroke="#5e6a40" stroke-width="0.6" opacity="0.6"/><polyline points="1471.9,334.7 1465.8,335.7 1463.1,338.3 1460.4,338.9 1456.2,338.5 1449.8,340.7 1446.4,339.9" fill="none" stroke="#7d7550" stroke-width="0.5" opacity="0.6"/><polyline points="1370.8,343.2 1374.2,341.9 1376.9,342.0 1383.1,338.8 1385.7,338.3 1389.8,340.1" fill="none" stroke="#9a8868" stroke-width="0.5" opacity="0.6"/><polyline points="1225.9,592.6 1222.6,594.0 1220.9,596.4 1216.0,600.9" fill="none" stroke="#9a8868" stroke-width="0.5" opacity="0.6"/><polyline points="1376.2,653.7 1377.7,657.5 1382.0,661.2 1388.6,662.6 1394.3,659.2 1397.8,656.3 1400.5,654.0" fill="none" stroke="#8a7a58" stroke-width="0.6" opacity="0.6"/><polyline points="1422.7,371.1 1423.2,374.9 1425.8,378.9 1431.2,382.6 1435.4,383.1 1439.4,383.1 1443.8,384.6 1446.7,387.5" fill="none" stroke="#5e6a40" stroke-width="0.6" opacity="0.6"/><polyline points="1543.5,683.2 1546.0,685.4 1551.8,689.0 1552.9,694.0 1549.7,699.6 1544.4,702.9 1539.3,705.8 1535.9,705.1" fill="none" stroke="#7d7550" stroke-width="0.5" opacity="0.6"/><polyline points="1350.2,498.3 1349.2,495.8 1346.8,494.7 1343.2,493.3 1338.0,491.0 1333.8,490.6 1329.6,486.5 1328.8,483.0" fill="none" stroke="#7d7550" stroke-width="0.4" opacity="0.6"/><polyline points="1479.2,449.7 1479.7,455.8 1478.3,462.6 1478.7,467.6" fill="none" stroke="#9a8868" stroke-width="0.4" opacity="0.6"/><polyline points="1403.5,620.1 1405.0,623.4 1407.6,624.6 1409.0,626.8" fill="none" stroke="#9a8868" stroke-width="0.4" opacity="0.6"/><polyline points="1384.8,575.9 1378.2,574.3 1375.8,572.7 1373.3,571.5 1370.7,568.7 1364.6,567.4 1361.4,564.9" fill="none" stroke="#6b6a48" stroke-width="0.4" opacity="0.6"/><polyline points="1166.3,428.8 1164.0,433.0 1160.1,435.6 1153.3,437.3 1149.8,436.4 1144.8,436.6 1138.3,434.1 1134.7,429.3" fill="none" stroke="#9a8868" stroke-width="0.6" opacity="0.6"/><polyline points="1441.6,660.8 1442.5,657.3 1443.1,654.2 1445.7,652.1 1451.8,650.5" fill="none" stroke="#6b6a48" stroke-width="0.4" opacity="0.6"/><polyline points="1378.3,551.2 1383.6,553.7 1389.9,556.5 1392.6,558.9 1393.9,561.8" fill="none" stroke="#5e6a40" stroke-width="0.5" opacity="0.6"/><polyline points="1344.4,659.4 1339.5,657.9 1333.2,657.4 1328.3,654.8 1325.4,652.7 1321.4,649.0 1317.1,647.4 1311.8,649.1 1308.7,650.6" fill="none" stroke="#7d7550" stroke-width="0.6" opacity="0.6"/><polyline points="1123.3,546.4 1127.6,545.8 1130.9,547.6 1134.6,548.1" fill="none" stroke="#9a8868" stroke-width="0.5" opacity="0.6"/><polyline points="1566.6,597.4 1559.6,597.4 1555.3,598.2 1553.6,600.6 1550.4,601.5" fill="none" stroke="#9a8868" stroke-width="0.6" opacity="0.6"/><polyline points="1448.0,604.6 1444.4,605.5 1440.8,603.5 1435.4,604.8 1432.1,608.0 1429.2,609.6 1425.5,609.1 1422.6,608.3 1420.3,605.1" fill="none" stroke="#5e6a40" stroke-width="0.5" opacity="0.6"/><polyline points="1179.2,627.8 1178.4,632.8 1177.5,635.3 1177.4,638.3 1180.5,642.1 1185.1,643.1 1188.2,641.9" fill="none" stroke="#9a8868" stroke-width="0.6" opacity="0.6"/><polyline points="1170.0,685.4 1172.8,685.1 1176.2,683.9 1178.5,681.7" fill="none" stroke="#9a8868" stroke-width="0.5" opacity="0.6"/><polyline points="1474.5,333.0 1471.8,331.6 1468.1,330.2 1465.5,325.0 1465.9,320.7 1467.7,316.2" fill="none" stroke="#9a8868" stroke-width="0.4" opacity="0.6"/><polyline points="1217.2,493.8 1214.7,500.1 1216.4,504.8 1218.9,506.9 1221.3,513.4 1223.0,515.4 1225.8,516.3 1231.8,515.5 1237.8,513.9" fill="none" stroke="#5e6a40" stroke-width="0.5" opacity="0.6"/><polyline points="1403.9,594.0 1408.4,589.2 1413.7,588.2 1418.9,588.7 1422.3,589.4 1424.9,591.1 1429.3,595.8 1429.1,602.3 1429.8,605.2" fill="none" stroke="#5e6a40" stroke-width="0.6" opacity="0.6"/><polyline points="1142.1,438.1 1136.6,438.6 1132.9,439.8 1127.8,439.5 1123.2,441.0 1117.4,441.8 1114.1,446.0 1112.0,447.9" fill="none" stroke="#5e6a40" stroke-width="0.6" opacity="0.6"/><polyline points="1225.7,648.3 1224.0,650.7 1223.4,655.6 1224.6,659.6" fill="none" stroke="#5e6a40" stroke-width="0.5" opacity="0.6"/><polyline points="1193.5,380.8 1190.7,376.9 1189.1,373.6 1185.0,368.1 1180.4,367.3 1177.9,364.2 1177.4,361.2 1176.4,356.1" fill="none" stroke="#5e6a40" stroke-width="0.6" opacity="0.6"/><polyline points="1531.0,459.6 1525.9,462.5 1519.4,461.3 1517.0,459.0 1512.9,456.7 1509.2,457.7" fill="none" stroke="#5e6a40" stroke-width="0.5" opacity="0.6"/><polyline points="1353.6,358.5 1348.2,358.9 1344.0,357.0 1338.6,355.2 1334.7,355.9 1332.4,357.6 1329.2,362.9 1325.8,365.5 1324.3,370.1" fill="none" stroke="#8a7a58" stroke-width="0.4" opacity="0.6"/><polyline points="1404.7,654.9 1398.9,658.8 1395.2,661.7 1394.1,664.3 1393.0,666.7 1392.7,670.6" fill="none" stroke="#5e6a40" stroke-width="0.4" opacity="0.6"/><polyline points="1164.5,560.3 1165.1,557.7 1162.7,552.3 1163.6,549.5 1162.5,547.0 1157.8,543.0 1156.3,540.1 1151.0,536.5 1148.3,535.5" fill="none" stroke="#8a7a58" stroke-width="0.4" opacity="0.6"/><polyline points="1257.4,648.8 1262.7,651.6 1267.1,654.0 1271.1,653.0 1277.1,651.1 1279.1,649.2" fill="none" stroke="#9a8868" stroke-width="0.4" opacity="0.6"/><polyline points="1424.6,404.9 1427.2,407.6 1428.3,410.0 1431.6,413.4 1437.9,416.1 1442.5,416.7 1445.6,420.3 1449.9,422.3 1452.0,428.1" fill="none" stroke="#8a7a58" stroke-width="0.5" opacity="0.6"/><polyline points="1153.1,682.2 1150.8,685.8 1147.2,687.9 1145.5,690.0" fill="none" stroke="#8a7a58" stroke-width="0.6" opacity="0.6"/><polyline points="1453.8,401.0 1448.8,397.7 1442.5,398.1 1437.4,394.6 1435.5,390.3 1431.8,386.9 1431.5,382.8" fill="none" stroke="#8a7a58" stroke-width="0.6" opacity="0.6"/><polyline points="1170.8,410.4 1164.5,408.8 1158.6,409.3 1153.1,406.9" fill="none" stroke="#7d7550" stroke-width="0.4" opacity="0.6"/><polyline points="1162.3,490.0 1165.4,490.9 1171.8,492.7 1176.6,493.2 1182.1,497.5 1185.9,500.1 1189.0,503.2" fill="none" stroke="#5e6a40" stroke-width="0.5" opacity="0.6"/><polyline points="1434.8,352.3 1431.1,357.2 1427.7,362.2 1423.2,363.8 1418.8,367.1 1413.2,367.6 1409.9,367.2" fill="none" stroke="#8a7a58" stroke-width="0.6" opacity="0.6"/><polyline points="1508.8,495.4 1504.3,495.5 1499.2,497.6 1494.0,497.4 1491.1,499.9 1490.7,502.5" fill="none" stroke="#5e6a40" stroke-width="0.6" opacity="0.6"/><polyline points="1485.8,314.0 1488.4,308.7 1492.0,306.1 1497.2,306.6 1500.5,305.8 1507.5,306.3 1510.8,308.0 1515.1,309.6 1520.3,308.1" fill="none" stroke="#5e6a40" stroke-width="0.6" opacity="0.6"/><polyline points="1372.2,704.7 1374.8,704.4 1381.0,706.4 1385.2,705.2 1390.1,704.8 1393.2,701.8 1395.7,697.2" fill="none" stroke="#6b6a48" stroke-width="0.5" opacity="0.6"/><polyline points="1364.3,497.8 1363.6,501.6 1366.7,507.2 1368.5,509.0 1372.8,513.0" fill="none" stroke="#7d7550" stroke-width="0.6" opacity="0.6"/><polyline points="1300.1,325.8 1300.4,321.7 1300.8,318.8 1303.7,315.4 1305.6,313.2 1307.8,310.6 1310.6,310.4" fill="none" stroke="#8a7a58" stroke-width="0.5" opacity="0.6"/><polyline points="1155.4,394.2 1150.5,399.1 1145.2,401.6 1141.9,406.1" fill="none" stroke="#7d7550" stroke-width="0.6" opacity="0.6"/><polyline points="1417.4,655.1 1415.0,652.5 1410.2,652.0 1405.0,651.4 1401.5,649.4 1398.5,644.5 1395.6,642.4" fill="none" stroke="#5e6a40" stroke-width="0.6" opacity="0.6"/><polyline points="1507.7,662.3 1504.4,662.1 1500.9,664.6 1499.5,667.9 1494.4,670.6 1489.4,675.1 1484.5,675.8 1481.6,675.5" fill="none" stroke="#8a7a58" stroke-width="0.4" opacity="0.6"/><polyline points="1267.6,530.6 1273.1,527.3 1274.2,523.9 1275.0,519.6 1276.9,517.2 1276.7,514.4 1274.6,510.0 1272.0,508.4" fill="none" stroke="#6b6a48" stroke-width="0.5" opacity="0.6"/><polyline points="1342.0,396.7 1339.0,397.8 1336.2,397.6 1330.5,393.7 1327.6,389.3 1324.2,386.7" fill="none" stroke="#8a7a58" stroke-width="0.6" opacity="0.6"/><polyline points="1386.6,428.0 1383.6,427.4 1379.8,429.8 1373.1,428.7 1370.0,427.0 1366.6,426.1 1360.8,425.0 1356.7,427.6 1353.9,432.1" fill="none" stroke="#5e6a40" stroke-width="0.5" opacity="0.6"/><polyline points="1277.0,671.0 1282.3,668.0 1286.9,669.0 1291.5,670.2 1295.9,669.2 1298.7,667.2" fill="none" stroke="#7d7550" stroke-width="0.6" opacity="0.6"/><polyline points="1523.6,365.6 1528.4,369.3 1532.4,371.2 1539.1,369.9 1543.6,369.0" fill="none" stroke="#7d7550" stroke-width="0.5" opacity="0.6"/><polyline points="1415.5,513.9 1410.8,511.2 1404.0,512.4 1401.6,511.4" fill="none" stroke="#5e6a40" stroke-width="0.5" opacity="0.6"/><polyline points="1451.9,330.3 1452.6,326.4 1455.7,324.2 1461.6,322.7 1463.9,318.7 1465.5,312.7 1463.3,307.6 1458.4,305.6" fill="none" stroke="#5e6a40" stroke-width="0.4" opacity="0.6"/><polyline points="1539.1,706.7 1542.9,705.0 1547.5,704.4 1550.5,701.7 1553.7,698.9 1557.0,695.8 1559.4,692.1 1559.2,686.3 1557.8,681.8" fill="none" stroke="#8a7a58" stroke-width="0.4" opacity="0.6"/><polyline points="1466.3,593.0 1465.9,588.7 1463.5,582.3 1464.5,579.0 1467.6,576.4 1468.5,570.4" fill="none" stroke="#9a8868" stroke-width="0.4" opacity="0.6"/><polyline points="1541.0,487.0 1543.8,491.6 1542.5,497.5 1542.1,500.9 1542.1,503.9 1543.9,507.3 1545.3,509.5" fill="none" stroke="#5e6a40" stroke-width="0.5" opacity="0.6"/><polyline points="1376.4,523.1 1372.0,524.5 1367.8,526.5 1361.8,530.0 1356.9,532.5 1352.3,532.6 1346.8,531.7 1344.4,530.6 1341.6,526.2" fill="none" stroke="#6b6a48" stroke-width="0.6" opacity="0.6"/><polyline points="1384.8,599.4 1381.6,602.9 1381.2,606.0 1382.4,610.1 1383.9,616.7 1386.1,619.2 1388.3,622.0 1393.0,622.5" fill="none" stroke="#5e6a40" stroke-width="0.4" opacity="0.6"/><polyline points="1414.4,516.8 1419.2,520.7 1424.2,521.0 1426.6,519.8 1433.1,520.8 1436.2,519.3 1442.3,518.9" fill="none" stroke="#8a7a58" stroke-width="0.5" opacity="0.6"/><polyline points="1283.2,413.4 1283.3,406.5 1281.0,400.1 1278.6,397.6 1276.1,394.9 1273.5,393.8 1270.9,388.5 1272.1,384.1 1276.4,380.1" fill="none" stroke="#9a8868" stroke-width="0.4" opacity="0.6"/><polyline points="1451.7,531.4 1451.0,527.5 1447.8,524.5 1444.3,520.9 1440.2,516.4 1434.5,513.9" fill="none" stroke="#9a8868" stroke-width="0.4" opacity="0.6"/><polyline points="1389.9,575.7 1394.6,571.4 1397.6,567.9 1399.3,562.3 1399.0,558.4" fill="none" stroke="#5e6a40" stroke-width="0.6" opacity="0.6"/><polyline points="1127.5,640.1 1132.6,644.2 1134.0,648.0 1136.7,653.0 1138.7,658.6" fill="none" stroke="#8a7a58" stroke-width="0.5" opacity="0.6"/><polyline points="1143.5,592.0 1148.3,596.5 1148.5,599.4 1149.2,605.6 1154.1,610.6 1157.1,615.0 1161.4,619.8 1166.8,623.4 1173.1,624.1" fill="none" stroke="#7d7550" stroke-width="0.4" opacity="0.6"/><polyline points="1228.0,443.4 1225.6,446.0 1224.0,450.5 1225.0,454.8" fill="none" stroke="#5e6a40" stroke-width="0.6" opacity="0.6"/><polyline points="1475.2,628.9 1479.3,631.6 1481.4,634.3 1481.8,639.1" fill="none" stroke="#6b6a48" stroke-width="0.4" opacity="0.6"/><polyline points="1269.3,691.0 1272.4,697.3 1277.5,699.9 1281.5,700.7" fill="none" stroke="#5e6a40" stroke-width="0.6" opacity="0.6"/><polyline points="1441.8,558.4 1439.9,561.0 1440.4,566.7 1444.2,571.8" fill="none" stroke="#5e6a40" stroke-width="0.5" opacity="0.6"/><polyline points="1353.2,423.6 1349.9,424.1 1344.7,428.7 1344.5,431.2 1345.9,434.7 1346.3,438.9" fill="none" stroke="#9a8868" stroke-width="0.4" opacity="0.6"/><polyline points="1256.1,496.3 1258.1,493.8 1260.4,491.1 1262.0,488.0 1265.4,486.0" fill="none" stroke="#5e6a40" stroke-width="0.6" opacity="0.6"/><polyline points="1523.8,535.0 1521.3,537.5 1520.8,541.1 1518.4,546.5 1516.7,551.1 1513.7,555.8" fill="none" stroke="#5e6a40" stroke-width="0.6" opacity="0.6"/><polyline points="1284.2,521.5 1278.3,520.2 1273.1,522.3 1267.3,526.2 1262.7,528.0" fill="none" stroke="#7d7550" stroke-width="0.6" opacity="0.6"/><polyline points="1274.0,437.4 1267.8,440.0 1264.9,440.7 1262.7,443.6" fill="none" stroke="#7d7550" stroke-width="0.5" opacity="0.6"/><polyline points="1177.4,493.1 1173.6,497.2 1173.2,503.8 1171.3,506.0 1165.1,508.2 1158.5,506.9" fill="none" stroke="#8a7a58" stroke-width="0.6" opacity="0.6"/><polyline points="1407.6,623.8 1408.9,619.0 1410.2,616.5 1412.4,613.3 1412.4,610.6 1409.5,605.9 1410.8,601.0 1412.6,596.3" fill="none" stroke="#5e6a40" stroke-width="0.5" opacity="0.6"/><polyline points="1445.3,666.2 1442.3,666.7 1437.5,665.4 1432.8,662.5 1426.3,661.6" fill="none" stroke="#9a8868" stroke-width="0.6" opacity="0.6"/><polyline points="1281.3,356.4 1283.4,360.3 1286.5,363.9 1287.8,367.0" fill="none" stroke="#8a7a58" stroke-width="0.4" opacity="0.6"/><polyline points="1342.2,359.6 1343.0,363.7 1342.5,367.2 1341.2,370.7 1340.2,374.2" fill="none" stroke="#6b6a48" stroke-width="0.4" opacity="0.6"/><polyline points="1571.2,416.8 1575.9,414.6 1579.9,415.7 1586.5,416.9 1592.6,414.6 1596.8,416.2 1600.2,417.6 1603.0,423.5" fill="none" stroke="#5e6a40" stroke-width="0.6" opacity="0.6"/><polyline points="1367.1,511.9 1369.2,516.5 1375.2,520.0 1381.7,521.6 1384.6,522.3 1388.3,523.3 1394.8,523.0 1399.0,525.9" fill="none" stroke="#8a7a58" stroke-width="0.6" opacity="0.6"/><polyline points="1519.3,517.3 1525.8,517.9 1529.5,515.2 1530.8,511.5" fill="none" stroke="#6b6a48" stroke-width="0.5" opacity="0.6"/><polyline points="1512.6,495.3 1508.1,490.8 1505.1,490.7 1500.0,490.7" fill="none" stroke="#7d7550" stroke-width="0.5" opacity="0.6"/><polyline points="1424.9,601.3 1420.0,600.6 1414.3,602.2 1411.3,603.7 1408.8,609.1" fill="none" stroke="#8a7a58" stroke-width="0.6" opacity="0.6"/><polyline points="1555.7,316.1 1559.1,317.5 1564.9,320.0 1569.3,320.2 1572.1,319.0 1574.0,315.4 1578.5,313.0 1581.1,313.1" fill="none" stroke="#9a8868" stroke-width="0.5" opacity="0.6"/><polyline points="1422.0,348.9 1425.7,347.2 1429.3,344.1 1432.5,341.3 1434.2,336.4 1435.9,331.9 1435.0,326.2" fill="none" stroke="#9a8868" stroke-width="0.4" opacity="0.6"/><polyline points="1525.8,406.3 1525.5,409.1 1525.4,413.1 1524.2,415.4 1524.1,419.3 1526.7,423.3 1526.5,430.0 1526.0,432.5 1524.8,435.4" fill="none" stroke="#9a8868" stroke-width="0.6" opacity="0.6"/><polyline points="1428.0,456.8 1422.9,453.9 1419.1,452.8 1413.9,450.9 1411.7,449.6 1409.0,444.9 1409.4,439.4 1410.6,435.9" fill="none" stroke="#8a7a58" stroke-width="0.4" opacity="0.6"/><polyline points="1262.1,676.6 1261.2,679.7 1264.0,685.6 1266.5,691.3 1266.4,693.8 1269.0,698.4 1268.0,704.3" fill="none" stroke="#7d7550" stroke-width="0.6" opacity="0.6"/><polyline points="1327.6,489.3 1330.1,492.3 1331.4,497.5 1335.6,501.3 1338.7,502.5 1341.2,503.4 1342.8,505.5 1341.9,512.4 1338.4,516.2" fill="none" stroke="#8a7a58" stroke-width="0.4" opacity="0.6"/><polyline points="1159.9,316.3 1163.0,310.9 1164.1,308.4 1165.1,302.2 1168.6,299.7 1169.6,293.3 1170.9,291.0 1172.8,287.3" fill="none" stroke="#7d7550" stroke-width="0.6" opacity="0.6"/><polyline points="1540.4,684.8 1539.0,687.7 1536.2,691.8 1532.0,694.1 1527.7,698.2 1525.5,701.1 1522.9,703.7 1521.3,709.2" fill="none" stroke="#5e6a40" stroke-width="0.4" opacity="0.6"/><polyline points="1252.3,533.9 1255.9,533.3 1259.5,535.0 1263.4,537.2 1268.2,540.2 1270.4,543.7 1272.1,549.9 1273.3,554.4" fill="none" stroke="#5e6a40" stroke-width="0.5" opacity="0.6"/><polyline points="1202.9,555.8 1201.7,561.1 1203.4,566.7 1201.7,572.6 1203.6,579.3 1202.3,582.1" fill="none" stroke="#8a7a58" stroke-width="0.5" opacity="0.6"/><polyline points="1324.5,348.0 1321.7,346.1 1319.1,344.6 1313.0,343.9 1308.7,341.9 1307.3,339.2 1303.2,335.4 1298.8,334.7" fill="none" stroke="#5e6a40" stroke-width="0.5" opacity="0.6"/><polyline points="1199.5,423.9 1200.5,426.3 1199.6,432.1 1198.8,434.5 1197.8,438.5 1200.2,442.6 1200.6,446.4 1196.6,451.9" fill="none" stroke="#9a8868" stroke-width="0.5" opacity="0.6"/><polyline points="1544.0,522.6 1539.6,518.0 1535.7,514.8 1531.2,512.3 1530.1,508.9" fill="none" stroke="#9a8868" stroke-width="0.6" opacity="0.6"/><polyline points="1126.1,678.7 1129.4,680.4 1135.3,678.5 1141.9,678.2 1144.3,677.5 1146.6,678.7 1149.2,679.5" fill="none" stroke="#7d7550" stroke-width="0.5" opacity="0.6"/><polyline points="1532.0,511.7 1530.4,505.4 1528.8,501.2 1529.6,497.7 1531.7,492.8 1536.1,491.1 1539.3,485.6 1543.0,484.5 1547.3,485.7" fill="none" stroke="#8a7a58" stroke-width="0.4" opacity="0.6"/><polyline points="1336.9,480.8 1343.4,482.0 1346.0,481.0 1349.4,478.8 1351.5,476.3 1355.1,471.1" fill="none" stroke="#6b6a48" stroke-width="0.6" opacity="0.6"/><polyline points="1336.7,687.8 1337.6,683.1 1336.4,678.7 1337.5,675.2" fill="none" stroke="#8a7a58" stroke-width="0.4" opacity="0.6"/><polyline points="1487.8,434.2 1493.7,431.0 1499.6,427.4 1500.9,423.0 1498.6,416.5 1499.5,413.6 1499.9,406.7 1500.8,402.5" fill="none" stroke="#9a8868" stroke-width="0.4" opacity="0.6"/><polyline points="1332.8,650.1 1338.0,653.1 1341.7,652.3 1344.0,649.2 1346.5,648.1 1349.3,647.8 1353.1,643.8 1355.1,641.0" fill="none" stroke="#5e6a40" stroke-width="0.6" opacity="0.6"/><polyline points="1502.7,337.9 1505.7,337.9 1510.1,333.8 1511.8,330.3" fill="none" stroke="#6b6a48" stroke-width="0.5" opacity="0.6"/><polyline points="1374.0,583.4 1378.9,586.3 1382.4,586.0 1384.9,586.0" fill="none" stroke="#5e6a40" stroke-width="0.4" opacity="0.6"/><polyline points="1529.1,390.9 1526.9,384.7 1528.3,380.1 1530.7,377.0 1536.2,373.7 1539.3,374.1 1543.1,376.5" fill="none" stroke="#7d7550" stroke-width="0.6" opacity="0.6"/><polyline points="1464.0,701.5 1464.6,696.8 1462.5,693.6 1462.6,689.4 1462.6,686.7 1462.2,680.3 1464.7,676.5 1471.5,675.1" fill="none" stroke="#6b6a48" stroke-width="0.5" opacity="0.6"/><polyline points="1231.8,554.4 1228.7,557.6 1228.1,564.3 1226.7,567.5 1223.4,571.9" fill="none" stroke="#5e6a40" stroke-width="0.5" opacity="0.6"/><polyline points="1504.6,582.7 1504.8,579.2 1505.2,576.0 1506.7,573.5 1513.1,571.9 1519.0,569.0 1523.5,566.4 1526.1,566.7 1529.2,564.3" fill="none" stroke="#9a8868" stroke-width="0.6" opacity="0.6"/><polyline points="1453.0,393.8 1456.2,395.2 1460.3,396.2 1465.9,392.9" fill="none" stroke="#5e6a40" stroke-width="0.5" opacity="0.6"/><polyline points="1470.6,330.7 1464.0,332.7 1461.6,333.8 1459.1,338.9 1456.7,343.5 1453.1,344.8 1450.2,348.1 1443.8,349.0" fill="none" stroke="#9a8868" stroke-width="0.6" opacity="0.6"/><polyline points="1399.8,510.9 1402.5,505.5 1406.0,500.2 1406.9,494.2 1409.8,488.5 1411.9,485.2 1414.0,479.9 1414.3,473.0" fill="none" stroke="#6b6a48" stroke-width="0.5" opacity="0.6"/><polyline points="1309.6,517.7 1306.5,512.0 1307.4,507.9 1307.3,505.0 1308.4,500.7 1308.6,497.3" fill="none" stroke="#6b6a48" stroke-width="0.4" opacity="0.6"/><polyline points="1538.5,368.0 1536.7,370.5 1533.3,373.4 1527.1,374.9 1523.0,374.9 1520.1,377.3" fill="none" stroke="#7d7550" stroke-width="0.5" opacity="0.6"/><polyline points="1178.5,478.6 1174.4,479.2 1167.5,480.3 1163.3,479.3 1157.6,479.8" fill="none" stroke="#6b6a48" stroke-width="0.4" opacity="0.6"/><polyline points="1536.5,343.1 1539.6,342.1 1543.1,343.7 1548.8,342.8" fill="none" stroke="#5e6a40" stroke-width="0.5" opacity="0.6"/><polyline points="1506.1,410.6 1507.6,407.7 1507.7,400.9 1509.9,396.8 1512.6,396.2" fill="none" stroke="#6b6a48" stroke-width="0.4" opacity="0.6"/><polyline points="1200.6,633.5 1203.2,630.8 1208.5,628.4 1212.3,627.5 1219.2,627.7 1224.4,631.8" fill="none" stroke="#6b6a48" stroke-width="0.6" opacity="0.6"/><polyline points="1447.5,320.5 1442.1,320.9 1437.1,320.4 1432.7,318.8 1426.1,317.3 1420.8,317.2" fill="none" stroke="#6b6a48" stroke-width="0.5" opacity="0.6"/><polyline points="1556.5,374.1 1553.5,377.7 1554.0,384.2 1553.8,389.6 1551.1,392.4 1547.0,397.8 1541.1,399.4 1535.8,403.2" fill="none" stroke="#6b6a48" stroke-width="0.4" opacity="0.6"/><polyline points="1241.7,633.8 1240.9,629.8 1236.5,625.2 1230.5,623.4 1226.8,623.1" fill="none" stroke="#5e6a40" stroke-width="0.4" opacity="0.6"/><polyline points="1138.3,606.7 1142.2,606.1 1149.1,605.6 1152.9,608.4 1155.6,608.2" fill="none" stroke="#6b6a48" stroke-width="0.6" opacity="0.6"/><polyline points="1554.5,500.5 1551.7,504.5 1551.9,507.7 1549.5,514.3 1550.8,517.2 1550.6,523.5 1552.7,527.1 1554.6,531.8 1557.2,536.3" fill="none" stroke="#7d7550" stroke-width="0.5" opacity="0.6"/><polyline points="1183.5,546.0 1185.0,552.1 1190.4,555.9 1192.6,560.0 1195.8,564.9" fill="none" stroke="#9a8868" stroke-width="0.6" opacity="0.6"/><polyline points="1141.7,493.8 1140.5,496.2 1138.4,497.6 1137.3,501.5 1131.6,505.4 1125.8,505.2 1121.0,505.7" fill="none" stroke="#6b6a48" stroke-width="0.4" opacity="0.6"/><polyline points="1159.7,365.9 1162.7,366.7 1167.5,368.6 1172.2,372.7" fill="none" stroke="#6b6a48" stroke-width="0.6" opacity="0.6"/><polyline points="1295.4,411.6 1293.0,414.2 1288.6,415.8 1282.0,417.0 1279.4,420.0 1277.6,423.4 1278.7,427.4 1277.8,434.3" fill="none" stroke="#9a8868" stroke-width="0.4" opacity="0.6"/><polyline points="1207.8,337.0 1203.3,337.8 1197.7,340.1 1191.8,339.6 1189.6,338.2 1185.6,333.3 1183.4,331.8" fill="none" stroke="#7d7550" stroke-width="0.4" opacity="0.6"/><polyline points="1127.8,536.8 1125.5,539.8 1120.6,543.3 1119.2,548.4 1121.0,553.9 1123.5,560.0 1126.7,564.8 1128.7,570.9 1127.9,576.5" fill="none" stroke="#9a8868" stroke-width="0.6" opacity="0.6"/><polyline points="1145.1,344.0 1147.0,349.4 1149.5,352.3 1154.9,353.4" fill="none" stroke="#5e6a40" stroke-width="0.6" opacity="0.6"/><polyline points="1562.5,324.9 1558.7,321.0 1556.6,318.7 1551.3,316.9" fill="none" stroke="#6b6a48" stroke-width="0.5" opacity="0.6"/><polyline points="1374.1,566.6 1376.7,566.4 1383.1,563.7 1388.6,559.6 1391.8,558.7 1396.6,554.8 1400.1,553.5" fill="none" stroke="#9a8868" stroke-width="0.5" opacity="0.6"/><polyline points="1435.9,579.4 1440.9,577.2 1445.4,576.2 1449.6,577.7 1452.4,582.8 1453.0,585.5 1453.4,590.1" fill="none" stroke="#7d7550" stroke-width="0.4" opacity="0.6"/><polyline points="1338.3,465.4 1340.0,468.5 1341.8,470.7 1345.1,476.0 1344.6,481.3" fill="none" stroke="#7d7550" stroke-width="0.4" opacity="0.6"/><polyline points="1531.8,547.9 1533.8,545.2 1535.6,540.2 1537.8,536.7 1539.6,534.3" fill="none" stroke="#6b6a48" stroke-width="0.4" opacity="0.6"/><polyline points="1426.6,400.2 1429.8,394.5 1428.8,389.1 1428.6,386.6" fill="none" stroke="#8a7a58" stroke-width="0.4" opacity="0.6"/><polyline points="1562.7,604.5 1562.5,610.8 1565.4,613.9 1569.8,615.9 1575.5,617.0 1578.7,617.1" fill="none" stroke="#5e6a40" stroke-width="0.5" opacity="0.6"/><polyline points="1407.8,550.3 1403.5,550.6 1399.6,553.8 1399.2,557.0 1396.3,561.2 1392.9,566.8 1393.2,570.5 1395.7,575.8" fill="none" stroke="#5e6a40" stroke-width="0.4" opacity="0.6"/><polyline points="1135.3,444.8 1140.0,442.8 1143.4,443.2 1146.9,442.2" fill="none" stroke="#8a7a58" stroke-width="0.5" opacity="0.6"/><polyline points="1202.3,369.3 1202.0,375.0 1200.9,380.3 1202.0,385.2 1202.4,389.0 1203.0,395.8" fill="none" stroke="#8a7a58" stroke-width="0.6" opacity="0.6"/><polyline points="1256.3,364.1 1250.9,365.5 1248.9,369.0 1249.3,373.5 1251.3,376.6 1250.8,381.0" fill="none" stroke="#6b6a48" stroke-width="0.5" opacity="0.6"/><polyline points="1258.9,476.5 1263.0,478.1 1268.7,477.3 1274.6,478.3 1279.7,479.4 1282.6,482.7 1282.6,486.6 1283.4,493.0 1286.6,496.2" fill="none" stroke="#7d7550" stroke-width="0.6" opacity="0.6"/><polyline points="1342.9,381.1 1339.4,379.2 1333.6,378.7 1328.8,382.2 1326.2,386.0 1320.7,388.7 1317.4,388.7 1312.1,392.3 1308.8,394.1" fill="none" stroke="#5e6a40" stroke-width="0.6" opacity="0.6"/><polyline points="1294.7,648.5 1295.9,642.2 1296.9,635.5 1296.3,631.6 1300.1,626.2 1301.3,624.0 1299.7,618.0" fill="none" stroke="#6b6a48" stroke-width="0.5" opacity="0.6"/><polyline points="1125.1,677.6 1121.5,674.4 1117.3,672.1 1115.0,667.5" fill="none" stroke="#6b6a48" stroke-width="0.5" opacity="0.6"/><polyline points="1285.9,451.3 1288.5,454.0 1292.0,454.6 1296.9,457.5 1301.5,460.3 1306.2,461.7 1311.1,459.5 1315.0,456.3 1319.9,453.0" fill="none" stroke="#5e6a40" stroke-width="0.4" opacity="0.6"/><polyline points="1468.4,598.3 1466.9,600.7 1465.5,606.0 1461.5,609.6 1459.6,615.8 1460.8,619.8 1461.4,625.3" fill="none" stroke="#8a7a58" stroke-width="0.4" opacity="0.6"/><polyline points="1399.6,696.9 1397.8,701.5 1396.0,705.6 1390.1,708.9 1383.8,711.3" fill="none" stroke="#8a7a58" stroke-width="0.5" opacity="0.6"/><polyline points="1274.8,703.2 1275.9,706.9 1276.3,713.3 1278.9,715.6 1282.2,715.5 1285.8,715.5 1290.3,712.3 1292.8,705.9 1298.2,702.1" fill="none" stroke="#9a8868" stroke-width="0.6" opacity="0.6"/><polyline points="1241.6,317.4 1244.2,321.7 1246.2,327.1 1246.1,332.8" fill="none" stroke="#9a8868" stroke-width="0.4" opacity="0.6"/><polyline points="1457.3,435.6 1459.6,441.2 1459.1,444.9 1460.9,447.9 1461.5,453.8 1464.0,456.9 1467.4,460.2 1469.7,461.5" fill="none" stroke="#5e6a40" stroke-width="0.5" opacity="0.6"/><polyline points="1366.1,678.9 1369.7,679.0 1374.1,683.3 1379.2,685.7 1383.9,688.0 1386.5,691.9 1388.5,693.4" fill="none" stroke="#9a8868" stroke-width="0.4" opacity="0.6"/><polyline points="1458.9,374.9 1461.2,373.1 1466.1,370.2 1469.7,369.7 1472.6,371.1 1476.1,373.2" fill="none" stroke="#7d7550" stroke-width="0.5" opacity="0.6"/><polyline points="1280.6,625.5 1283.8,619.3 1285.9,615.2 1287.7,613.1 1290.3,610.1" fill="none" stroke="#8a7a58" stroke-width="0.4" opacity="0.6"/><polyline points="1273.1,631.8 1275.9,630.1 1279.8,625.3 1283.7,623.4" fill="none" stroke="#7d7550" stroke-width="0.6" opacity="0.6"/><polyline points="1394.0,537.7 1397.4,536.3 1401.5,530.9 1401.6,527.2 1401.9,524.5 1406.0,520.7 1410.5,519.9 1413.0,520.1 1418.2,523.8" fill="none" stroke="#5e6a40" stroke-width="0.5" opacity="0.6"/><polyline points="1417.8,401.0 1415.8,404.9 1413.8,407.8 1409.3,409.8 1404.2,409.9 1397.9,410.5 1392.3,413.1" fill="none" stroke="#5e6a40" stroke-width="0.4" opacity="0.6"/><polyline points="1123.3,650.5 1127.3,655.9 1129.0,660.8 1130.0,663.7 1129.0,670.3 1126.8,674.5 1122.8,677.7 1120.5,680.9" fill="none" stroke="#7d7550" stroke-width="0.6" opacity="0.6"/><polyline points="1251.9,451.2 1247.8,445.9 1248.1,442.2 1246.8,436.2 1244.8,433.6 1239.2,431.8" fill="none" stroke="#7d7550" stroke-width="0.4" opacity="0.6"/><polyline points="1281.8,651.3 1277.1,649.5 1270.8,647.1 1267.2,646.0 1263.3,642.3" fill="none" stroke="#7d7550" stroke-width="0.6" opacity="0.6"/><polyline points="1517.2,334.5 1523.3,334.8 1528.5,334.5 1532.6,332.3 1537.3,331.8 1542.0,326.9" fill="none" stroke="#5e6a40" stroke-width="0.6" opacity="0.6"/><polyline points="1271.6,561.5 1272.9,559.3 1275.0,553.2 1278.0,549.8 1282.1,547.1 1282.7,544.6 1284.0,540.7 1283.2,535.4" fill="none" stroke="#7d7550" stroke-width="0.5" opacity="0.6"/><polyline points="1380.5,388.2 1377.9,391.3 1376.2,397.8 1377.8,403.4 1378.7,407.0 1380.6,409.5 1383.0,413.8" fill="none" stroke="#6b6a48" stroke-width="0.6" opacity="0.6"/><polyline points="1390.0,487.7 1395.4,488.0 1398.5,487.8 1405.3,488.8" fill="none" stroke="#6b6a48" stroke-width="0.4" opacity="0.6"/><polyline points="1396.3,623.1 1401.6,624.8 1404.6,630.0 1407.0,632.4" fill="none" stroke="#7d7550" stroke-width="0.5" opacity="0.6"/><polyline points="1177.3,695.5 1177.6,690.7 1178.6,685.7 1182.3,681.0 1182.6,674.5 1182.6,668.5 1180.7,664.8 1177.1,658.8" fill="none" stroke="#8a7a58" stroke-width="0.6" opacity="0.6"/><polyline points="1508.3,660.8 1513.6,661.7 1517.2,664.0 1521.2,663.2 1524.8,661.0 1527.5,657.9 1530.1,657.3 1534.5,654.8" fill="none" stroke="#8a7a58" stroke-width="0.5" opacity="0.6"/><polyline points="1417.0,610.4 1417.6,616.0 1420.6,621.8 1422.6,627.5 1428.8,630.5 1433.2,632.8 1440.1,631.9 1443.2,630.5 1445.8,631.2" fill="none" stroke="#5e6a40" stroke-width="0.5" opacity="0.6"/><polyline points="1467.4,447.7 1465.1,452.3 1466.0,459.0 1465.3,462.7 1466.5,466.7 1467.5,469.9 1469.7,474.2 1470.8,480.3 1470.0,485.7" fill="none" stroke="#8a7a58" stroke-width="0.6" opacity="0.6"/><polyline points="1435.0,587.0 1440.2,591.1 1445.9,592.7 1451.6,596.3 1453.7,600.9 1460.1,603.3 1463.2,607.9 1465.2,609.6" fill="none" stroke="#9a8868" stroke-width="0.6" opacity="0.6"/><polyline points="1541.0,394.8 1544.8,398.5 1548.5,400.3 1550.9,402.8 1551.0,407.1 1551.9,411.9" fill="none" stroke="#9a8868" stroke-width="0.6" opacity="0.6"/><polyline points="1334.6,625.9 1339.6,621.3 1341.2,617.1 1344.0,614.5 1350.2,611.4" fill="none" stroke="#5e6a40" stroke-width="0.4" opacity="0.6"/><polyline points="1510.3,568.3 1510.4,564.3 1509.7,558.6 1511.6,555.9 1514.2,550.6 1515.0,544.4 1515.6,539.5 1515.4,534.0" fill="none" stroke="#8a7a58" stroke-width="0.4" opacity="0.6"/><polyline points="1349.5,699.0 1343.3,700.4 1338.9,700.6 1333.6,701.6 1328.5,698.9 1327.5,696.2 1326.9,693.8 1326.0,688.8" fill="none" stroke="#6b6a48" stroke-width="0.4" opacity="0.6"/><polyline points="1536.3,654.8 1536.3,658.4 1533.9,662.1 1530.8,665.0 1528.5,670.0 1525.6,672.7 1519.8,674.8 1516.6,675.0" fill="none" stroke="#7d7550" stroke-width="0.5" opacity="0.6"/><polyline points="1530.0,435.6 1530.3,439.9 1528.7,445.1 1523.9,447.9 1522.5,452.2 1525.2,457.8 1525.3,460.8" fill="none" stroke="#5e6a40" stroke-width="0.6" opacity="0.6"/><polyline points="1477.7,453.6 1476.1,451.0 1473.2,446.8 1471.5,443.2" fill="none" stroke="#7d7550" stroke-width="0.4" opacity="0.6"/><polyline points="1569.7,573.6 1563.9,572.4 1561.1,572.9 1556.6,570.9" fill="none" stroke="#9a8868" stroke-width="0.4" opacity="0.6"/><polyline points="1285.9,567.9 1284.5,573.8 1283.9,579.2 1284.4,581.8 1286.7,585.4 1290.7,587.8" fill="none" stroke="#5e6a40" stroke-width="0.4" opacity="0.6"/><polyline points="1143.0,320.2 1138.4,320.8 1135.2,322.5 1133.4,327.1 1129.1,330.6 1124.6,333.1 1122.4,336.3 1120.3,342.1" fill="none" stroke="#6b6a48" stroke-width="0.4" opacity="0.6"/><polyline points="1159.5,531.7 1155.0,533.8 1151.3,534.2 1146.5,530.3 1141.1,529.4 1137.8,530.2 1132.0,527.6" fill="none" stroke="#7d7550" stroke-width="0.4" opacity="0.6"/><polyline points="1371.6,546.6 1370.3,549.7 1366.9,555.7 1366.1,559.4 1363.7,564.5" fill="none" stroke="#9a8868" stroke-width="0.6" opacity="0.6"/><polyline points="1436.2,490.7 1440.5,485.5 1441.2,479.7 1439.4,476.9 1436.4,473.0" fill="none" stroke="#6b6a48" stroke-width="0.6" opacity="0.6"/><polyline points="1476.0,565.8 1477.4,571.5 1480.5,573.7 1482.5,576.3 1482.8,580.8 1480.7,584.6 1475.5,586.2" fill="none" stroke="#5e6a40" stroke-width="0.6" opacity="0.6"/><polyline points="1268.1,399.3 1273.6,398.4 1280.3,397.7 1284.0,395.6 1288.1,396.0" fill="none" stroke="#5e6a40" stroke-width="0.4" opacity="0.6"/><polyline points="1451.2,420.2 1453.4,418.3 1457.2,417.7 1461.7,414.7 1463.4,408.2 1461.2,403.6 1461.9,400.5 1461.1,395.9" fill="none" stroke="#5e6a40" stroke-width="0.6" opacity="0.6"/><polyline points="1405.5,562.3 1405.2,558.3 1403.7,552.4 1403.3,549.1" fill="none" stroke="#5e6a40" stroke-width="0.4" opacity="0.6"/><polyline points="1434.2,431.6 1438.4,436.7 1438.2,439.7 1435.4,444.0" fill="none" stroke="#6b6a48" stroke-width="0.6" opacity="0.6"/><polyline points="1256.9,360.7 1258.9,363.5 1263.3,367.4 1266.9,370.8 1268.5,373.7" fill="none" stroke="#5e6a40" stroke-width="0.6" opacity="0.6"/><polyline points="1561.5,414.7 1562.9,417.0 1566.7,420.6 1570.7,420.7 1574.6,423.9 1578.4,424.9 1583.6,428.8 1589.8,428.5" fill="none" stroke="#5e6a40" stroke-width="0.4" opacity="0.6"/><polyline points="1456.1,445.8 1460.7,448.0 1463.2,450.2 1469.3,450.1 1475.9,450.9 1482.5,449.6 1485.9,446.8" fill="none" stroke="#9a8868" stroke-width="0.4" opacity="0.6"/><polyline points="1396.1,443.3 1392.9,440.9 1390.3,440.7 1386.8,439.8 1383.6,437.1 1381.2,433.1 1379.8,429.6 1377.2,427.5 1374.3,425.5" fill="none" stroke="#6b6a48" stroke-width="0.4" opacity="0.6"/><polyline points="1451.4,580.8 1456.3,584.5 1460.0,590.1 1461.6,593.9 1463.2,599.7 1465.1,603.5 1468.5,606.9 1470.2,611.1" fill="none" stroke="#7d7550" stroke-width="0.6" opacity="0.6"/><polyline points="1544.5,317.1 1544.9,312.9 1546.4,310.1 1545.1,303.3 1540.6,299.9 1539.7,297.2" fill="none" stroke="#6b6a48" stroke-width="0.4" opacity="0.6"/><polyline points="1497.3,381.0 1499.3,377.4 1499.1,371.2 1502.0,366.3 1505.9,365.0 1509.3,360.1 1511.8,356.9 1516.2,354.7" fill="none" stroke="#9a8868" stroke-width="0.6" opacity="0.6"/><polyline points="1539.3,532.4 1536.7,530.0 1530.8,529.4 1524.7,526.8" fill="none" stroke="#9a8868" stroke-width="0.6" opacity="0.6"/><polyline points="1471.8,409.5 1475.1,414.3 1480.2,418.0 1482.9,422.5" fill="none" stroke="#5e6a40" stroke-width="0.5" opacity="0.6"/><polyline points="1264.9,458.3 1262.0,459.7 1259.4,459.2 1254.9,459.0 1251.3,457.9 1245.6,455.4 1241.9,454.6 1240.1,452.0" fill="none" stroke="#7d7550" stroke-width="0.6" opacity="0.6"/><polyline points="1549.7,639.4 1547.2,640.5 1540.5,639.7 1535.5,636.8 1528.8,636.4 1523.8,635.3" fill="none" stroke="#7d7550" stroke-width="0.6" opacity="0.6"/><polyline points="1353.1,695.4 1347.6,697.1 1342.4,695.3 1336.7,696.4 1331.7,700.2" fill="none" stroke="#8a7a58" stroke-width="0.4" opacity="0.6"/><polyline points="1555.0,647.1 1552.5,641.1 1553.6,634.9 1557.2,630.0 1561.4,628.0 1565.4,629.2" fill="none" stroke="#7d7550" stroke-width="0.4" opacity="0.6"/><polyline points="1153.6,595.9 1149.1,592.1 1144.8,588.4 1139.6,584.5 1138.4,581.8 1138.7,576.8 1136.2,573.7 1135.6,569.2 1132.6,565.5" fill="none" stroke="#6b6a48" stroke-width="0.4" opacity="0.6"/><polyline points="1169.3,416.8 1172.6,419.2 1179.0,419.0 1181.8,419.1 1187.2,421.5 1191.0,425.5 1191.0,431.0" fill="none" stroke="#8a7a58" stroke-width="0.5" opacity="0.6"/><polyline points="1560.0,476.3 1553.4,475.1 1547.6,476.0 1542.4,474.1 1537.5,471.5 1534.5,468.3 1534.9,461.9 1534.3,456.5 1536.0,451.9" fill="none" stroke="#7d7550" stroke-width="0.5" opacity="0.6"/><polyline points="1141.6,366.7 1139.8,363.8 1139.8,360.3 1139.2,353.5 1138.3,350.1 1136.4,347.1 1136.6,343.2" fill="none" stroke="#6b6a48" stroke-width="0.6" opacity="0.6"/><polyline points="1134.3,613.6 1132.5,608.2 1131.9,603.7 1134.3,597.7 1136.1,593.2 1135.9,589.1 1132.0,584.6 1127.6,581.4" fill="none" stroke="#8a7a58" stroke-width="0.6" opacity="0.6"/><polyline points="1168.5,551.5 1167.8,555.2 1167.5,561.7 1166.8,566.6 1168.1,572.6 1167.2,576.4 1168.7,581.0" fill="none" stroke="#9a8868" stroke-width="0.5" opacity="0.6"/><polyline points="1562.4,552.2 1560.5,555.6 1557.4,560.5 1554.3,565.6 1550.7,568.1 1545.4,570.7 1540.9,574.6" fill="none" stroke="#7d7550" stroke-width="0.5" opacity="0.6"/><polyline points="1350.1,341.7 1349.8,336.1 1350.2,331.9 1353.5,326.5 1359.6,324.7 1364.8,324.1 1370.1,322.3" fill="none" stroke="#9a8868" stroke-width="0.5" opacity="0.6"/><polyline points="1339.2,547.3 1338.0,541.5 1337.0,539.1 1334.0,534.4" fill="none" stroke="#6b6a48" stroke-width="0.5" opacity="0.6"/><polyline points="1528.0,425.1 1523.3,422.9 1519.1,422.4 1515.8,425.0 1513.8,430.9 1515.1,436.0 1513.2,439.5 1510.0,441.9 1505.9,443.3" fill="none" stroke="#5e6a40" stroke-width="0.4" opacity="0.6"/><polyline points="1187.5,378.6 1188.0,382.7 1189.0,385.8 1187.2,392.3 1185.0,394.3 1182.0,394.9 1176.6,397.3" fill="none" stroke="#7d7550" stroke-width="0.4" opacity="0.6"/><polyline points="1192.0,406.6 1195.5,407.5 1199.9,409.9 1203.7,412.8 1207.9,416.8 1211.6,418.9 1215.5,421.4 1218.4,424.6 1221.5,428.1" fill="none" stroke="#7d7550" stroke-width="0.6" opacity="0.6"/><polyline points="1300.0,629.4 1299.8,622.8 1298.6,620.4 1299.3,613.9" fill="none" stroke="#9a8868" stroke-width="0.4" opacity="0.6"/><polyline points="1404.1,558.6 1406.6,552.3 1405.8,546.8 1403.8,540.7 1400.3,536.2" fill="none" stroke="#6b6a48" stroke-width="0.4" opacity="0.6"/><polyline points="1403.5,603.9 1405.4,602.3 1410.5,602.9 1414.6,600.5 1417.5,598.1" fill="none" stroke="#7d7550" stroke-width="0.6" opacity="0.6"/><polyline points="1534.7,577.6 1536.9,582.8 1540.5,586.2 1543.8,591.6" fill="none" stroke="#7d7550" stroke-width="0.4" opacity="0.6"/><polyline points="1539.4,675.8 1537.8,681.1 1533.7,683.8 1530.6,685.1" fill="none" stroke="#7d7550" stroke-width="0.4" opacity="0.6"/><polyline points="1260.1,693.8 1258.5,696.3 1252.6,698.9 1249.1,697.7 1246.6,692.8 1247.5,686.8 1247.9,684.3 1250.3,680.1 1253.6,676.9" fill="none" stroke="#8a7a58" stroke-width="0.6" opacity="0.6"/><polyline points="1138.1,478.5 1136.4,475.6 1130.7,472.7 1125.8,471.1 1120.1,473.8 1115.7,477.4 1114.5,483.0 1114.9,486.3" fill="none" stroke="#5e6a40" stroke-width="0.6" opacity="0.6"/><polyline points="1565.4,550.3 1568.4,551.5 1571.2,553.2 1577.3,555.8" fill="none" stroke="#6b6a48" stroke-width="0.5" opacity="0.6"/><polyline points="1499.7,342.4 1493.5,344.9 1487.9,342.9 1485.3,343.9 1481.1,342.8 1475.3,342.7 1471.4,342.0 1467.1,342.0" fill="none" stroke="#7d7550" stroke-width="0.6" opacity="0.6"/><polyline points="1326.6,495.1 1329.7,492.8 1334.3,492.8 1338.6,488.8 1343.4,486.1 1345.6,481.5 1344.8,478.7 1342.5,473.0 1342.6,468.5" fill="none" stroke="#9a8868" stroke-width="0.6" opacity="0.6"/><polyline points="1180.7,566.1 1180.4,563.5 1181.4,557.0 1179.6,552.8 1178.6,547.0 1176.1,543.7" fill="none" stroke="#5e6a40" stroke-width="0.4" opacity="0.6"/><polyline points="1559.8,379.3 1560.3,374.1 1560.2,371.2 1559.3,368.5" fill="none" stroke="#8a7a58" stroke-width="0.5" opacity="0.6"/><polyline points="1154.7,473.0 1155.9,470.7 1161.5,467.9 1165.5,462.4 1168.2,460.3 1173.7,459.7 1176.2,460.7 1179.5,466.4" fill="none" stroke="#7d7550" stroke-width="0.5" opacity="0.6"/><polyline points="1295.5,563.5 1294.5,568.2 1296.7,574.8 1302.1,578.0 1305.6,581.4 1308.3,582.7 1310.1,584.8 1313.0,585.1" fill="none" stroke="#6b6a48" stroke-width="0.6" opacity="0.6"/><polyline points="1336.5,572.8 1338.2,575.5 1342.1,579.1 1345.2,579.1 1347.9,582.0 1348.0,584.6" fill="none" stroke="#8a7a58" stroke-width="0.6" opacity="0.6"/><polyline points="1189.6,609.8 1191.5,613.6 1190.2,620.4 1188.1,622.2" fill="none" stroke="#6b6a48" stroke-width="0.4" opacity="0.6"/><polyline points="1281.4,587.2 1280.0,592.4 1281.1,598.8 1280.6,605.8 1278.2,608.1 1276.6,610.0" fill="none" stroke="#8a7a58" stroke-width="0.4" opacity="0.6"/><polyline points="1554.7,516.5 1552.3,518.5 1550.4,521.0 1547.6,523.1" fill="none" stroke="#7d7550" stroke-width="0.4" opacity="0.6"/><polyline points="1472.6,352.7 1470.8,350.3 1467.7,345.5 1465.4,341.8 1465.9,339.2 1466.9,336.7 1472.7,333.5 1477.2,333.7 1481.7,332.4" fill="none" stroke="#9a8868" stroke-width="0.6" opacity="0.6"/><polyline points="1302.2,456.1 1305.5,452.0 1307.5,449.0 1308.7,443.4 1309.0,439.7" fill="none" stroke="#6b6a48" stroke-width="0.5" opacity="0.6"/><polyline points="1277.4,541.7 1275.7,538.2 1273.0,533.7 1268.0,529.3" fill="none" stroke="#7d7550" stroke-width="0.6" opacity="0.6"/><polyline points="1252.6,331.4 1247.5,334.7 1244.1,335.9 1241.3,341.8 1239.7,346.5 1240.1,353.4" fill="none" stroke="#8a7a58" stroke-width="0.4" opacity="0.6"/><polyline points="1352.8,504.1 1351.6,506.8 1349.9,510.3 1348.0,512.3 1344.5,517.3 1341.1,518.2 1336.0,515.9" fill="none" stroke="#8a7a58" stroke-width="0.5" opacity="0.6"/><polyline points="1509.8,626.4 1504.9,627.8 1498.4,628.9 1495.8,630.1 1491.6,629.7" fill="none" stroke="#8a7a58" stroke-width="0.6" opacity="0.6"/><polyline points="1418.7,564.0 1416.7,570.6 1412.7,572.8 1408.8,572.1 1402.6,570.8 1400.2,569.3 1397.4,563.6" fill="none" stroke="#7d7550" stroke-width="0.4" opacity="0.6"/><polyline points="1134.7,338.3 1132.0,342.8 1132.5,348.1 1136.2,352.4 1139.4,356.6 1142.5,358.1 1145.8,358.1 1148.0,359.6" fill="none" stroke="#7d7550" stroke-width="0.6" opacity="0.6"/><polyline points="1159.7,371.1 1164.3,369.0 1169.5,368.2 1172.5,365.9 1176.5,365.2 1180.0,363.2 1184.1,363.2" fill="none" stroke="#6b6a48" stroke-width="0.5" opacity="0.6"/><polyline points="1392.1,583.1 1396.2,577.4 1401.5,575.4 1404.2,575.7 1407.0,575.2 1413.1,573.8 1417.3,570.2 1420.0,570.4" fill="none" stroke="#8a7a58" stroke-width="0.4" opacity="0.6"/><polyline points="1180.4,379.2 1175.8,381.9 1174.6,384.8 1173.3,388.9 1173.2,394.5 1174.7,397.7" fill="none" stroke="#5e6a40" stroke-width="0.6" opacity="0.6"/><polyline points="1334.1,415.8 1338.1,416.7 1340.6,416.7 1343.3,417.1 1347.8,420.3" fill="none" stroke="#8a7a58" stroke-width="0.6" opacity="0.6"/><polyline points="1427.2,599.3 1423.4,601.8 1418.1,604.5 1414.4,603.3 1412.0,601.5 1408.2,599.1 1403.6,597.5 1400.4,597.5" fill="none" stroke="#9a8868" stroke-width="0.4" opacity="0.6"/><polyline points="1304.4,655.0 1307.1,651.9 1308.4,648.1 1308.0,644.5 1303.0,639.7 1301.4,636.4 1301.6,631.9" fill="none" stroke="#9a8868" stroke-width="0.5" opacity="0.6"/><polyline points="1419.0,635.9 1423.6,640.8 1425.6,646.5 1424.1,649.8 1426.2,656.4 1425.4,659.2 1427.0,664.7" fill="none" stroke="#9a8868" stroke-width="0.6" opacity="0.6"/><polyline points="1345.4,350.1 1342.9,348.0 1339.8,344.4 1336.6,340.1 1335.9,335.9 1335.7,332.9" fill="none" stroke="#5e6a40" stroke-width="0.5" opacity="0.6"/><polyline points="1148.3,421.2 1152.8,422.3 1158.9,422.9 1164.7,419.1 1168.0,417.0 1170.9,414.1 1172.6,411.5 1172.9,407.0" fill="none" stroke="#5e6a40" stroke-width="0.4" opacity="0.6"/><polyline points="1164.2,567.6 1165.9,561.3 1166.7,555.8 1170.4,550.9" fill="none" stroke="#8a7a58" stroke-width="0.4" opacity="0.6"/><polyline points="1227.0,396.1 1227.6,402.6 1229.3,404.9 1231.8,407.3 1235.9,411.5" fill="none" stroke="#7d7550" stroke-width="0.6" opacity="0.6"/><polyline points="1176.9,663.2 1179.8,659.2 1183.2,653.7 1187.6,650.8 1194.0,651.7 1200.2,650.4 1205.7,652.9 1206.9,655.3" fill="none" stroke="#7d7550" stroke-width="0.6" opacity="0.6"/><polyline points="1457.4,667.6 1452.7,667.7 1448.5,668.3 1445.0,665.8 1441.6,664.4 1438.1,661.3 1436.7,658.0 1436.1,653.0 1434.9,648.4" fill="none" stroke="#6b6a48" stroke-width="0.4" opacity="0.6"/><polyline points="1525.1,641.1 1521.7,646.1 1521.6,652.9 1525.1,656.9 1526.9,662.4 1530.4,666.3 1533.8,667.7 1538.2,672.0 1544.0,674.0" fill="none" stroke="#9a8868" stroke-width="0.5" opacity="0.6"/><polyline points="1331.8,463.5 1329.7,460.9 1325.5,458.1 1322.4,458.7 1318.2,458.7 1315.0,455.5 1314.1,448.9 1313.7,444.5" fill="none" stroke="#6b6a48" stroke-width="0.6" opacity="0.6"/><polyline points="1468.7,636.8 1467.1,641.4 1468.3,644.4 1467.8,646.9 1467.9,653.3 1463.8,658.9" fill="none" stroke="#9a8868" stroke-width="0.6" opacity="0.6"/><polyline points="1471.4,504.6 1470.7,501.1 1468.8,498.7 1468.4,492.6 1470.7,487.4 1470.0,484.6 1470.3,479.3 1473.7,474.4" fill="none" stroke="#5e6a40" stroke-width="0.4" opacity="0.6"/><polyline points="1400.9,692.6 1405.3,694.2 1409.3,699.1 1413.4,700.1 1418.8,698.0 1424.1,694.3 1430.5,694.7 1434.5,691.2" fill="none" stroke="#8a7a58" stroke-width="0.5" opacity="0.6"/><polyline points="1315.9,603.2 1312.9,604.8 1309.2,606.5 1305.8,608.8 1303.1,608.5 1300.9,609.8 1298.5,614.5 1296.3,620.7" fill="none" stroke="#7d7550" stroke-width="0.5" opacity="0.6"/><polyline points="1376.5,682.5 1378.2,689.1 1376.9,693.3 1371.9,698.0 1369.7,701.4 1365.7,702.9 1363.7,706.3" fill="none" stroke="#7d7550" stroke-width="0.6" opacity="0.6"/><polyline points="1396.1,384.2 1400.6,386.5 1405.1,386.7 1407.5,387.5 1412.3,388.7 1414.9,392.8 1414.6,399.3 1411.7,403.1 1411.4,406.9" fill="none" stroke="#6b6a48" stroke-width="0.4" opacity="0.6"/><polyline points="1248.7,635.8 1248.2,632.4 1246.4,630.4 1243.9,627.6 1241.9,622.0 1239.8,619.1 1236.1,613.8 1236.2,608.0 1238.0,602.9" fill="none" stroke="#6b6a48" stroke-width="0.4" opacity="0.6"/><polyline points="1436.4,319.2 1441.1,318.4 1445.7,316.5 1450.8,313.0 1453.9,308.0" fill="none" stroke="#6b6a48" stroke-width="0.5" opacity="0.6"/><polyline points="1408.6,423.6 1404.0,424.6 1401.7,423.7 1395.5,425.9" fill="none" stroke="#9a8868" stroke-width="0.5" opacity="0.6"/><polyline points="1196.4,607.0 1190.9,607.4 1188.4,608.1 1186.7,610.0 1184.2,613.9" fill="none" stroke="#8a7a58" stroke-width="0.6" opacity="0.6"/><polyline points="1372.8,605.0 1369.7,609.8 1370.0,613.8 1370.7,616.8 1369.7,619.6 1371.7,626.0 1373.5,629.2 1379.8,631.8" fill="none" stroke="#6b6a48" stroke-width="0.4" opacity="0.6"/><polyline points="1447.2,499.0 1450.0,502.9 1454.9,507.1 1457.8,507.8 1461.9,513.3 1464.5,515.2 1467.6,516.9 1472.5,519.1 1477.3,520.7" fill="none" stroke="#8a7a58" stroke-width="0.4" opacity="0.6"/><polyline points="1436.7,474.9 1434.7,477.6 1434.5,481.0 1436.3,485.9 1437.1,490.5 1433.4,496.3 1430.5,498.7" fill="none" stroke="#5e6a40" stroke-width="0.4" opacity="0.6"/><polyline points="1283.1,709.2 1283.1,712.1 1281.7,716.0 1276.8,718.2 1272.3,718.8 1270.3,721.1" fill="none" stroke="#5e6a40" stroke-width="0.6" opacity="0.6"/><polyline points="1214.8,314.4 1216.1,309.8 1217.5,307.4 1222.5,302.8 1225.9,302.7 1228.0,300.9 1231.1,297.5" fill="none" stroke="#7d7550" stroke-width="0.6" opacity="0.6"/><polyline points="1505.3,400.8 1511.0,403.2 1514.3,403.4 1517.9,403.3 1522.3,406.5 1526.9,408.3 1528.5,411.9 1528.1,414.4" fill="none" stroke="#6b6a48" stroke-width="0.6" opacity="0.6"/><polyline points="1412.7,627.3 1406.5,627.1 1401.1,630.5 1399.4,632.8" fill="none" stroke="#8a7a58" stroke-width="0.6" opacity="0.6"/><polyline points="1194.9,318.2 1195.7,314.0 1194.5,310.8 1192.4,307.4 1190.2,306.0 1186.6,303.2 1181.6,298.5" fill="none" stroke="#5e6a40" stroke-width="0.5" opacity="0.6"/><polyline points="1337.6,445.3 1339.6,448.7 1339.1,454.2 1339.4,459.3 1337.7,461.6" fill="none" stroke="#9a8868" stroke-width="0.6" opacity="0.6"/><polyline points="1409.1,448.7 1406.6,447.6 1402.7,447.1 1399.0,445.4 1396.2,441.2 1392.2,440.1 1386.3,441.6" fill="none" stroke="#6b6a48" stroke-width="0.5" opacity="0.6"/><polyline points="1434.6,413.8 1435.1,410.2 1433.5,405.5 1430.4,402.0 1426.0,398.8" fill="none" stroke="#6b6a48" stroke-width="0.6" opacity="0.6"/><polyline points="1379.0,626.2 1382.0,620.3 1383.8,613.8 1385.1,609.9" fill="none" stroke="#7d7550" stroke-width="0.6" opacity="0.6"/><polyline points="1387.3,646.6 1383.4,645.8 1380.5,643.7 1378.2,637.3 1377.7,634.0" fill="none" stroke="#6b6a48" stroke-width="0.6" opacity="0.6"/><polyline points="1304.7,700.2 1302.1,701.0 1299.5,699.8 1293.0,700.9 1288.0,702.3 1283.3,700.0 1279.2,696.3 1276.5,691.5 1271.9,686.8" fill="none" stroke="#9a8868" stroke-width="0.6" opacity="0.6"/><polyline points="1350.1,522.6 1354.3,521.6 1359.6,520.4 1363.9,522.4 1369.9,523.6" fill="none" stroke="#6b6a48" stroke-width="0.5" opacity="0.6"/><polyline points="1146.1,590.4 1147.7,585.5 1148.0,581.8 1150.2,575.8 1151.4,569.1 1151.3,566.6" fill="none" stroke="#7d7550" stroke-width="0.5" opacity="0.6"/><polyline points="1432.1,552.0 1432.4,548.2 1431.8,545.1 1434.4,538.8 1436.5,534.9 1442.8,533.0" fill="none" stroke="#9a8868" stroke-width="0.6" opacity="0.6"/><polyline points="1396.6,389.7 1400.9,388.2 1405.5,385.4 1412.2,384.6 1417.9,385.2 1421.1,383.2 1423.0,377.9 1426.6,372.1 1428.8,368.5" fill="none" stroke="#9a8868" stroke-width="0.6" opacity="0.6"/><polyline points="1539.6,619.5 1533.3,617.4 1526.6,615.7 1523.8,616.3 1518.8,613.2" fill="none" stroke="#6b6a48" stroke-width="0.6" opacity="0.6"/><polyline points="1314.5,690.7 1311.3,694.7 1305.4,696.0 1300.8,697.7 1296.1,696.0" fill="none" stroke="#5e6a40" stroke-width="0.4" opacity="0.6"/><polyline points="1233.2,693.3 1239.0,692.5 1241.1,690.3 1245.6,688.9 1251.5,685.5 1254.0,682.9" fill="none" stroke="#9a8868" stroke-width="0.6" opacity="0.6"/><polyline points="1172.2,438.2 1178.2,440.4 1183.1,438.8 1190.1,439.1" fill="none" stroke="#7d7550" stroke-width="0.4" opacity="0.6"/><polyline points="1431.1,322.6 1434.0,324.3 1436.4,328.7 1439.4,330.5 1441.6,332.4 1448.1,334.0 1450.9,338.8 1450.2,345.0" fill="none" stroke="#7d7550" stroke-width="0.5" opacity="0.6"/><polyline points="1374.7,442.4 1378.0,447.5 1377.4,451.3 1380.3,455.9 1382.4,459.7 1385.8,460.8 1390.1,458.5 1392.9,459.3 1396.0,458.8" fill="none" stroke="#9a8868" stroke-width="0.4" opacity="0.6"/><polyline points="1568.4,666.5 1572.5,669.1 1577.3,670.0 1582.6,666.7 1585.9,663.7 1591.1,660.7 1597.1,661.9 1600.9,666.4 1602.0,671.0" fill="none" stroke="#7d7550" stroke-width="0.4" opacity="0.6"/><polyline points="1478.0,623.0 1483.0,626.8 1488.6,629.9 1491.4,631.4 1493.9,630.7 1497.7,630.9 1503.3,632.5 1507.2,637.5 1506.6,644.4" fill="none" stroke="#5e6a40" stroke-width="0.4" opacity="0.6"/><polyline points="1394.5,684.6 1400.0,681.2 1406.1,680.9 1409.8,681.1 1413.7,681.4 1417.5,680.0 1421.3,675.7 1423.4,674.0" fill="none" stroke="#7d7550" stroke-width="0.6" opacity="0.6"/><polyline points="1228.3,667.3 1222.6,665.1 1219.6,662.0 1214.6,658.8 1212.6,654.1 1211.0,650.6" fill="none" stroke="#8a7a58" stroke-width="0.5" opacity="0.6"/><polyline points="1220.2,393.0 1220.2,386.4 1222.3,384.0 1228.1,381.1" fill="none" stroke="#9a8868" stroke-width="0.5" opacity="0.6"/><polyline points="1123.8,332.1 1126.5,333.0 1127.8,335.3 1132.6,339.4" fill="none" stroke="#8a7a58" stroke-width="0.4" opacity="0.6"/><polyline points="1399.1,388.2 1396.4,385.3 1396.1,382.8 1396.3,380.1 1393.5,374.9 1394.0,369.1 1394.6,362.2" fill="none" stroke="#7d7550" stroke-width="0.5" opacity="0.6"/><polyline points="1308.7,497.2 1315.0,496.7 1318.9,496.0 1323.8,494.1 1326.1,489.2 1326.0,485.9 1323.9,482.2 1324.3,478.2" fill="none" stroke="#7d7550" stroke-width="0.6" opacity="0.6"/><polyline points="1196.3,673.0 1195.0,670.9 1191.6,667.7 1187.7,665.7 1182.2,667.4 1179.8,669.0 1174.0,671.1" fill="none" stroke="#6b6a48" stroke-width="0.6" opacity="0.6"/><polyline points="1410.1,416.2 1405.8,412.4 1399.3,411.7 1395.6,411.1 1390.7,411.8" fill="none" stroke="#7d7550" stroke-width="0.4" opacity="0.6"/><polyline points="1297.3,412.7 1301.5,407.7 1306.5,406.5 1311.9,404.2 1318.0,404.3 1320.7,404.5 1325.8,408.0" fill="none" stroke="#9a8868" stroke-width="0.6" opacity="0.6"/><polyline points="1471.7,556.2 1468.5,557.7 1466.4,559.7 1461.7,561.9 1459.6,563.3 1456.4,566.2 1453.0,571.3" fill="none" stroke="#5e6a40" stroke-width="0.4" opacity="0.6"/><polyline points="1317.7,388.3 1323.4,390.1 1327.1,390.0 1332.0,390.7 1335.1,393.3 1338.2,394.7" fill="none" stroke="#6b6a48" stroke-width="0.5" opacity="0.6"/><polyline points="1213.0,336.3 1220.0,336.3 1225.1,336.6 1230.9,339.2 1233.5,342.3 1235.8,347.4" fill="none" stroke="#8a7a58" stroke-width="0.4" opacity="0.6"/><polyline points="1327.1,476.7 1331.5,476.1 1335.7,479.1 1336.8,481.7 1341.1,486.2" fill="none" stroke="#7d7550" stroke-width="0.6" opacity="0.6"/><polyline points="1128.1,381.4 1123.0,380.7 1117.4,382.1 1113.1,381.5 1107.2,381.8 1103.2,382.6 1097.7,384.8 1094.8,383.9" fill="none" stroke="#9a8868" stroke-width="0.4" opacity="0.6"/><polyline points="1281.0,391.8 1280.4,398.7 1280.7,404.3 1278.5,407.2 1278.0,411.6 1281.2,416.2 1286.8,419.9 1288.3,424.0 1290.3,429.1" fill="none" stroke="#7d7550" stroke-width="0.5" opacity="0.6"/><polyline points="1319.0,658.2 1316.9,656.6 1315.9,651.8 1313.3,647.9" fill="none" stroke="#9a8868" stroke-width="0.4" opacity="0.6"/><polyline points="1273.0,609.1 1275.9,608.7 1281.9,605.2 1286.2,604.0 1291.3,606.8 1293.4,610.0" fill="none" stroke="#8a7a58" stroke-width="0.4" opacity="0.6"/><polyline points="1233.6,570.2 1236.8,569.1 1238.8,565.7 1237.8,561.8 1237.5,556.9 1233.7,553.2 1233.1,550.5 1230.7,548.6 1228.3,546.6" fill="none" stroke="#6b6a48" stroke-width="0.5" opacity="0.6"/><polyline points="1321.0,572.7 1324.1,572.0 1328.7,567.7 1329.3,561.0 1326.4,555.3 1324.0,554.1" fill="none" stroke="#6b6a48" stroke-width="0.5" opacity="0.6"/><polyline points="1494.7,504.8 1491.5,506.1 1486.8,506.9 1482.3,511.5 1479.9,516.0 1480.5,521.7 1480.1,527.8 1482.1,531.6" fill="none" stroke="#6b6a48" stroke-width="0.5" opacity="0.6"/><polyline points="1236.5,522.4 1239.6,527.4 1240.1,531.6 1238.6,536.6 1239.6,540.5 1243.3,544.2 1246.8,547.9 1247.7,550.6 1249.4,554.3" fill="none" stroke="#7d7550" stroke-width="0.6" opacity="0.6"/><polyline points="1382.0,711.8 1381.5,715.2 1383.7,721.0 1385.3,723.8 1387.4,728.6 1392.8,732.6" fill="none" stroke="#6b6a48" stroke-width="0.4" opacity="0.6"/><polyline points="1162.6,592.8 1168.5,596.2 1171.4,598.0 1176.9,601.1 1181.2,602.1 1185.8,606.2 1188.4,606.5" fill="none" stroke="#9a8868" stroke-width="0.4" opacity="0.6"/><polyline points="1443.3,513.9 1445.8,512.9 1449.4,513.4 1452.3,515.0 1454.5,517.5 1455.3,522.5 1459.6,525.8" fill="none" stroke="#6b6a48" stroke-width="0.6" opacity="0.6"/><polyline points="1426.3,617.2 1427.5,620.4 1426.8,623.0 1429.5,628.6 1431.8,633.0 1433.9,637.5 1437.8,640.7 1439.2,644.0" fill="none" stroke="#7d7550" stroke-width="0.4" opacity="0.6"/><polyline points="1170.3,523.3 1168.4,528.5 1164.9,534.0 1160.5,534.9 1158.3,536.3" fill="none" stroke="#7d7550" stroke-width="0.4" opacity="0.6"/><polyline points="1133.4,340.2 1135.9,337.0 1138.1,330.8 1137.2,327.9 1134.4,321.9 1129.8,320.1 1125.4,321.7 1122.1,321.6" fill="none" stroke="#9a8868" stroke-width="0.4" opacity="0.6"/><polyline points="1332.0,528.9 1329.2,528.0 1325.2,522.6 1322.3,519.1 1322.5,512.8 1318.6,508.0 1316.6,502.7 1313.9,500.1" fill="none" stroke="#6b6a48" stroke-width="0.4" opacity="0.6"/><polyline points="1428.7,680.0 1422.1,682.3 1416.2,684.8 1413.9,688.9 1413.5,692.2 1414.4,696.0 1418.3,698.5 1421.4,704.4" fill="none" stroke="#8a7a58" stroke-width="0.4" opacity="0.6"/><polyline points="1340.3,419.7 1344.0,419.3 1347.9,415.8 1349.0,413.3" fill="none" stroke="#7d7550" stroke-width="0.4" opacity="0.6"/><polyline points="1444.5,409.6 1443.4,414.5 1440.0,416.8 1435.8,417.3 1433.3,418.9 1430.4,418.9 1424.6,418.6" fill="none" stroke="#8a7a58" stroke-width="0.5" opacity="0.6"/><polyline points="1120.7,458.6 1125.4,459.9 1128.3,463.2 1131.6,464.3" fill="none" stroke="#6b6a48" stroke-width="0.5" opacity="0.6"/><polyline points="1259.0,327.8 1253.3,324.6 1247.9,322.9 1244.3,320.2 1239.4,317.4 1236.0,317.1 1229.8,315.3" fill="none" stroke="#8a7a58" stroke-width="0.4" opacity="0.6"/><polyline points="1199.9,434.4 1196.8,431.2 1192.0,428.2 1186.4,428.4 1183.3,428.7 1178.2,432.5 1174.1,435.9 1170.9,436.0 1164.5,435.6" fill="none" stroke="#9a8868" stroke-width="0.4" opacity="0.6"/><polyline points="1177.7,594.4 1177.9,601.1 1176.9,603.7 1179.0,608.6 1178.4,612.2 1181.6,618.2 1186.8,619.6 1192.3,620.0 1194.5,622.5" fill="none" stroke="#6b6a48" stroke-width="0.6" opacity="0.6"/><polyline points="1122.4,406.7 1125.0,409.9 1127.3,411.2 1129.8,410.7 1135.9,409.3" fill="none" stroke="#5e6a40" stroke-width="0.6" opacity="0.6"/><polyline points="1401.5,422.1 1405.5,420.0 1411.3,420.2 1416.8,423.4 1419.8,423.0 1424.9,425.7 1431.3,428.1" fill="none" stroke="#5e6a40" stroke-width="0.6" opacity="0.6"/><polyline points="1557.4,321.5 1562.7,322.8 1569.2,322.7 1572.7,324.1 1578.5,325.1" fill="none" stroke="#8a7a58" stroke-width="0.5" opacity="0.6"/><polyline points="1406.5,568.5 1402.3,567.6 1398.7,564.1 1395.1,562.0 1392.9,557.9 1388.0,556.5" fill="none" stroke="#8a7a58" stroke-width="0.6" opacity="0.6"/><polyline points="1428.6,318.2 1426.7,323.3 1429.2,329.6 1432.3,331.8" fill="none" stroke="#9a8868" stroke-width="0.6" opacity="0.6"/><polyline points="1194.8,561.7 1196.4,558.7 1197.6,555.4 1202.3,553.1 1205.9,550.5 1207.7,548.4 1210.7,546.1" fill="none" stroke="#7d7550" stroke-width="0.6" opacity="0.6"/><polyline points="1198.3,599.4 1194.1,596.0 1192.2,592.4 1190.1,589.5 1187.0,588.5 1180.1,589.5 1177.0,588.5 1171.8,586.4 1169.4,582.5" fill="none" stroke="#6b6a48" stroke-width="0.4" opacity="0.6"/><polyline points="1431.4,610.3 1435.0,611.0 1437.4,613.0 1441.0,618.9 1443.9,620.4 1446.7,624.8 1447.7,630.7 1445.7,634.3 1442.5,638.1" fill="none" stroke="#5e6a40" stroke-width="0.4" opacity="0.6"/><polyline points="1321.2,569.9 1319.9,567.5 1317.2,564.7 1314.8,562.8 1309.1,560.9" fill="none" stroke="#7d7550" stroke-width="0.6" opacity="0.6"/><polyline points="1397.7,653.0 1394.2,653.7 1390.5,657.7 1385.0,659.7 1382.1,662.6 1378.7,665.8" fill="none" stroke="#5e6a40" stroke-width="0.5" opacity="0.6"/><polyline points="1281.1,574.3 1274.3,574.5 1268.4,571.1 1265.1,568.9 1261.3,567.3 1257.0,565.2 1253.3,561.2" fill="none" stroke="#8a7a58" stroke-width="0.6" opacity="0.6"/><polyline points="1496.3,337.5 1491.2,333.9 1485.3,330.4 1479.6,326.7 1475.8,323.2 1471.4,318.4 1467.7,314.2" fill="none" stroke="#5e6a40" stroke-width="0.5" opacity="0.6"/><polyline points="1255.1,455.9 1259.9,458.8 1262.1,460.6 1267.2,463.0" fill="none" stroke="#8a7a58" stroke-width="0.6" opacity="0.6"/><polyline points="1165.1,405.2 1165.6,409.4 1168.2,411.8 1172.7,414.5 1175.5,418.4" fill="none" stroke="#8a7a58" stroke-width="0.5" opacity="0.6"/><polyline points="1211.8,643.1 1218.3,644.0 1223.5,648.3 1226.6,651.5 1228.6,654.3 1230.8,657.4 1235.0,662.6 1235.7,669.3 1233.1,674.6" fill="none" stroke="#8a7a58" stroke-width="0.4" opacity="0.6"/><polyline points="1170.6,638.1 1170.2,634.7 1170.6,630.4 1170.1,627.1 1166.1,622.9 1164.8,616.2" fill="none" stroke="#7d7550" stroke-width="0.5" opacity="0.6"/><polyline points="1555.9,356.3 1551.2,353.4 1546.2,353.5 1542.9,355.7 1539.8,356.2 1537.2,356.6 1530.9,354.5 1527.9,353.3" fill="none" stroke="#8a7a58" stroke-width="0.4" opacity="0.6"/><polyline points="1304.0,567.6 1300.8,562.5 1298.9,556.2 1296.9,550.1" fill="none" stroke="#7d7550" stroke-width="0.6" opacity="0.6"/><polyline points="1415.0,478.2 1414.5,484.9 1417.3,490.7 1422.0,494.7 1426.9,496.7" fill="none" stroke="#6b6a48" stroke-width="0.4" opacity="0.6"/><polyline points="1536.4,591.2 1541.6,589.9 1544.8,585.7 1545.8,579.2 1548.5,573.5 1548.7,570.3" fill="none" stroke="#7d7550" stroke-width="0.6" opacity="0.6"/><polyline points="1387.4,635.5 1391.8,637.8 1395.2,642.8 1397.7,644.0 1400.6,648.8 1405.0,652.4 1407.7,654.3 1409.2,656.6" fill="none" stroke="#9a8868" stroke-width="0.4" opacity="0.6"/><polyline points="1493.6,642.4 1497.9,645.2 1500.7,644.7 1505.3,644.5 1508.3,645.0 1513.4,644.7 1518.8,647.3 1520.5,651.1 1521.5,654.8" fill="none" stroke="#8a7a58" stroke-width="0.5" opacity="0.6"/><polyline points="1328.9,530.2 1325.0,528.3 1318.5,527.2 1314.1,529.9" fill="none" stroke="#7d7550" stroke-width="0.4" opacity="0.6"/><polyline points="1213.4,330.2 1218.1,325.3 1220.8,324.7 1224.8,326.3 1227.0,328.9 1230.7,332.3 1234.4,334.1" fill="none" stroke="#5e6a40" stroke-width="0.5" opacity="0.6"/><polyline points="1543.6,331.3 1537.2,333.3 1534.0,336.5 1530.0,336.4 1524.2,337.6 1521.0,335.9 1518.0,335.0 1513.4,331.9 1508.6,328.0" fill="none" stroke="#5e6a40" stroke-width="0.4" opacity="0.6"/><polyline points="1410.5,344.0 1409.5,348.1 1409.5,353.7 1410.1,357.8" fill="none" stroke="#5e6a40" stroke-width="0.5" opacity="0.6"/><polyline points="1430.8,544.2 1428.9,551.0 1430.5,554.4 1435.8,558.5 1439.7,561.3" fill="none" stroke="#6b6a48" stroke-width="0.5" opacity="0.6"/><polyline points="1221.8,508.8 1222.6,506.3 1224.7,502.2 1226.8,497.7 1229.6,496.6 1232.4,493.3 1233.9,486.6 1234.9,483.0" fill="none" stroke="#8a7a58" stroke-width="0.5" opacity="0.6"/><polyline points="1229.3,453.3 1227.6,450.5 1227.2,445.9 1229.8,439.6 1232.5,435.5 1233.3,433.0" fill="none" stroke="#6b6a48" stroke-width="0.4" opacity="0.6"/><polyline points="1571.8,413.3 1578.4,415.6 1582.0,417.9 1585.5,421.1" fill="none" stroke="#9a8868" stroke-width="0.6" opacity="0.6"/><polyline points="1140.1,489.9 1144.0,491.5 1147.6,495.3 1151.2,496.0 1154.8,498.2 1156.0,500.8 1155.4,504.4" fill="none" stroke="#5e6a40" stroke-width="0.6" opacity="0.6"/><polyline points="1418.1,443.3 1421.4,442.4 1424.0,441.6 1428.5,438.4 1433.3,436.6" fill="none" stroke="#5e6a40" stroke-width="0.6" opacity="0.6"/><polyline points="1350.9,586.8 1351.3,593.2 1350.0,596.7 1351.6,600.5 1355.2,602.2 1359.5,601.8 1364.4,600.7" fill="none" stroke="#7d7550" stroke-width="0.5" opacity="0.6"/><polyline points="1174.3,320.2 1170.2,316.2 1168.5,312.3 1169.8,307.0 1172.3,303.0" fill="none" stroke="#6b6a48" stroke-width="0.4" opacity="0.6"/><polyline points="1212.3,572.5 1211.7,568.6 1211.5,565.1 1209.0,559.3 1207.4,555.1 1207.5,550.8 1203.0,545.5 1202.9,539.0 1205.4,533.9" fill="none" stroke="#6b6a48" stroke-width="0.4" opacity="0.6"/><polyline points="1254.3,369.1 1249.9,372.1 1244.9,371.0 1239.2,370.0 1235.6,370.1 1230.7,370.1 1225.0,372.2" fill="none" stroke="#8a7a58" stroke-width="0.6" opacity="0.6"/><polyline points="1483.8,560.6 1481.7,564.1 1478.8,567.2 1473.4,567.9 1470.6,569.9 1466.9,570.3 1463.7,568.3 1459.0,568.8 1453.3,568.3" fill="none" stroke="#7d7550" stroke-width="0.4" opacity="0.6"/><polyline points="1370.8,581.8 1375.0,585.3 1377.9,589.0 1382.6,592.6 1384.2,594.5 1388.7,598.8" fill="none" stroke="#8a7a58" stroke-width="0.4" opacity="0.6"/><polyline points="1423.1,478.9 1425.5,477.4 1432.4,478.2 1437.3,480.6 1440.5,479.9 1444.4,477.3 1450.2,473.6 1456.5,470.6 1457.7,467.1" fill="none" stroke="#6b6a48" stroke-width="0.6" opacity="0.6"/><polyline points="1467.8,387.6 1469.6,392.7 1471.1,396.9 1473.8,398.6 1478.0,401.7 1480.7,403.3 1484.5,404.4 1487.4,408.3" fill="none" stroke="#8a7a58" stroke-width="0.4" opacity="0.6"/><polyline points="1542.1,562.2 1539.6,559.6 1537.9,556.8 1537.4,554.2 1535.7,548.9" fill="none" stroke="#6b6a48" stroke-width="0.4" opacity="0.6"/><polyline points="1494.4,560.9 1492.7,557.4 1490.7,554.9 1487.4,552.2 1483.9,547.5" fill="none" stroke="#8a7a58" stroke-width="0.6" opacity="0.6"/><polyline points="1530.8,688.2 1532.8,691.7 1533.9,696.2 1533.0,700.3 1530.2,705.5 1527.7,711.1 1521.7,714.6" fill="none" stroke="#7d7550" stroke-width="0.6" opacity="0.6"/><polyline points="1165.9,704.9 1165.9,711.7 1164.3,715.9 1162.0,717.8 1158.6,717.6 1153.7,716.2" fill="none" stroke="#9a8868" stroke-width="0.5" opacity="0.6"/><polyline points="1210.3,529.8 1214.9,531.2 1216.6,534.1 1218.5,535.8 1220.6,537.8 1222.9,544.4 1226.4,546.8 1233.3,547.0 1236.1,545.0" fill="none" stroke="#5e6a40" stroke-width="0.6" opacity="0.6"/><polyline points="1429.5,656.4 1423.7,659.5 1421.3,660.8 1419.9,663.7" fill="none" stroke="#9a8868" stroke-width="0.4" opacity="0.6"/><polyline points="1476.7,374.9 1472.8,378.8 1466.9,379.0 1462.8,381.2 1459.3,380.3 1455.2,376.1" fill="none" stroke="#6b6a48" stroke-width="0.4" opacity="0.6"/><polyline points="1487.0,708.6 1489.9,706.7 1495.0,707.0 1500.5,704.6" fill="none" stroke="#8a7a58" stroke-width="0.6" opacity="0.6"/><polyline points="1228.0,644.1 1222.7,644.5 1219.5,645.5 1215.2,648.0 1213.9,651.0 1210.5,653.2" fill="none" stroke="#5e6a40" stroke-width="0.5" opacity="0.6"/><polyline points="1159.8,523.5 1161.8,525.5 1166.8,527.9 1169.4,529.6" fill="none" stroke="#5e6a40" stroke-width="0.4" opacity="0.6"/><polyline points="1221.8,364.6 1224.3,362.1 1229.9,361.0 1233.0,358.7 1234.7,354.9" fill="none" stroke="#6b6a48" stroke-width="0.5" opacity="0.6"/><polyline points="1443.9,511.0 1448.1,509.0 1451.0,506.6 1453.1,505.3 1454.6,503.0 1455.6,498.4 1454.9,496.0 1454.0,489.1 1451.1,485.8" fill="none" stroke="#7d7550" stroke-width="0.5" opacity="0.6"/><polyline points="1367.5,518.9 1372.4,514.1 1374.0,509.5 1372.4,505.8 1371.9,499.5" fill="none" stroke="#8a7a58" stroke-width="0.5" opacity="0.6"/><polyline points="1534.5,606.5 1532.3,610.1 1529.0,615.6 1528.2,620.6 1525.4,626.3 1523.3,630.2 1518.0,632.5" fill="none" stroke="#7d7550" stroke-width="0.6" opacity="0.6"/><polyline points="1326.6,648.6 1323.3,654.0 1324.1,658.6 1327.9,664.0 1333.4,665.7 1337.7,670.8 1343.2,674.8" fill="none" stroke="#8a7a58" stroke-width="0.5" opacity="0.6"/><polyline points="1296.8,346.8 1300.1,345.4 1302.3,342.4 1307.4,337.7" fill="none" stroke="#6b6a48" stroke-width="0.5" opacity="0.6"/><polyline points="1260.3,527.2 1257.3,522.7 1254.1,518.2 1252.1,516.1 1245.8,513.5 1239.1,514.2 1235.3,511.5 1228.7,511.1 1225.3,511.7" fill="none" stroke="#6b6a48" stroke-width="0.5" opacity="0.6"/><polyline points="1372.4,539.7 1375.5,541.1 1380.3,541.1 1386.8,540.6 1392.5,536.9 1394.3,534.3 1394.0,529.8 1397.1,524.2 1402.9,522.0" fill="none" stroke="#9a8868" stroke-width="0.6" opacity="0.6"/><polyline points="1292.7,605.1 1297.1,606.4 1301.9,606.1 1308.3,608.7" fill="none" stroke="#7d7550" stroke-width="0.5" opacity="0.6"/><polyline points="1564.5,424.9 1566.4,423.0 1567.9,419.2 1565.9,414.5 1563.8,410.8 1561.2,410.1 1557.4,406.4 1552.9,404.0 1548.6,400.2" fill="none" stroke="#9a8868" stroke-width="0.4" opacity="0.6"/><polyline points="1461.1,601.6 1463.9,596.7 1464.9,592.7 1464.7,589.7 1463.1,585.3 1463.8,579.7 1466.8,577.4" fill="none" stroke="#8a7a58" stroke-width="0.6" opacity="0.6"/><polyline points="1271.8,617.0 1269.7,621.8 1269.1,624.8 1267.9,628.6" fill="none" stroke="#5e6a40" stroke-width="0.5" opacity="0.6"/><polyline points="1450.1,433.8 1449.1,431.2 1448.7,425.8 1451.4,420.4 1450.0,413.9 1449.0,407.5 1450.7,404.5 1450.2,401.7 1451.8,397.9" fill="none" stroke="#8a7a58" stroke-width="0.4" opacity="0.6"/><polyline points="1215.9,425.4 1212.0,421.2 1208.4,420.1 1203.9,420.0 1199.0,419.2 1194.7,417.3 1190.3,415.6 1187.7,414.7" fill="none" stroke="#8a7a58" stroke-width="0.6" opacity="0.6"/><polyline points="1558.0,543.3 1557.5,548.4 1562.0,553.8 1562.4,558.2 1562.9,564.7" fill="none" stroke="#6b6a48" stroke-width="0.5" opacity="0.6"/><polyline points="1178.4,347.8 1181.3,344.5 1185.3,341.4 1188.7,341.2 1192.5,337.4" fill="none" stroke="#7d7550" stroke-width="0.5" opacity="0.6"/><polyline points="1260.6,549.1 1258.0,546.5 1254.2,546.1 1248.6,546.4 1243.8,544.9 1239.1,543.2 1235.8,542.2" fill="none" stroke="#6b6a48" stroke-width="0.6" opacity="0.6"/><polyline points="1266.1,581.9 1268.9,580.6 1271.6,581.4 1278.1,580.7 1281.6,576.9 1286.8,573.9" fill="none" stroke="#7d7550" stroke-width="0.4" opacity="0.6"/><polyline points="1270.3,642.6 1272.2,636.1 1275.8,632.7 1282.1,630.8 1285.9,629.2" fill="none" stroke="#9a8868" stroke-width="0.5" opacity="0.6"/><polyline points="1205.1,460.4 1199.1,461.4 1194.9,463.2 1190.2,462.6 1183.5,461.9 1178.9,461.1" fill="none" stroke="#5e6a40" stroke-width="0.6" opacity="0.6"/><polyline points="1413.1,494.7 1415.2,488.8 1419.3,483.1 1424.4,479.5 1428.4,475.1 1430.1,473.1 1431.7,469.0 1437.3,465.3 1441.9,466.3" fill="none" stroke="#9a8868" stroke-width="0.5" opacity="0.6"/><polyline points="1205.4,342.0 1202.9,343.1 1200.3,342.2 1195.4,339.5 1189.9,339.0 1187.1,338.1 1181.3,339.9 1178.4,340.3" fill="none" stroke="#7d7550" stroke-width="0.6" opacity="0.6"/><polyline points="1542.0,454.5 1542.7,459.2 1542.6,463.5 1539.1,467.7 1538.0,470.3 1536.0,474.3 1534.2,480.4" fill="none" stroke="#8a7a58" stroke-width="0.5" opacity="0.6"/><polyline points="1263.8,574.1 1269.1,575.4 1271.7,577.9 1271.9,580.4 1273.2,584.5 1276.6,589.1" fill="none" stroke="#9a8868" stroke-width="0.5" opacity="0.6"/><polyline points="1467.7,574.1 1466.6,568.6 1465.5,565.9 1465.8,561.2" fill="none" stroke="#9a8868" stroke-width="0.5" opacity="0.6"/><polyline points="1468.2,457.0 1472.8,457.7 1476.0,457.5 1481.7,460.3 1486.9,463.9 1492.6,467.6 1499.3,467.0 1502.1,467.9 1506.3,471.2" fill="none" stroke="#7d7550" stroke-width="0.4" opacity="0.6"/><polyline points="1123.8,464.8 1121.5,468.3 1120.3,472.2 1115.9,476.3" fill="none" stroke="#6b6a48" stroke-width="0.6" opacity="0.6"/><polyline points="1183.2,456.8 1181.7,459.9 1177.4,462.8 1175.5,466.5 1172.6,471.9" fill="none" stroke="#7d7550" stroke-width="0.6" opacity="0.6"/><polyline points="1159.3,422.1 1152.9,423.8 1146.2,424.3 1139.5,423.0 1136.4,419.9 1130.8,418.2" fill="none" stroke="#7d7550" stroke-width="0.5" opacity="0.6"/><polyline points="1222.3,574.7 1228.5,572.2 1232.0,572.4 1236.2,572.2 1240.8,572.3 1246.3,571.6 1250.1,568.2 1253.4,567.0" fill="none" stroke="#d29a48" stroke-width="1" opacity="0.75"/><polyline points="1222.8,617.5 1220.9,615.0 1220.1,611.2 1215.8,606.0 1211.7,602.3 1210.0,597.4 1208.7,590.6 1208.2,586.3" fill="none" stroke="#d29a48" stroke-width="1" opacity="0.75"/><polyline points="1231.9,510.9 1235.6,516.0 1238.0,520.0 1241.5,522.6 1246.5,527.4 1249.1,529.2" fill="none" stroke="#d29a48" stroke-width="1" opacity="0.75"/><polyline points="1362.7,473.8 1361.0,476.4 1358.2,481.7 1358.0,485.3 1357.4,491.3" fill="none" stroke="#d29a48" stroke-width="1" opacity="0.75"/><polyline points="1258.5,456.6 1257.0,461.0 1255.1,465.3 1255.6,470.5 1256.1,474.6 1257.3,477.7 1257.4,483.9 1257.8,488.9" fill="none" stroke="#d29a48" stroke-width="1" opacity="0.75"/><polyline points="1262.5,534.3 1257.3,529.7 1252.0,527.1 1248.7,524.5 1245.3,518.7" fill="none" stroke="#d29a48" stroke-width="1" opacity="0.75"/><polyline points="1340.9,634.1 1342.4,631.4 1342.7,627.8 1340.4,623.2 1338.6,620.3" fill="none" stroke="#d29a48" stroke-width="1" opacity="0.75"/><polyline points="1233.5,511.8 1237.4,511.7 1244.0,509.6 1248.4,509.6 1253.9,512.4 1258.2,517.0 1264.6,519.1 1270.9,521.6 1274.6,521.5 1278.4,522.5" fill="none" stroke="#d29a48" stroke-width="1" opacity="0.75"/><polyline points="1386.3,544.3 1388.6,546.7 1392.2,548.7 1396.2,549.1 1401.3,547.9 1407.2,546.5" fill="none" stroke="#d29a48" stroke-width="1" opacity="0.75"/><polyline points="1245.4,684.8 1246.6,680.6 1248.3,674.4 1247.9,670.2 1249.6,666.7 1250.9,660.7 1254.7,655.9 1255.0,652.5" fill="none" stroke="#d29a48" stroke-width="1" opacity="0.75"/><polyline points="1383.5,567.9 1379.7,568.0 1375.8,565.7 1369.3,564.2 1365.4,564.3 1360.3,563.3 1354.1,565.2 1348.8,568.7" fill="none" stroke="#d29a48" stroke-width="1" opacity="0.75"/><polyline points="1406.2,656.1 1410.8,660.5 1414.0,662.0 1417.6,661.7 1423.3,662.0 1427.8,662.5 1430.8,663.2 1437.0,665.1 1441.2,664.2" fill="none" stroke="#d29a48" stroke-width="1" opacity="0.75"/><polyline points="1220.3,639.5 1225.5,635.7 1231.8,635.1 1235.5,633.1 1240.0,627.8" fill="none" stroke="#d29a48" stroke-width="1" opacity="0.75"/><polyline points="1254.4,583.8 1250.3,588.5 1247.5,594.1 1247.6,598.9 1245.9,604.2 1244.9,609.9 1241.5,613.5 1237.7,616.0 1234.7,617.9 1230.7,619.9" fill="none" stroke="#d29a48" stroke-width="1" opacity="0.75"/><polyline points="1231.2,520.6 1236.1,521.4 1241.5,525.3 1248.2,526.6 1253.1,526.9 1258.6,530.1 1264.6,531.9 1270.8,531.0" fill="none" stroke="#d29a48" stroke-width="1" opacity="0.75"/><polyline points="1330.3,469.6 1326.6,464.4 1322.1,461.4 1318.9,457.8 1315.9,452.1" fill="none" stroke="#d29a48" stroke-width="1" opacity="0.75"/><polyline points="1351.6,665.4 1352.2,668.7 1351.6,671.6 1351.5,675.1 1351.5,681.6 1351.8,687.9 1352.2,693.4 1353.7,696.6" fill="none" stroke="#d29a48" stroke-width="1" opacity="0.75"/><polyline points="1319.4,504.5 1320.5,499.4 1319.6,496.3 1317.6,490.0 1315.2,484.0 1314.0,477.6" fill="none" stroke="#d29a48" stroke-width="1" opacity="0.75"/><polyline points="1349.3,683.7 1345.9,679.9 1341.6,675.4 1340.6,672.1 1339.2,667.9 1339.7,661.2 1340.4,656.6 1341.8,651.0 1344.9,647.5" fill="none" stroke="#d29a48" stroke-width="1" opacity="0.75"/><polyline points="1253.8,672.5 1252.3,668.7 1248.0,664.1 1243.8,661.5 1240.3,661.2 1234.4,663.8 1230.4,665.9 1226.8,670.4 1224.5,674.0" fill="none" stroke="#d29a48" stroke-width="1" opacity="0.75"/><polyline points="1300.9,497.8 1295.1,500.5 1290.9,499.9 1286.5,501.4 1280.8,501.8 1275.8,500.3 1271.7,501.1 1268.6,502.7" fill="none" stroke="#d29a48" stroke-width="1" opacity="0.75"/><polyline points="1387.3,503.9 1382.0,500.4 1378.9,497.5 1375.6,494.6 1373.0,493.0 1368.8,487.9 1364.3,482.9 1362.8,478.9" fill="none" stroke="#d29a48" stroke-width="1" opacity="0.75"/><polyline points="1247.9,511.9 1243.2,515.0 1237.9,516.0 1231.5,518.5 1228.1,519.7 1224.2,519.8 1218.1,519.2 1212.6,522.2 1206.1,524.2 1204.1,526.6" fill="none" stroke="#d29a48" stroke-width="1" opacity="0.75"/><polyline points="1360.4,537.1 1356.9,533.4 1354.2,528.1 1349.9,525.5 1344.9,522.2 1342.2,520.6" fill="none" stroke="#d29a48" stroke-width="1" opacity="0.75"/><polyline points="1295.6,680.7 1293.7,684.4 1291.6,688.6 1288.4,692.5 1284.0,695.1 1279.1,698.2" fill="none" stroke="#d29a48" stroke-width="1" opacity="0.75"/><polyline points="1251.4,573.9 1252.0,569.1 1251.7,564.3 1250.8,561.4 1247.4,557.8" fill="none" stroke="#d29a48" stroke-width="1" opacity="0.75"/><polyline points="1239.1,494.6 1233.8,491.6 1230.0,490.6 1223.6,488.6 1218.2,484.6 1214.7,482.7 1210.6,480.3 1204.5,479.1 1198.1,479.4" fill="none" stroke="#d29a48" stroke-width="1" opacity="0.75"/><polyline points="1269.6,453.1 1273.2,450.8 1275.1,448.1 1276.4,444.6 1278.2,441.6 1282.0,438.2" fill="none" stroke="#d29a48" stroke-width="1" opacity="0.75"/><polyline points="1403.4,594.1 1398.8,596.1 1392.7,597.8 1386.3,597.0 1380.4,598.8 1377.4,600.8 1373.6,605.2" fill="none" stroke="#d29a48" stroke-width="1" opacity="0.75"/><polyline points="1356.9,575.9 1360.5,578.2 1364.2,583.5 1367.9,587.4 1372.8,590.2 1376.3,593.3 1377.9,596.2" fill="none" stroke="#d29a48" stroke-width="1" opacity="0.75"/><polyline points="1277.0,646.2 1275.1,641.6 1274.7,637.6 1273.0,630.9 1271.3,624.8" fill="none" stroke="#d29a48" stroke-width="1" opacity="0.75"/><polyline points="1368.0,640.3 1366.2,645.0 1365.8,648.7 1364.9,654.8 1365.3,659.5 1365.5,666.4" fill="none" stroke="#d29a48" stroke-width="1" opacity="0.75"/><polyline points="1218.2,511.6 1215.4,513.9 1213.4,516.6 1210.7,519.5 1206.6,524.2" fill="none" stroke="#d29a48" stroke-width="1" opacity="0.75"/><polyline points="1394.0,454.7 1400.4,452.2 1405.5,452.6 1409.0,452.6 1415.4,450.1 1422.2,449.3 1427.1,449.0 1432.7,448.2 1437.8,449.7 1443.1,452.4" fill="none" stroke="#d29a48" stroke-width="1" opacity="0.75"/><polyline points="1318.1,594.1 1323.1,592.2 1328.3,588.1 1332.6,587.6 1337.6,586.0 1340.2,583.9 1342.9,581.6 1345.5,575.4 1348.2,572.8 1353.1,570.1" fill="none" stroke="#d29a48" stroke-width="1" opacity="0.75"/><polyline points="1381.0,580.8 1384.8,576.6 1387.1,572.3 1386.5,567.0 1387.0,563.9" fill="none" stroke="#d29a48" stroke-width="1" opacity="0.75"/><polyline points="1399.9,685.4 1402.8,684.1 1406.3,682.9 1411.0,678.1 1414.1,677.1 1419.4,676.0 1422.9,672.3 1424.8,669.4 1426.8,665.9 1429.6,661.9" fill="none" stroke="#d29a48" stroke-width="1" opacity="0.75"/><polyline points="1216.9,671.8 1215.7,668.3 1211.6,664.8 1209.0,662.0 1203.5,659.0 1200.8,655.8" fill="none" stroke="#d29a48" stroke-width="1" opacity="0.75"/><polyline points="1292.2,623.3 1296.0,626.1 1300.5,630.1 1305.0,630.8 1311.1,629.9 1314.4,630.9 1318.1,633.0" fill="none" stroke="#d29a48" stroke-width="1" opacity="0.75"/><polyline points="1234.5,483.4 1231.8,481.5 1226.9,479.2 1220.2,479.1 1216.2,479.5" fill="none" stroke="#d29a48" stroke-width="1" opacity="0.75"/><polyline points="1324.9,545.6 1323.0,540.2 1322.2,535.1 1320.2,531.6 1317.4,529.6 1313.2,528.2 1309.2,524.7" fill="none" stroke="#d29a48" stroke-width="1" opacity="0.75"/><polyline points="1244.2,510.3 1247.4,511.5 1251.3,514.7 1255.2,517.6 1257.7,520.3 1261.5,524.0 1266.2,525.9 1272.3,526.3 1275.8,528.7" fill="none" stroke="#d29a48" stroke-width="1" opacity="0.75"/><polyline points="1262.0,497.6 1260.1,504.0 1258.1,507.5 1256.1,512.5 1254.8,519.1 1254.4,525.6 1253.4,528.9" fill="none" stroke="#d29a48" stroke-width="1" opacity="0.75"/><polyline points="1242.1,584.0 1241.4,578.4 1239.6,573.7 1239.2,569.7 1241.7,563.7 1242.4,559.6 1240.2,554.6 1239.0,548.9" fill="none" stroke="#d29a48" stroke-width="1" opacity="0.75"/><polyline points="1215.3,490.4 1213.0,487.7 1208.9,484.9 1205.4,484.5 1199.3,482.8" fill="none" stroke="#d29a48" stroke-width="1" opacity="0.75"/><polyline points="1235.1,680.1 1237.3,677.6 1240.9,674.8 1245.5,674.5 1249.9,673.3" fill="none" stroke="#d29a48" stroke-width="1" opacity="0.75"/><polyline points="1228.4,557.9 1232.1,555.8 1234.5,553.8 1237.8,548.0 1240.0,543.9 1240.4,538.0 1242.7,535.0 1245.5,529.9 1247.9,527.9 1250.9,526.0" fill="none" stroke="#d29a48" stroke-width="1" opacity="0.75"/><polyline points="1215.3,640.1 1214.5,643.7 1216.6,650.3 1216.5,654.8 1215.4,658.3 1211.0,662.1 1208.7,668.5" fill="none" stroke="#d29a48" stroke-width="1" opacity="0.75"/><polyline points="1286.6,581.5 1284.9,587.4 1283.2,590.5 1281.2,595.9 1278.9,602.4" fill="none" stroke="#d29a48" stroke-width="1" opacity="0.75"/><polyline points="1394.9,672.2 1392.3,674.6 1386.7,677.9 1383.3,679.2 1379.4,682.9 1376.0,684.1" fill="none" stroke="#d29a48" stroke-width="1" opacity="0.75"/><polyline points="1251.8,616.1 1248.7,619.6 1247.5,623.7 1247.9,627.8 1250.8,632.2 1255.7,634.9 1257.6,637.8 1257.9,642.1 1259.5,646.7" fill="none" stroke="#d29a48" stroke-width="1" opacity="0.75"/><polyline points="1406.4,621.9 1402.1,622.7 1395.9,622.6 1389.3,623.0 1385.1,621.0 1381.9,618.1" fill="none" stroke="#d29a48" stroke-width="1" opacity="0.75"/><polyline points="1310.8,550.2 1310.5,553.3 1309.2,557.3 1304.5,561.1 1302.1,565.0 1299.2,569.6" fill="none" stroke="#d29a48" stroke-width="1" opacity="0.75"/><polyline points="1407.1,521.2 1408.5,524.8 1408.7,528.7 1407.0,535.3 1408.2,539.6 1407.0,544.1 1407.7,547.4 1406.6,552.5" fill="none" stroke="#d29a48" stroke-width="1" opacity="0.75"/><polyline points="1369.6,540.4 1363.9,537.4 1361.5,533.6 1360.1,530.9 1356.7,527.9 1350.1,526.3 1345.1,527.9 1338.9,531.1" fill="none" stroke="#d29a48" stroke-width="1" opacity="0.75"/><polyline points="1418.3,687.3 1422.5,685.4 1426.1,685.1 1430.6,683.3 1436.9,682.5 1439.8,683.5" fill="none" stroke="#d29a48" stroke-width="1" opacity="0.75"/><polyline points="1341.4,637.9 1340.3,644.4 1338.4,647.8 1338.0,651.6 1335.8,656.1 1336.2,660.1 1339.3,664.5 1342.7,669.6" fill="none" stroke="#d29a48" stroke-width="1" opacity="0.75"/><polyline points="1302.1,599.0 1298.7,601.2 1295.3,602.6 1289.1,601.7 1286.0,599.9" fill="none" stroke="#d29a48" stroke-width="1" opacity="0.75"/><polyline points="1314.0,666.6 1311.1,672.8 1310.8,678.9 1313.0,685.3 1312.4,689.3 1310.8,692.8 1311.1,695.9 1310.7,699.0 1309.8,703.8 1311.1,708.9" fill="none" stroke="#d29a48" stroke-width="1" opacity="0.75"/><polyline points="1262.1,652.8 1264.5,655.6 1267.8,661.4 1269.8,664.5 1270.8,667.7 1271.9,671.7 1274.0,676.6 1277.7,679.6 1283.4,682.3" fill="none" stroke="#d29a48" stroke-width="1" opacity="0.75"/><polyline points="1292.8,674.4 1293.0,677.6 1292.6,680.6 1294.6,686.4 1294.9,689.7 1296.6,696.4" fill="none" stroke="#d29a48" stroke-width="1" opacity="0.75"/><polyline points="1393.3,562.3 1390.4,558.2 1389.0,554.0 1390.2,549.0 1391.5,543.7 1391.4,536.7" fill="none" stroke="#d29a48" stroke-width="1" opacity="0.75"/><polyline points="1232.5,652.2 1232.3,655.4 1231.8,658.5 1234.0,664.3 1233.8,667.9 1235.4,672.2 1234.3,677.1 1232.8,681.9" fill="none" stroke="#d29a48" stroke-width="1" opacity="0.75"/><polyline points="1284.2,611.7 1285.1,606.3 1285.6,601.6 1287.2,597.6 1289.1,591.3" fill="none" stroke="#d29a48" stroke-width="1" opacity="0.75"/><polyline points="1359.4,643.7 1362.4,649.3 1363.5,655.1 1365.7,657.5 1369.4,659.4 1371.7,662.2 1376.9,664.1 1379.0,666.6" fill="none" stroke="#d29a48" stroke-width="1" opacity="0.75"/><polyline points="1206.5,685.9 1204.5,690.6 1203.0,697.0 1200.6,699.4 1197.7,700.5 1194.4,701.9 1191.1,706.3" fill="none" stroke="#d29a48" stroke-width="1" opacity="0.75"/><polyline points="1221.2,481.9 1217.1,482.7 1213.6,485.4 1210.0,485.6 1205.3,489.0 1200.2,492.2 1196.9,494.8 1192.4,500.1" fill="none" stroke="#d29a48" stroke-width="1" opacity="0.75"/><polyline points="1376.0,629.6 1370.2,632.0 1366.0,636.3 1361.9,638.1 1358.4,639.1" fill="none" stroke="#d29a48" stroke-width="1" opacity="0.75"/><polyline points="1379.0,659.7 1376.3,654.0 1373.1,651.5 1371.3,648.8 1366.1,646.5" fill="none" stroke="#d29a48" stroke-width="1" opacity="0.75"/><polyline points="1388.5,476.3 1385.8,478.9 1383.4,483.2 1381.0,489.6 1379.2,495.3 1376.2,497.7 1370.7,501.4 1366.3,503.0 1360.6,505.5" fill="none" stroke="#d29a48" stroke-width="1" opacity="0.75"/><polyline points="1262.3,455.8 1259.2,460.8 1255.7,463.9 1250.9,466.4 1245.9,467.4 1240.9,470.8" fill="none" stroke="#d29a48" stroke-width="1" opacity="0.75"/><polyline points="1278.1,483.9 1274.9,484.0 1269.5,487.7 1266.4,488.7 1262.3,490.2" fill="none" stroke="#d29a48" stroke-width="1" opacity="0.75"/><polyline points="1274.3,603.7 1272.5,606.6 1270.1,611.9 1268.8,615.1 1269.0,619.2 1271.2,622.7 1272.4,625.8 1272.3,630.0 1273.5,634.7" fill="none" stroke="#d29a48" stroke-width="1" opacity="0.75"/><polyline points="1273.8,662.6 1269.4,663.8 1263.3,662.9 1258.2,663.4 1254.1,663.9 1250.8,666.1 1245.8,666.0 1241.5,666.4 1237.6,669.1" fill="none" stroke="#d29a48" stroke-width="1" opacity="0.75"/><polyline points="1371.7,642.9 1375.0,643.6 1378.2,644.8 1381.3,646.9 1388.1,647.6 1391.8,645.7 1396.6,642.5 1398.3,639.4 1399.1,634.1" fill="none" stroke="#d29a48" stroke-width="1" opacity="0.75"/><polyline points="1407.8,672.7 1413.3,669.2 1418.1,666.1 1421.5,666.0 1427.2,663.3" fill="none" stroke="#d29a48" stroke-width="1" opacity="0.75"/><polyline points="1266.2,529.0 1270.4,524.2 1275.5,522.5 1279.8,519.8 1283.0,516.7" fill="none" stroke="#d29a48" stroke-width="1" opacity="0.75"/><polyline points="1321.1,534.0 1317.8,532.2 1314.7,529.4 1310.3,526.9 1307.0,520.7 1303.3,515.8" fill="none" stroke="#d29a48" stroke-width="1" opacity="0.75"/><polyline points="1351.4,584.0 1345.8,586.5 1341.6,592.0 1338.3,594.2 1336.4,597.2 1332.9,599.4 1327.4,602.0" fill="none" stroke="#d29a48" stroke-width="1" opacity="0.75"/><polyline points="1244.6,527.2 1243.3,532.3 1241.8,537.2 1242.3,540.6 1240.0,546.7 1240.3,549.9 1238.8,553.5 1238.3,557.3" fill="none" stroke="#d29a48" stroke-width="1" opacity="0.75"/><polyline points="1318.0,524.5 1318.1,529.9 1317.1,535.2 1317.8,538.4 1319.3,546.1 1322.8,551.1 1325.7,555.7 1328.0,559.6 1334.5,563.7" fill="none" stroke="#4e5a36" stroke-width="0.9" opacity="0.6"/><polyline points="1467.2,672.1 1472.5,675.4 1478.6,678.0 1482.5,680.4 1485.4,684.5 1486.0,689.7 1489.2,694.9 1495.4,699.3 1500.4,701.4 1506.0,702.1 1509.4,701.2" fill="none" stroke="#4e5a36" stroke-width="0.9" opacity="0.6"/><polyline points="1251.6,633.4 1248.3,626.5 1243.6,621.6 1239.2,617.2 1235.6,613.9 1229.9,608.5 1226.4,605.9" fill="none" stroke="#4e5a36" stroke-width="0.9" opacity="0.6"/><polyline points="1403.2,521.0 1409.6,524.1 1413.2,526.0 1418.3,528.5 1422.5,530.4 1426.8,534.5 1430.1,535.6 1436.5,540.3" fill="none" stroke="#4e5a36" stroke-width="0.9" opacity="0.6"/><polyline points="1494.6,518.5 1497.7,517.3 1500.7,515.4 1505.0,513.3 1509.3,512.5 1513.2,510.4 1515.7,507.6" fill="none" stroke="#4e5a36" stroke-width="0.9" opacity="0.6"/><polyline points="1210.5,686.7 1214.0,688.2 1217.6,689.5 1222.3,691.7 1227.3,696.0 1231.0,702.7 1233.6,706.1" fill="none" stroke="#4e5a36" stroke-width="0.9" opacity="0.6"/><polyline points="1443.5,692.9 1447.3,694.0 1453.4,695.2 1460.0,699.0 1463.3,703.0 1466.2,706.1 1468.3,709.7 1469.5,712.8" fill="none" stroke="#4e5a36" stroke-width="0.9" opacity="0.6"/><polyline points="1230.1,541.9 1228.4,538.2 1226.9,532.7 1226.9,528.8 1227.5,525.0 1226.6,519.5 1224.5,514.9 1223.5,507.6 1223.0,500.1" fill="none" stroke="#4e5a36" stroke-width="0.9" opacity="0.6"/><polyline points="1451.0,548.4 1456.8,546.4 1460.1,545.3 1465.2,540.1 1469.8,538.6 1474.2,535.3 1477.9,531.0 1484.5,527.1" fill="none" stroke="#4e5a36" stroke-width="0.9" opacity="0.6"/><polyline points="1203.0,677.4 1204.8,684.6 1204.5,692.3 1203.9,697.2 1203.3,703.2 1199.7,708.7" fill="none" stroke="#4e5a36" stroke-width="0.9" opacity="0.6"/><polyline points="1530.4,505.1 1527.8,498.6 1527.7,493.1 1528.2,485.1 1527.2,481.0 1522.9,475.8 1517.1,470.6 1515.4,466.8 1510.0,462.2 1508.2,458.9" fill="none" stroke="#4e5a36" stroke-width="0.9" opacity="0.6"/><polyline points="1532.4,518.3 1525.3,518.9 1518.9,519.5 1514.7,520.3 1508.1,522.3 1504.0,522.3 1500.0,523.1" fill="none" stroke="#4e5a36" stroke-width="0.9" opacity="0.6"/><polyline points="1348.8,445.5 1353.3,445.0 1358.4,445.3 1362.7,447.8 1368.1,452.7 1371.3,455.0 1376.8,459.9 1381.0,464.4 1383.2,469.7" fill="none" stroke="#4e5a36" stroke-width="0.9" opacity="0.6"/><polyline points="1397.4,459.1 1390.6,458.0 1383.6,458.8 1376.9,461.1 1373.1,462.8 1366.9,466.7 1363.2,468.9 1356.4,471.1" fill="none" stroke="#4e5a36" stroke-width="0.9" opacity="0.6"/><polyline points="1225.9,490.9 1222.5,484.9 1220.1,481.6 1217.9,478.0 1217.4,471.9 1218.7,465.2 1221.2,460.5" fill="none" stroke="#4e5a36" stroke-width="0.9" opacity="0.6"/><polyline points="1246.8,566.5 1243.6,568.8 1238.1,569.9 1231.7,568.9 1227.8,569.1 1224.2,567.6 1218.2,563.8 1213.0,559.8 1209.1,558.5" fill="none" stroke="#4e5a36" stroke-width="0.9" opacity="0.6"/><polyline points="1454.4,499.0 1458.9,503.1 1460.6,507.9 1461.3,514.3 1463.1,518.1 1464.0,521.8 1464.4,525.4 1469.0,531.9 1473.3,536.9 1476.5,542.9" fill="none" stroke="#4e5a36" stroke-width="0.9" opacity="0.6"/><polyline points="1516.2,688.4 1511.4,694.3 1504.8,698.5 1502.2,701.5 1500.4,708.4 1498.0,713.3" fill="none" stroke="#4e5a36" stroke-width="0.9" opacity="0.6"/><polyline points="1199.7,518.9 1194.2,524.5 1192.2,529.9 1188.7,533.5 1182.9,535.8 1177.4,540.8" fill="none" stroke="#4e5a36" stroke-width="0.9" opacity="0.6"/><polyline points="1433.9,596.5 1430.7,592.4 1428.4,585.3 1426.9,579.1 1425.0,573.9 1424.8,570.1" fill="none" stroke="#4e5a36" stroke-width="0.9" opacity="0.6"/><polyline points="1528.7,543.5 1533.4,540.5 1535.7,536.5 1540.2,533.3 1546.0,530.3 1548.8,527.8" fill="none" stroke="#4e5a36" stroke-width="0.9" opacity="0.6"/><polyline points="1332.0,543.5 1335.4,539.0 1339.7,537.2 1345.3,532.5 1347.4,528.0 1350.3,525.6 1353.6,523.6 1358.1,521.7 1364.9,518.0 1371.4,516.3" fill="none" stroke="#4e5a36" stroke-width="0.9" opacity="0.6"/><polyline points="1369.8,637.7 1373.9,642.5 1376.3,647.4 1377.7,650.3 1382.2,656.2 1388.0,660.1 1392.1,664.7 1395.3,670.6 1396.8,677.4 1396.9,681.3 1394.3,688.6" fill="none" stroke="#4e5a36" stroke-width="0.9" opacity="0.6"/><polyline points="1261.4,644.5 1257.1,640.6 1251.6,638.6 1246.7,634.0 1241.1,632.5 1237.4,632.6 1233.5,632.6 1228.6,632.1 1220.8,630.9" fill="none" stroke="#4e5a36" stroke-width="0.9" opacity="0.6"/><polyline points="1218.8,475.7 1219.9,483.0 1222.0,488.1 1223.8,491.4 1228.9,494.7 1234.1,496.2 1239.7,501.2 1241.5,505.7" fill="none" stroke="#4e5a36" stroke-width="0.9" opacity="0.6"/><polyline points="1448.4,632.1 1444.4,634.1 1441.5,636.8 1436.3,639.8 1432.1,641.6 1426.6,642.1 1421.0,640.7 1415.9,637.6" fill="none" stroke="#4e5a36" stroke-width="0.9" opacity="0.6"/><polyline points="1284.8,445.4 1282.3,451.7 1281.5,457.8 1281.1,462.1 1282.0,466.3 1284.3,471.0 1286.6,475.6 1288.8,480.6 1291.2,486.7 1295.0,492.8 1300.5,497.9" fill="none" stroke="#4e5a36" stroke-width="0.9" opacity="0.6"/><polyline points="1274.5,437.7 1277.1,442.5 1277.2,447.2 1278.4,452.1 1278.5,457.6 1276.5,464.1 1275.5,468.3 1273.4,472.7 1272.1,476.1 1272.1,482.4" fill="none" stroke="#4e5a36" stroke-width="0.9" opacity="0.6"/><polyline points="1380.2,658.8 1376.5,654.0 1373.8,649.8 1372.2,645.1 1368.1,641.3 1365.6,634.7" fill="none" stroke="#4e5a36" stroke-width="0.9" opacity="0.6"/><polyline points="1232.3,677.5 1237.7,682.6 1239.0,685.7 1241.8,688.4 1247.7,690.6 1253.0,692.9" fill="none" stroke="#4e5a36" stroke-width="0.9" opacity="0.6"/><polyline points="1462.8,433.5 1459.6,435.5 1452.3,436.9 1447.0,436.4 1440.8,435.7 1433.9,434.6 1426.5,437.0 1420.0,437.1 1412.3,436.9 1406.7,437.0 1400.6,436.7" fill="none" stroke="#4e5a36" stroke-width="0.9" opacity="0.6"/><polyline points="1514.4,686.8 1518.5,688.1 1522.8,690.5 1528.4,694.1 1532.7,696.5 1538.0,698.9 1545.4,698.6 1549.2,696.4" fill="none" stroke="#4e5a36" stroke-width="0.9" opacity="0.6"/><polyline points="1478.6,492.2 1475.5,494.9 1473.1,497.1 1466.2,500.8 1460.9,501.0 1456.7,500.7 1453.5,501.1 1449.6,499.9 1444.1,499.1" fill="none" stroke="#4e5a36" stroke-width="0.9" opacity="0.6"/><polyline points="1421.1,493.6 1416.5,492.1 1411.6,490.8 1404.9,491.8 1400.8,493.9 1396.3,500.4" fill="none" stroke="#4e5a36" stroke-width="0.9" opacity="0.6"/><polyline points="1271.3,661.0 1274.8,655.7 1280.1,650.5 1283.9,648.9 1286.0,646.4 1289.9,643.0 1295.0,640.0 1300.0,633.9 1303.4,631.2 1308.0,628.1 1312.5,627.6" fill="none" stroke="#4e5a36" stroke-width="0.9" opacity="0.6"/><polyline points="1294.7,426.8 1302.4,427.9 1309.2,426.9 1315.7,425.2 1320.2,424.3 1326.0,423.2 1329.1,421.5 1331.8,417.6 1335.0,413.0 1340.1,407.3" fill="none" stroke="#4e5a36" stroke-width="0.9" opacity="0.6"/><polyline points="1296.8,491.7 1293.5,489.7 1286.9,489.3 1282.5,487.4 1278.7,486.5 1273.8,485.2 1270.7,484.2" fill="none" stroke="#4e5a36" stroke-width="0.9" opacity="0.6"/><polyline points="1460.2,662.8 1457.9,657.7 1457.4,653.9 1457.3,650.7 1455.0,646.8 1454.0,643.2 1451.5,636.5" fill="none" stroke="#4e5a36" stroke-width="0.9" opacity="0.6"/><polyline points="1303.3,432.8 1302.8,429.4 1303.0,421.8 1304.0,416.2 1307.7,410.5 1310.6,404.6 1314.7,399.2 1316.4,394.3 1317.5,389.6 1319.5,384.0" fill="none" stroke="#4e5a36" stroke-width="0.9" opacity="0.6"/><polyline points="1220.4,497.3 1223.8,492.9 1225.5,485.7 1227.2,481.4 1228.4,478.4 1228.3,472.7 1227.8,465.9" fill="none" stroke="#4e5a36" stroke-width="0.9" opacity="0.6"/><polyline points="1398.6,423.1 1402.0,421.6 1408.2,419.9 1414.2,415.1 1421.7,412.7 1425.0,411.8 1429.3,410.1 1434.9,408.4 1441.1,408.7" fill="none" stroke="#4e5a36" stroke-width="0.9" opacity="0.6"/><polyline points="1377.3,519.4 1383.9,521.1 1390.5,523.2 1396.9,523.3 1400.5,523.8 1407.3,526.7 1411.8,532.3" fill="none" stroke="#4e5a36" stroke-width="0.9" opacity="0.6"/><polyline points="1199.9,428.3 1196.2,424.2 1193.9,420.4 1192.7,416.6 1190.1,413.2 1185.2,409.0 1179.5,405.9 1175.6,405.5 1168.5,406.4 1165.2,407.6 1160.9,411.7" fill="none" stroke="#4e5a36" stroke-width="0.9" opacity="0.6"/><polyline points="1234.1,613.1 1241.0,615.1 1246.7,614.1 1251.2,610.5 1256.1,608.5 1260.2,605.3 1264.5,601.6 1268.7,595.8" fill="none" stroke="#4e5a36" stroke-width="0.9" opacity="0.6"/><polyline points="1524.4,504.1 1522.4,501.6 1520.7,495.2 1517.9,490.3 1517.7,486.4 1516.3,479.8 1517.3,473.3 1516.6,469.9" fill="none" stroke="#4e5a36" stroke-width="0.9" opacity="0.6"/><polyline points="1243.6,544.2 1244.9,538.2 1244.1,530.7 1241.3,524.7 1241.3,520.4 1242.2,516.5 1245.7,511.3 1248.5,504.8 1253.2,498.7 1257.3,493.0" fill="none" stroke="#4e5a36" stroke-width="0.9" opacity="0.6"/><polyline points="1233.1,455.6 1235.4,450.7 1238.6,448.1 1242.0,444.1 1243.7,438.3 1245.1,435.5 1250.1,431.9 1252.0,429.5 1254.4,423.6" fill="none" stroke="#4e5a36" stroke-width="0.9" opacity="0.6"/><polyline points="1333.6,495.6 1332.6,488.7 1331.8,483.7 1332.9,480.2 1334.9,474.3 1339.8,469.2 1342.1,465.7 1348.3,460.8 1352.9,458.1 1357.0,453.1 1359.7,446.9" fill="none" stroke="#4e5a36" stroke-width="0.9" opacity="0.6"/><polyline points="1279.4,545.9 1282.1,550.1 1285.2,555.2 1286.7,560.3 1289.9,565.3 1291.0,570.7 1293.1,576.6 1293.1,579.9" fill="none" stroke="#4e5a36" stroke-width="0.9" opacity="0.6"/><polyline points="1377.1,614.3 1380.4,619.5 1380.7,623.8 1380.4,630.0 1377.4,636.8 1371.9,642.3 1369.6,649.2 1369.9,656.7" fill="none" stroke="#4e5a36" stroke-width="0.9" opacity="0.6"/>
<polyline points="1425.0,504.2 1435.8,512.4 1452.1,511.0 1472.5,509.7 1486.0,507.0 1506.4,505.6 1519.9,509.7 1519.9,517.8 1533.5,523.2 1547.1,530.0 1560.6,531.4 1571.5,525.9" fill="none" stroke="#9fcde0" stroke-width="2.6"/>
<polyline points="1425.0,504.2 1435.8,512.4 1452.1,511.0 1472.5,509.7 1486.0,507.0 1506.4,505.6 1519.9,509.7 1519.9,517.8 1533.5,523.2 1547.1,530.0 1560.6,531.4 1571.5,525.9" fill="none" stroke="#4f8fb0" stroke-width="0.8" transform="translate(0,1)"/>
<polyline points="1261.1,528.3 1273.3,533.5 1283.7,531.8 1297.7,542.2 1311.6,537.0 1322.1,524.8 1332.6,519.5 1343.0,517.8 1357.0,505.6 1365.7,502.1 1391.9,505.6 1440.0,509.1" fill="none" stroke="#86bcd6" stroke-width="2.4"/>
<polyline points="1261.1,528.3 1273.3,533.5 1283.7,531.8 1297.7,542.2 1311.6,537.0 1322.1,524.8 1332.6,519.5 1343.0,517.8 1357.0,505.6 1365.7,502.1 1391.9,505.6 1440.0,509.1" fill="none" stroke="#4f8fb0" stroke-width="0.6" transform="translate(0,1.2)"/>
<polyline points="1365.7,502.1 1367.5,488.1 1374.4,479.4" fill="none" stroke="#7ab4d0" stroke-width="1.4"/>
<polyline points="1166.5,353.4 1172.0,368.3 1169.2,380.5 1172.0,394.1 1173.3,415.8 1172.0,432.1 1173.3,451.0" fill="none" stroke="#5a9ac0" stroke-width="0.9"/>
<g stroke="#2a2a2a" stroke-width="0.7"><line x1="1343.6" y1="550.8" x2="1346.0" y2="554.4"/><line x1="1345.6" y1="554.4" x2="1341.8" y2="554.2"/><line x1="1349.0" y1="549.0" x2="1352.2" y2="545.9"/><line x1="1341.0" y1="540.9" x2="1341.3" y2="541.5"/><line x1="1333.2" y1="540.3" x2="1331.5" y2="543.7"/><line x1="1346.0" y1="539.2" x2="1348.4" y2="536.3"/><line x1="1343.5" y1="538.5" x2="1339.5" y2="541.5"/><line x1="1336.6" y1="540.3" x2="1340.4" y2="543.3"/><line x1="1337.9" y1="555.2" x2="1338.2" y2="556.7"/><line x1="1336.5" y1="554.8" x2="1338.0" y2="558.6"/><line x1="1348.2" y1="542.0" x2="1347.1" y2="539.3"/><line x1="1335.5" y1="537.3" x2="1333.9" y2="538.1"/><line x1="1333.1" y1="549.6" x2="1331.8" y2="548.0"/><line x1="1346.9" y1="545.6" x2="1345.4" y2="545.5"/><line x1="1345.0" y1="537.1" x2="1348.8" y2="533.3"/><line x1="1345.7" y1="552.9" x2="1341.9" y2="555.2"/><line x1="1339.2" y1="547.6" x2="1335.3" y2="543.9"/><line x1="1336.1" y1="555.1" x2="1333.6" y2="557.1"/><line x1="1348.8" y1="554.8" x2="1347.6" y2="553.7"/><line x1="1341.9" y1="551.5" x2="1338.8" y2="553.5"/><line x1="1346.6" y1="553.2" x2="1342.8" y2="556.8"/><line x1="1334.6" y1="542.8" x2="1335.4" y2="546.2"/><line x1="1338.8" y1="554.5" x2="1339.1" y2="553.0"/><line x1="1338.4" y1="539.5" x2="1335.0" y2="536.7"/><line x1="1344.7" y1="555.9" x2="1342.0" y2="552.3"/><line x1="1349.8" y1="546.7" x2="1349.0" y2="544.6"/><line x1="1343.1" y1="552.5" x2="1342.7" y2="551.9"/><line x1="1333.9" y1="554.3" x2="1330.2" y2="554.3"/><line x1="1347.3" y1="538.6" x2="1349.1" y2="542.2"/><line x1="1343.7" y1="551.8" x2="1340.6" y2="551.2"/><line x1="1335.5" y1="552.9" x2="1333.9" y2="552.5"/><line x1="1350.0" y1="553.0" x2="1353.8" y2="552.7"/><line x1="1341.3" y1="550.6" x2="1341.1" y2="548.9"/><line x1="1339.9" y1="538.9" x2="1338.9" y2="542.8"/><line x1="1349.3" y1="548.5" x2="1349.3" y2="547.2"/><line x1="1334.5" y1="541.4" x2="1336.8" y2="544.4"/><line x1="1339.1" y1="551.7" x2="1341.3" y2="553.3"/><line x1="1344.3" y1="551.2" x2="1343.2" y2="552.8"/><line x1="1337.8" y1="545.7" x2="1339.9" y2="547.2"/><line x1="1338.0" y1="554.9" x2="1339.2" y2="555.6"/></g>
</g>
<polygon points="1187.8,313.9 1199.5,314.9 1202.7,325.6 1201.8,334.3 1223.0,337.0 1243.0,342.6 1256.0,352.0 1266.0,362.0 1272.0,370.0 1273.0,377.0 1282.2,379.2 1293.0,390.0 1308.0,405.0 1312.0,413.0 1321.5,425.3 1335.0,432.0 1348.7,440.2 1370.4,450.0 1384.8,457.5 1386.9,466.0 1400.7,471.4 1412.5,485.3 1425.0,504.0 1436.0,512.0 1452.0,511.0 1472.0,509.6 1486.0,507.0 1506.4,505.6 1520.0,510.0 1520.0,518.0 1533.5,523.0 1547.0,530.0 1560.6,531.0 1571.5,526.0 1567.4,534.0 1560.6,545.0 1552.5,557.0 1544.0,569.0 1533.5,590.0 1513.1,619.8 1495.5,640.2 1475.2,663.2 1461.6,682.2 1449.4,702.6 1445.3,709.3 1427.4,710.7 1419.2,706.6 1406.0,702.5 1397.5,701.2 1379.0,703.0 1365.0,708.0 1356.8,703.9 1346.0,695.0 1335.0,687.6 1321.5,682.2 1317.5,668.7 1310.7,671.4 1299.0,671.4 1291.7,663.2 1280.8,674.0 1270.0,682.2 1260.0,690.0 1250.0,694.0 1239.8,695.8 1237.0,685.0 1234.3,671.4 1227.6,644.0 1218.0,617.0 1212.6,590.0 1208.0,576.0 1203.0,565.0 1195.0,559.0 1188.0,555.0 1181.0,555.0 1173.0,550.0 1165.0,544.0 1162.5,532.0 1160.0,526.0 1150.0,515.0 1138.0,504.2 1122.0,488.0 1130.0,480.0 1142.2,479.0 1153.0,474.4 1154.0,465.0 1157.0,457.0 1169.0,445.0 1173.3,432.0 1177.4,418.5 1176.0,405.0 1172.0,394.0 1162.5,364.2 1151.6,346.6 1159.2,339.8 1169.2,333.0 1178.7,323.6 1188.0,314.7" fill="none" stroke="#6a6a58" stroke-width="0.5"/>
<rect x="1512.8" y="352.5" width="8.7" height="5" fill="#d8e8b8" stroke="#a89878" stroke-width="0.4"/><rect x="1527.9" y="352.5" width="9.3" height="5" fill="#8a8040" stroke="#a89878" stroke-width="0.4"/><line x1="1514" y1="350.5" x2="1520" y2="350.5" stroke="#b0a890" stroke-width="0.8"/><line x1="1529" y1="350.5" x2="1536" y2="350.5" stroke="#b0a890" stroke-width="0.8"/><rect x="1512.8" y="364.3" width="8.7" height="5" fill="#f0b850" stroke="#a89878" stroke-width="0.4"/><rect x="1527.9" y="364.3" width="9.3" height="5" fill="#f0a040" stroke="#a89878" stroke-width="0.4"/><line x1="1514" y1="362.3" x2="1520" y2="362.3" stroke="#b0a890" stroke-width="0.8"/><line x1="1529" y1="362.3" x2="1536" y2="362.3" stroke="#b0a890" stroke-width="0.8"/><rect x="1512.8" y="376" width="8.7" height="5" fill="#eca080" stroke="#a89878" stroke-width="0.4"/><rect x="1527.9" y="376" width="9.3" height="5" fill="#e09878" stroke="#a89878" stroke-width="0.4"/><line x1="1514" y1="374" x2="1520" y2="374" stroke="#b0a890" stroke-width="0.8"/><line x1="1529" y1="374" x2="1536" y2="374" stroke="#b0a890" stroke-width="0.8"/><rect x="1512.8" y="388.4" width="8.7" height="5" fill="#f4c8a0" stroke="#a89878" stroke-width="0.4"/><rect x="1527.9" y="388.4" width="9.3" height="5" fill="#f8d0c8" stroke="#a89878" stroke-width="0.4"/><line x1="1514" y1="386.4" x2="1520" y2="386.4" stroke="#b0a890" stroke-width="0.8"/><line x1="1529" y1="386.4" x2="1536" y2="386.4" stroke="#b0a890" stroke-width="0.8"/><rect x="1512.8" y="400.5" width="8.7" height="5" fill="#f4f0b0" stroke="#a89878" stroke-width="0.4"/><rect x="1527.9" y="400.5" width="9.3" height="5" fill="#f4c8c0" stroke="#a89878" stroke-width="0.4"/><line x1="1514" y1="398.5" x2="1520" y2="398.5" stroke="#b0a890" stroke-width="0.8"/><line x1="1529" y1="398.5" x2="1536" y2="398.5" stroke="#b0a890" stroke-width="0.8"/><rect x="1512.8" y="413" width="8.7" height="5" fill="#e0d0a0" stroke="#a89878" stroke-width="0.4"/><rect x="1527.9" y="413" width="9.3" height="5" fill="#f0a0a0" stroke="#a89878" stroke-width="0.4"/><line x1="1514" y1="411" x2="1520" y2="411" stroke="#b0a890" stroke-width="0.8"/><line x1="1529" y1="411" x2="1536" y2="411" stroke="#b0a890" stroke-width="0.8"/><rect x="1512.8" y="425" width="8.7" height="5" fill="#d8b898" stroke="#a89878" stroke-width="0.4"/><rect x="1527.9" y="425" width="9.3" height="5" fill="#f0d0c8" stroke="#a89878" stroke-width="0.4"/><line x1="1514" y1="423" x2="1520" y2="423" stroke="#b0a890" stroke-width="0.8"/><line x1="1529" y1="423" x2="1536" y2="423" stroke="#b0a890" stroke-width="0.8"/><rect x="1512.8" y="437" width="8.7" height="5" fill="#c8a888" stroke="#a89878" stroke-width="0.4"/><rect x="1527.9" y="437" width="9.3" height="5" fill="#88a040" stroke="#a89878" stroke-width="0.4"/><line x1="1514" y1="435" x2="1520" y2="435" stroke="#b0a890" stroke-width="0.8"/><line x1="1529" y1="435" x2="1536" y2="435" stroke="#b0a890" stroke-width="0.8"/><rect x="1512.8" y="449" width="8.7" height="5" fill="#e0e070" stroke="#a89878" stroke-width="0.4"/><rect x="1527.9" y="449" width="9.3" height="5" fill="#e89898" stroke="#a89878" stroke-width="0.4"/><line x1="1514" y1="447" x2="1520" y2="447" stroke="#b0a890" stroke-width="0.8"/><line x1="1529" y1="447" x2="1536" y2="447" stroke="#b0a890" stroke-width="0.8"/><rect x="1512.8" y="461.2" width="8.7" height="5" fill="#f0e880" stroke="#a89878" stroke-width="0.4"/><rect x="1527.9" y="461.2" width="9.3" height="5" fill="#d0e8e0" stroke="#a89878" stroke-width="0.4"/><line x1="1514" y1="459.2" x2="1520" y2="459.2" stroke="#b0a890" stroke-width="0.8"/><line x1="1529" y1="459.2" x2="1536" y2="459.2" stroke="#b0a890" stroke-width="0.8"/><line x1="1521" y1="344" x2="1530" y2="344" stroke="#8a8270" stroke-width="0.9"/><line x1="1445" y1="343.7" x2="1467" y2="343.7" stroke="#8a8270" stroke-width="0.9"/><line x1="1335" y1="305.5" x2="1354" y2="305.5" stroke="#8a8270" stroke-width="1.3"/><line x1="1337" y1="308.5" x2="1352" y2="308.5" stroke="#a8a090" stroke-width="0.6"/><line x1="1331" y1="311.5" x2="1358" y2="311.5" stroke="#9a9280" stroke-width="0.8"/><line x1="1513" y1="305" x2="1569" y2="305" stroke="#a8a090" stroke-width="0.7"/><line x1="1124" y1="305" x2="1150" y2="305" stroke="#a8a090" stroke-width="0.7"/><line x1="1513" y1="308" x2="1569" y2="308" stroke="#a8a090" stroke-width="0.7"/><line x1="1124" y1="308" x2="1150" y2="308" stroke="#a8a090" stroke-width="0.7"/><line x1="1513" y1="311" x2="1569" y2="311" stroke="#a8a090" stroke-width="0.7"/><line x1="1124" y1="311" x2="1150" y2="311" stroke="#a8a090" stroke-width="0.7"/><line x1="1513" y1="313.5" x2="1569" y2="313.5" stroke="#a8a090" stroke-width="0.7"/><line x1="1124" y1="313.5" x2="1150" y2="313.5" stroke="#a8a090" stroke-width="0.7"/><line x1="1128" y1="716" x2="1158" y2="716" stroke="#a8a090" stroke-width="0.7"/><line x1="1128" y1="719" x2="1158" y2="719" stroke="#a8a090" stroke-width="0.7"/><line x1="1128" y1="722" x2="1158" y2="722" stroke="#a8a090" stroke-width="0.7"/><line x1="1335" y1="714" x2="1380" y2="714" stroke="#8a8270" stroke-width="0.6"/>
<rect x="1426.8" y="351.6" width="22" height="12.7" rx="3" fill="#78a8d0"/><rect x="1429" y="353.5" width="18" height="3.5" fill="#d8e8f2"/><path d="M1428 361 Q1437 358 1447 361" stroke="#3a5a80" stroke-width="0.8" fill="none"/><rect x="1425.5" y="366" width="9" height="5" fill="none" stroke="#9a968a" stroke-width="0.6"/><line x1="1425.5" y1="373" x2="1434.5" y2="373" stroke="#c0b8a8" stroke-width="0.6"/><rect x="1441" y="366" width="9" height="5" fill="none" stroke="#9a968a" stroke-width="0.6"/><line x1="1441" y1="373" x2="1450" y2="373" stroke="#c0b8a8" stroke-width="0.6"/><rect x="1425.5" y="375" width="9" height="5" fill="#9cc0e0" stroke="#5a88b8" stroke-width="0.6"/><line x1="1425.5" y1="382" x2="1434.5" y2="382" stroke="#c0b8a8" stroke-width="0.6"/><rect x="1441" y="375" width="9" height="5" fill="none" stroke="#9a968a" stroke-width="0.6"/><line x1="1441" y1="382" x2="1450" y2="382" stroke="#c0b8a8" stroke-width="0.6"/><rect x="1425.5" y="384" width="9" height="5" fill="#9cc0e0" stroke="#5a88b8" stroke-width="0.6"/><line x1="1425.5" y1="391" x2="1434.5" y2="391" stroke="#c0b8a8" stroke-width="0.6"/><rect x="1441" y="384" width="9" height="5" fill="none" stroke="#9a968a" stroke-width="0.6"/><line x1="1441" y1="391" x2="1450" y2="391" stroke="#c0b8a8" stroke-width="0.6"/><rect x="1425.5" y="393" width="9" height="5" fill="none" stroke="#9a968a" stroke-width="0.6"/><line x1="1425.5" y1="400" x2="1434.5" y2="400" stroke="#c0b8a8" stroke-width="0.6"/><rect x="1441" y="393" width="9" height="5" fill="none" stroke="#9a968a" stroke-width="0.6"/><line x1="1441" y1="400" x2="1450" y2="400" stroke="#c0b8a8" stroke-width="0.6"/><rect x="1425.5" y="402" width="9" height="5" fill="none" stroke="#9a968a" stroke-width="0.6"/><line x1="1425.5" y1="409" x2="1434.5" y2="409" stroke="#c0b8a8" stroke-width="0.6"/><rect x="1441" y="402" width="9" height="5" fill="none" stroke="#9a968a" stroke-width="0.6"/><line x1="1441" y1="409" x2="1450" y2="409" stroke="#c0b8a8" stroke-width="0.6"/><rect x="1425.5" y="411" width="9" height="5" fill="none" stroke="#9a968a" stroke-width="0.6"/><line x1="1425.5" y1="418" x2="1434.5" y2="418" stroke="#c0b8a8" stroke-width="0.6"/><rect x="1441" y="411" width="9" height="5" fill="none" stroke="#9a968a" stroke-width="0.6"/><line x1="1441" y1="418" x2="1450" y2="418" stroke="#c0b8a8" stroke-width="0.6"/><rect x="1425.5" y="420" width="9" height="5" fill="none" stroke="#9a968a" stroke-width="0.6"/><line x1="1425.5" y1="427" x2="1434.5" y2="427" stroke="#c0b8a8" stroke-width="0.6"/><rect x="1441" y="420" width="9" height="5" fill="none" stroke="#9a968a" stroke-width="0.6"/><line x1="1441" y1="427" x2="1450" y2="427" stroke="#c0b8a8" stroke-width="0.6"/><rect x="1462" y="352" width="9" height="5" fill="none" stroke="#9a968a" stroke-width="0.6"/><line x1="1462" y1="359" x2="1471" y2="359" stroke="#c0b8a8" stroke-width="0.6"/><rect x="1477" y="352" width="9" height="5" fill="none" stroke="#9a968a" stroke-width="0.6"/><line x1="1477" y1="359" x2="1486" y2="359" stroke="#c0b8a8" stroke-width="0.6"/><rect x="1462" y="361" width="9" height="5" fill="none" stroke="#9a968a" stroke-width="0.6"/><line x1="1462" y1="368" x2="1471" y2="368" stroke="#c0b8a8" stroke-width="0.6"/><rect x="1477" y="361" width="9" height="5" fill="none" stroke="#9a968a" stroke-width="0.6"/><line x1="1477" y1="368" x2="1486" y2="368" stroke="#c0b8a8" stroke-width="0.6"/><rect x="1462" y="374" width="9" height="5" fill="#9cc0e0" stroke="#5a88b8" stroke-width="0.6"/><line x1="1462" y1="381" x2="1471" y2="381" stroke="#c0b8a8" stroke-width="0.6"/><rect x="1477" y="374" width="9" height="5" fill="#9cc0e0" stroke="#5a88b8" stroke-width="0.6"/><line x1="1477" y1="381" x2="1486" y2="381" stroke="#c0b8a8" stroke-width="0.6"/><rect x="1462" y="383" width="9" height="5" fill="none" stroke="#9a968a" stroke-width="0.6"/><line x1="1462" y1="390" x2="1471" y2="390" stroke="#c0b8a8" stroke-width="0.6"/><rect x="1477" y="383" width="9" height="5" fill="#9cc0e0" stroke="#5a88b8" stroke-width="0.6"/><line x1="1477" y1="390" x2="1486" y2="390" stroke="#c0b8a8" stroke-width="0.6"/><rect x="1462" y="392" width="9" height="5" fill="#9cc0e0" stroke="#5a88b8" stroke-width="0.6"/><line x1="1462" y1="399" x2="1471" y2="399" stroke="#c0b8a8" stroke-width="0.6"/><rect x="1477" y="392" width="9" height="5" fill="#9cc0e0" stroke="#5a88b8" stroke-width="0.6"/><line x1="1477" y1="399" x2="1486" y2="399" stroke="#c0b8a8" stroke-width="0.6"/><rect x="1462" y="352" width="9" height="5" fill="#8a8a8a"/><rect x="1477" y="352" width="9" height="5" fill="#7a7a7a"/><line x1="1470" y1="413" x2="1484" y2="413" stroke="#b0a898" stroke-width="0.8"/>
<circle cx="1141" cy="339.5" r="1.3" fill="#666"/>
<circle cx="1140.5" cy="347.4" r="1.3" fill="#666"/>
<circle cx="1140" cy="355.4" r="1.3" fill="#666"/>
<circle cx="1139.5" cy="362" r="1.3" fill="#666"/>
<circle cx="1139" cy="369.2" r="1.3" fill="#666"/>
<circle cx="1140.5" cy="394" r="1.3" fill="#666"/>
<circle cx="1140.5" cy="401.2" r="1.3" fill="#666"/>
<circle cx="1141" cy="409.2" r="1.3" fill="#666"/>
<circle cx="1141" cy="416.5" r="1.3" fill="#666"/>
<circle cx="1265" cy="697" r="1.3" fill="#666"/>
<circle cx="1275" cy="692" r="1.3" fill="#666"/>
<circle cx="1284" cy="686.5" r="1.3" fill="#666"/>
<circle cx="1292" cy="681" r="1.3" fill="#666"/>
<circle cx="1300" cy="676" r="1.3" fill="#666"/>
</svg>
<div class="a" style="left:0;top:1013px;width:1920px;height:2px;background:#fff"></div>
<div class="a" style="left:0px;top:1015px;width:99px;height:17px;border-top:1px solid #a0a0a0;border-left:1px solid #a0a0a0"></div>
<div class="a" style="left:102px;top:1015px;width:77px;height:17px;border-top:1px solid #a0a0a0;border-left:1px solid #a0a0a0"></div>
<div class="a" style="left:182px;top:1015px;width:97px;height:17px;border-top:1px solid #a0a0a0;border-left:1px solid #a0a0a0"></div>
<div class="a" style="left:282px;top:1015px;width:97px;height:17px;border-top:1px solid #a0a0a0;border-left:1px solid #a0a0a0"></div>
<div class="a" style="left:382px;top:1015px;width:97px;height:17px;border-top:1px solid #a0a0a0;border-left:1px solid #a0a0a0"></div>
<div class="a" style="left:482px;top:1015px;width:97px;height:17px;border-top:1px solid #a0a0a0;border-left:1px solid #a0a0a0"></div>
<div class="a" style="left:582px;top:1015px;width:1338px;height:17px;border-top:1px solid #a0a0a0;border-left:1px solid #a0a0a0"></div>
<div class="t" style="left:5.60px;top:1018px;letter-spacing:0.436px;color:#000;">MapsID: 3979</div>
<div class="t" style="left:103.60px;top:1018px;letter-spacing:0.950px;color:#000;">png</div>
<div class="t" style="left:183.30px;top:1018px;letter-spacing:0.540px;color:#000;">MinZoom: 10</div>
<div class="t" style="left:283.40px;top:1018px;letter-spacing:0.500px;color:#000;">MaxZoom: 18</div>
<div class="t" style="left:384.30px;top:1018px;letter-spacing:0.450px;color:#000;">TileSize: 256</div>
<div class="t" style="left:483.40px;top:1018px;letter-spacing:0.050px;color:#000;">EPSG:3857</div>
<div class="t" style="left:583.60px;top:1018px;letter-spacing:0.517px;color:#000;">Longitude=-81.874237, Latitude=35.738710, tile=10/279/403.png</div>
</body></html>
